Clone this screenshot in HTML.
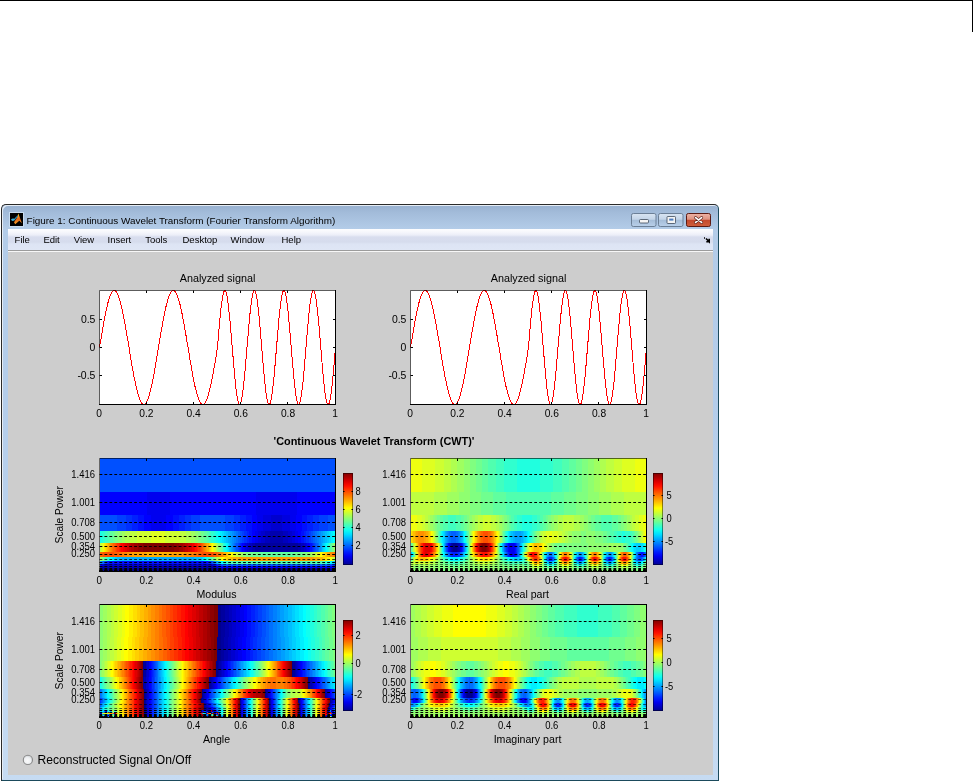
<!DOCTYPE html>
<html><head><meta charset="utf-8"><style>
html,body{margin:0;padding:0;width:973px;height:781px;overflow:hidden;background:#fff;font-family:"Liberation Sans", sans-serif}
.a{position:absolute}
</style></head><body>

<div class="a" style="left:0;top:0;width:973px;height:1px;background:#000"></div>
<div class="a" style="left:972px;top:0;width:1px;height:32px;background:#000"></div>
<div class="a" style="left:1px;top:204px;width:716px;height:575px;border:1px solid #2a2a2a;border-bottom-color:#1b4a5c;border-right-color:#1b4a5c;border-radius:5px 5px 0 0;background:linear-gradient(#97b0d0,#a3bcda 8px,#b3cce8 24px,#b4cdea 200px,#c6dbf2)"></div>
<div class="a" style="left:2px;top:205px;width:716px;height:574px;border-radius:5px 5px 0 0;box-shadow:inset 1px 1px 0 #e6edf5"></div>
<div class="a" style="left:8px;top:229px;width:705px;height:21px;background:linear-gradient(#fdfdfe,#f6f7fc 3px,#eceef8 6px,#d8ddee 8px,#d6dced 13px,#dde4f4 15px,#dfe6f5 20px)"></div>
<div class="a" style="left:8px;top:250px;width:705px;height:1px;background:#9c9c9c"></div>
<div class="a" style="left:8px;top:251px;width:705px;height:1px;background:#f7f7f7"></div>
<div class="a" style="left:8px;top:252px;width:705px;height:523px;background:#cdcdcd"></div>

<div class="a" style="left:100px;top:458px;width:235px;height:34px;background:#0050ff"></div>
<div class="a" style="left:100px;top:492px;width:235px;height:23px;background:linear-gradient(90deg,#0000ff 0 47px,#0000ef 47px 70px,#0000ff 70px 156px,#0000ef 156px 197px,#0000ff 197px 235px)"></div>
<div class="a" style="left:100px;top:515px;width:235px;height:16px;background:linear-gradient(90deg,#0050ff 0 17px,#0040ff 17px 26px,#0030ff 26px 32px,#0020ff 32px 38px,#0010ff 38px 44px,#0000ff 44px 51px,#0000ef 51px 66px,#0000ff 66px 73px,#0010ff 73px 79px,#0020ff 79px 85px,#0030ff 85px 91px,#0040ff 91px 100px,#0050ff 100px 125px,#0040ff 125px 134px,#0030ff 134px 140px,#0020ff 140px 146px,#0010ff 146px 152px,#0000ff 152px 157px,#0000ef 157px 163px,#0000df 163px 171px,#0000cf 171px 182px,#0000df 182px 190px,#0000ef 190px 196px,#0000ff 196px 202px,#0010ff 202px 207px,#0020ff 207px 213px,#0030ff 213px 219px,#0040ff 219px 228px,#0050ff 228px 235px)"></div>
<div class="a" style="left:100px;top:531px;width:235px;height:12px;background:linear-gradient(90deg,#10ffef 0 1px,#20ffdf 1px 3px,#30ffcf 3px 5px,#40ffbf 5px 8px,#50ffaf 8px 10px,#60ff9f 10px 13px,#70ff8f 13px 15px,#80ff80 15px 18px,#8fff70 18px 22px,#9fff60 22px 25px,#afff50 25px 30px,#bfff40 30px 37px,#cfff30 37px 51px,#dfff20 51px 65px,#cfff30 65px 80px,#bfff40 80px 86px,#afff50 86px 91px,#9fff60 91px 95px,#8fff70 95px 98px,#80ff80 98px 101px,#70ff8f 101px 104px,#60ff9f 104px 107px,#50ffaf 107px 109px,#40ffbf 109px 111px,#30ffcf 111px 114px,#20ffdf 114px 116px,#10ffef 116px 118px,#00ffff 118px 120px,#00efff 120px 122px,#00dfff 122px 124px,#00cfff 124px 126px,#00bfff 126px 128px,#00afff 128px 130px,#009fff 130px 132px,#008fff 132px 134px,#0080ff 134px 136px,#0070ff 136px 138px,#0060ff 138px 140px,#0050ff 140px 142px,#0040ff 142px 144px,#0030ff 144px 147px,#0020ff 147px 149px,#0010ff 149px 152px,#0000ff 152px 155px,#0000ef 155px 158px,#0000df 158px 161px,#0000cf 161px 165px,#0000bf 165px 170px,#0000af 170px 183px,#0000bf 183px 188px,#0000cf 188px 192px,#0000df 192px 195px,#0000ef 195px 198px,#0000ff 198px 201px,#0010ff 201px 204px,#0020ff 204px 206px,#0030ff 206px 209px,#0040ff 209px 211px,#0050ff 211px 213px,#0060ff 213px 215px,#0070ff 215px 217px,#0080ff 217px 219px,#008fff 219px 221px,#009fff 221px 223px,#00afff 223px 225px,#00bfff 225px 227px,#00cfff 227px 229px,#00dfff 229px 231px,#00efff 231px 233px,#00ffff 233px 235px)"></div>
<div class="a" style="left:100px;top:543px;width:235px;height:9px;background:linear-gradient(90deg,#bfff40 0 1px,#cfff30 1px 2px,#dfff20 2px 3px,#efff10 3px 4px,#ffef00 4px 5px,#ffdf00 5px 6px,#ffcf00 6px 7px,#ffbf00 7px 8px,#ffaf00 8px 9px,#ff9f00 9px 10px,#ff8f00 10px 11px,#ff8000 11px 12px,#ff7000 12px 13px,#ff6000 13px 15px,#ff5000 15px 16px,#ff4000 16px 17px,#ff3000 17px 19px,#ff2000 19px 20px,#ff1000 20px 21px,#ff0000 21px 23px,#ef0000 23px 25px,#df0000 25px 27px,#cf0000 27px 29px,#bf0000 29px 31px,#af0000 31px 34px,#9f0000 34px 38px,#8f0000 38px 43px,#800000 43px 74px,#8f0000 74px 79px,#9f0000 79px 83px,#af0000 83px 85px,#bf0000 85px 88px,#cf0000 88px 90px,#df0000 90px 92px,#ef0000 92px 94px,#ff0000 94px 95px,#ff1000 95px 97px,#ff2000 97px 98px,#ff3000 98px 100px,#ff4000 100px 101px,#ff5000 101px 102px,#ff6000 102px 103px,#ff7000 103px 104px,#ff8000 104px 105px,#ff8f00 105px 106px,#ff9f00 106px 107px,#ffaf00 107px 109px,#ffcf00 109px 110px,#ffdf00 110px 111px,#ffef00 111px 112px,#ffff00 112px 113px,#efff10 113px 114px,#dfff20 114px 115px,#cfff30 115px 116px,#bfff40 116px 117px,#9fff60 117px 118px,#8fff70 118px 119px,#80ff80 119px 120px,#70ff8f 120px 121px,#60ff9f 121px 122px,#50ffaf 122px 123px,#30ffcf 123px 124px,#20ffdf 124px 125px,#10ffef 125px 126px,#00ffff 126px 127px,#00efff 127px 128px,#00dfff 128px 129px,#00bfff 129px 130px,#00afff 130px 131px,#009fff 131px 132px,#008fff 132px 133px,#0080ff 133px 134px,#0070ff 134px 135px,#0060ff 135px 136px,#0050ff 136px 138px,#0040ff 138px 139px,#0030ff 139px 140px,#0020ff 140px 141px,#0010ff 141px 142px,#0000ff 142px 144px,#0000ef 144px 145px,#0000df 145px 147px,#0000cf 147px 149px,#0000bf 149px 152px,#0000af 152px 155px,#00009f 155px 198px,#0000af 198px 201px,#0000bf 201px 204px,#0000cf 204px 206px,#0000df 206px 207px,#0000ef 207px 209px,#0000ff 209px 210px,#0010ff 210px 212px,#0020ff 212px 213px,#0030ff 213px 214px,#0040ff 214px 215px,#0050ff 215px 216px,#0060ff 216px 218px,#0070ff 218px 219px,#008fff 219px 221px,#009fff 221px 222px,#00bfff 222px 223px,#00cfff 223px 224px,#00dfff 224px 225px,#00efff 225px 226px,#00ffff 226px 227px,#10ffef 227px 228px,#20ffdf 228px 229px,#40ffbf 229px 230px,#50ffaf 230px 231px,#60ff9f 231px 232px,#70ff8f 232px 233px,#80ff80 233px 234px,#9fff60 234px 235px)"></div>
<div class="a" style="left:100px;top:552px;width:235px;height:5px;background:linear-gradient(90deg,#ff6000 0 3px,#ff5000 3px 14px,#ff6000 14px 19px,#ff7000 19px 22px,#ff8000 22px 27px,#ff8f00 27px 32px,#ff9f00 32px 46px,#ffaf00 46px 70px,#ff9f00 70px 84px,#ff8f00 84px 90px,#ff8000 90px 94px,#ff7000 94px 98px,#ff6000 98px 102px,#ff5000 102px 114px,#ff6000 114px 117px,#ff7000 117px 119px,#ff8000 119px 121px,#ff8f00 121px 123px,#ff9f00 123px 124px,#ffaf00 124px 126px,#ffbf00 126px 127px,#ffcf00 127px 128px,#ffdf00 128px 130px,#ffef00 130px 131px,#ffff00 131px 132px,#efff10 132px 134px,#dfff20 134px 135px,#cfff30 135px 137px,#bfff40 137px 139px,#afff50 139px 141px,#9fff60 141px 143px,#8fff70 143px 146px,#80ff80 146px 150px,#70ff8f 150px 159px,#60ff9f 159px 194px,#70ff8f 194px 203px,#80ff80 203px 207px,#8fff70 207px 210px,#9fff60 210px 212px,#afff50 212px 214px,#bfff40 214px 216px,#cfff30 216px 217px,#dfff20 217px 219px,#efff10 219px 220px,#ffff00 220px 222px,#ffef00 222px 223px,#ffdf00 223px 225px,#ffcf00 225px 226px,#ffbf00 226px 227px,#ffaf00 227px 229px,#ff9f00 229px 230px,#ff8f00 230px 232px,#ff8000 232px 234px,#ff7000 234px 235px)"></div>
<div class="a" style="left:100px;top:557px;width:235px;height:4px;background:linear-gradient(90deg,#9fff60 0 1px,#8fff70 1px 2px,#80ff80 2px 3px,#70ff8f 3px 4px,#60ff9f 4px 5px,#50ffaf 5px 6px,#40ffbf 6px 7px,#30ffcf 7px 8px,#20ffdf 8px 9px,#10ffef 9px 10px,#00ffff 10px 12px,#00efff 12px 13px,#00dfff 13px 15px,#00cfff 15px 17px,#00bfff 17px 22px,#00afff 22px 94px,#00bfff 94px 99px,#00cfff 99px 102px,#00dfff 102px 103px,#00efff 103px 105px,#00ffff 105px 106px,#10ffef 106px 107px,#20ffdf 107px 109px,#40ffbf 109px 111px,#50ffaf 111px 112px,#70ff8f 112px 114px,#80ff80 114px 115px,#9fff60 115px 116px,#afff50 116px 117px,#bfff40 117px 119px,#cfff30 119px 120px,#dfff20 120px 121px,#efff10 121px 122px,#ffff00 122px 124px,#ffef00 124px 125px,#ffdf00 125px 127px,#ffcf00 127px 130px,#ffbf00 130px 133px,#ffaf00 133px 139px,#ff9f00 139px 214px,#ffaf00 214px 219px,#ffbf00 219px 223px,#ffcf00 223px 225px,#ffdf00 225px 227px,#ffef00 227px 229px,#ffff00 229px 230px,#efff10 230px 232px,#dfff20 232px 233px,#cfff30 233px 234px,#bfff40 234px 235px)"></div>
<div class="a" style="left:100px;top:561px;width:235px;height:3px;background:linear-gradient(90deg,#008fff 0 1px,#0080ff 1px 2px,#0070ff 2px 3px,#0060ff 3px 4px,#0050ff 4px 5px,#0040ff 5px 6px,#0030ff 6px 7px,#0020ff 7px 8px,#0010ff 8px 103px,#0000ff 103px 104px,#0010ff 104px 108px,#0020ff 108px 110px,#0030ff 110px 111px,#0040ff 111px 112px,#0050ff 112px 113px,#0060ff 113px 114px,#0070ff 114px 115px,#008fff 115px 116px,#009fff 116px 117px,#00afff 117px 118px,#00bfff 118px 119px,#00cfff 119px 120px,#00efff 120px 121px,#00ffff 121px 123px,#10ffef 123px 124px,#20ffdf 124px 126px,#30ffcf 126px 127px,#40ffbf 127px 131px,#50ffaf 131px 222px,#40ffbf 222px 225px,#30ffcf 225px 227px,#20ffdf 227px 229px,#10ffef 229px 230px,#00ffff 230px 231px,#00efff 231px 232px,#00dfff 232px 233px,#00cfff 233px 234px,#00bfff 234px 235px)"></div>
<div class="a" style="left:100px;top:564px;width:235px;height:2px;background:linear-gradient(90deg,#0000ff 0 1px,#0000ef 1px 2px,#0000df 2px 3px,#0000cf 3px 4px,#0000bf 4px 12px,#0000cf 12px 105px,#0000bf 105px 112px,#0000cf 112px 113px,#0000df 113px 115px,#0000ff 115px 116px,#0010ff 116px 117px,#0020ff 117px 118px,#0030ff 118px 120px,#0040ff 120px 121px,#0050ff 121px 123px,#0060ff 123px 230px,#0050ff 230px 232px,#0040ff 232px 233px,#0030ff 233px 234px,#0020ff 234px 235px)"></div>
<div class="a" style="left:100px;top:566px;width:235px;height:2px;background:linear-gradient(90deg,#0000bf 0 1px,#0000af 1px 2px,#00009f 2px 7px,#0000af 7px 110px,#00009f 110px 114px,#0000af 114px 116px,#0000bf 116px 117px,#0000cf 117px 118px,#0000df 118px 120px,#0000ef 120px 132px,#0000df 132px 134px,#0000ef 134px 233px,#0000df 233px 235px)"></div>
<div class="a" style="left:100px;top:568px;width:235px;height:1px;background:linear-gradient(90deg,#00009f 0 1px,#00008f 1px 3px,#00009f 3px 113px,#00008f 113px 115px,#00009f 115px 117px,#0000af 117px 118px,#0000bf 118px 124px,#0000af 124px 229px,#0000bf 229px 234px,#0000af 234px 235px)"></div>
<div class="a" style="left:100px;top:569px;width:235px;height:1px;background:linear-gradient(90deg,#00008f 0 118px,#00009f 118px 120px,#00008f 120px 233px,#00009f 233px 235px)"></div>
<div class="a" style="left:100px;top:570px;width:235px;height:1px;background:#00008f"></div>
<div class="a" style="left:411px;top:458px;width:235px;height:34px;background:linear-gradient(90deg,#efff10 0 11px,#dfff20 11px 24px,#cfff30 24px 33px,#bfff40 33px 40px,#afff50 40px 46px,#9fff60 46px 53px,#8fff70 53px 59px,#80ff80 59px 65px,#70ff8f 65px 71px,#60ff9f 71px 77px,#50ffaf 77px 85px,#40ffbf 85px 93px,#30ffcf 93px 106px,#20ffdf 106px 129px,#30ffcf 129px 142px,#40ffbf 142px 151px,#50ffaf 151px 158px,#60ff9f 158px 165px,#70ff8f 165px 171px,#80ff80 171px 177px,#8fff70 177px 183px,#9fff60 183px 189px,#afff50 189px 195px,#bfff40 195px 203px,#cfff30 203px 211px,#dfff20 211px 224px,#efff10 224px 235px)"></div>
<div class="a" style="left:411px;top:492px;width:235px;height:23px;background:linear-gradient(90deg,#bfff40 0 23px,#afff50 23px 36px,#9fff60 36px 48px,#8fff70 48px 59px,#80ff80 59px 70px,#70ff8f 70px 82px,#60ff9f 82px 95px,#50ffaf 95px 140px,#60ff9f 140px 153px,#70ff8f 153px 165px,#80ff80 165px 177px,#8fff70 177px 188px,#9fff60 188px 200px,#afff50 200px 213px,#bfff40 213px 235px)"></div>
<div class="a" style="left:411px;top:515px;width:235px;height:16px;background:linear-gradient(90deg,#efff10 0 6px,#dfff20 6px 11px,#cfff30 11px 14px,#bfff40 14px 17px,#afff50 17px 19px,#9fff60 19px 22px,#8fff70 22px 24px,#80ff80 24px 26px,#70ff8f 26px 29px,#60ff9f 29px 32px,#50ffaf 32px 37px,#40ffbf 37px 45px,#50ffaf 45px 50px,#60ff9f 50px 53px,#70ff8f 53px 56px,#80ff80 56px 58px,#8fff70 58px 61px,#9fff60 61px 64px,#afff50 64px 67px,#bfff40 67px 72px,#cfff30 72px 80px,#bfff40 80px 85px,#afff50 85px 88px,#9fff60 88px 91px,#8fff70 91px 93px,#80ff80 93px 96px,#70ff8f 96px 98px,#60ff9f 98px 100px,#50ffaf 100px 103px,#40ffbf 103px 106px,#30ffcf 106px 111px,#20ffdf 111px 121px,#30ffcf 121px 126px,#40ffbf 126px 129px,#50ffaf 129px 132px,#60ff9f 132px 135px,#70ff8f 135px 137px,#80ff80 137px 140px,#8fff70 140px 143px,#9fff60 143px 147px,#afff50 147px 152px,#bfff40 152px 163px,#afff50 163px 169px,#9fff60 169px 173px,#8fff70 173px 177px,#80ff80 177px 180px,#70ff8f 180px 184px,#60ff9f 184px 190px,#50ffaf 190px 201px,#60ff9f 201px 207px,#70ff8f 207px 210px,#80ff80 210px 213px,#8fff70 213px 216px,#9fff60 216px 219px,#afff50 219px 221px,#bfff40 221px 224px,#cfff30 224px 228px,#dfff20 228px 232px,#efff10 232px 235px)"></div>
<div class="a" style="left:411px;top:531px;width:235px;height:12px;background:linear-gradient(90deg,#ffdf00 0 1px,#ffcf00 1px 2px,#ffbf00 2px 4px,#ffaf00 4px 5px,#ff9f00 5px 7px,#ff8f00 7px 13px,#ff9f00 13px 15px,#ffaf00 15px 17px,#ffbf00 17px 18px,#ffcf00 18px 19px,#ffdf00 19px 20px,#ffff00 20px 21px,#efff10 21px 22px,#dfff20 22px 23px,#bfff40 23px 24px,#afff50 24px 25px,#8fff70 25px 26px,#80ff80 26px 27px,#60ff9f 27px 28px,#40ffbf 28px 29px,#30ffcf 29px 30px,#10ffef 30px 31px,#00efff 31px 32px,#00dfff 32px 33px,#00cfff 33px 34px,#00afff 34px 35px,#009fff 35px 36px,#008fff 36px 37px,#0080ff 37px 38px,#0070ff 38px 40px,#0060ff 40px 45px,#0070ff 45px 47px,#0080ff 47px 48px,#008fff 48px 49px,#009fff 49px 50px,#00afff 50px 51px,#00bfff 51px 52px,#00dfff 52px 53px,#00ffff 53px 54px,#10ffef 54px 55px,#30ffcf 55px 56px,#50ffaf 56px 57px,#60ff9f 57px 58px,#8fff70 58px 59px,#9fff60 59px 60px,#bfff40 60px 61px,#dfff20 61px 62px,#ffff00 62px 63px,#ffef00 63px 64px,#ffcf00 64px 65px,#ffbf00 65px 66px,#ff9f00 66px 67px,#ff8f00 67px 68px,#ff8000 68px 69px,#ff7000 69px 70px,#ff6000 70px 72px,#ff5000 72px 77px,#ff6000 77px 79px,#ff7000 79px 80px,#ff8000 80px 81px,#ff8f00 81px 82px,#ff9f00 82px 83px,#ffbf00 83px 84px,#ffcf00 84px 85px,#ffef00 85px 86px,#ffff00 86px 87px,#efff10 87px 88px,#cfff30 88px 89px,#afff50 89px 90px,#9fff60 90px 91px,#80ff80 91px 92px,#60ff9f 92px 93px,#50ffaf 93px 94px,#30ffcf 94px 95px,#20ffdf 95px 96px,#10ffef 96px 97px,#00efff 97px 98px,#00dfff 98px 99px,#00cfff 99px 100px,#00bfff 100px 102px,#00afff 102px 104px,#009fff 104px 110px,#00afff 110px 112px,#00bfff 112px 113px,#00cfff 113px 115px,#00dfff 115px 116px,#00efff 116px 117px,#00ffff 117px 118px,#10ffef 118px 119px,#20ffdf 119px 120px,#30ffcf 120px 121px,#40ffbf 121px 122px,#50ffaf 122px 123px,#60ff9f 123px 124px,#70ff8f 124px 125px,#80ff80 125px 126px,#8fff70 126px 128px,#9fff60 128px 129px,#afff50 129px 130px,#bfff40 130px 132px,#cfff30 132px 135px,#dfff20 135px 139px,#efff10 139px 141px,#dfff20 141px 147px,#cfff30 147px 151px,#bfff40 151px 154px,#afff50 154px 157px,#9fff60 157px 161px,#8fff70 161px 170px,#80ff80 170px 175px,#8fff70 175px 184px,#80ff80 184px 192px,#70ff8f 192px 196px,#60ff9f 196px 199px,#50ffaf 199px 203px,#40ffbf 203px 206px,#30ffcf 206px 211px,#20ffdf 211px 214px,#30ffcf 214px 219px,#40ffbf 219px 221px,#50ffaf 221px 223px,#60ff9f 223px 224px,#70ff8f 224px 226px,#80ff80 226px 227px,#8fff70 227px 228px,#9fff60 228px 229px,#afff50 229px 230px,#bfff40 230px 231px,#cfff30 231px 232px,#dfff20 232px 233px,#efff10 233px 234px,#ffff00 234px 235px)"></div>
<div class="a" style="left:411px;top:543px;width:235px;height:9px;background:linear-gradient(90deg,#60ff9f 0 1px,#80ff80 1px 2px,#afff50 2px 3px,#cfff30 3px 4px,#efff10 4px 5px,#ffdf00 5px 6px,#ffbf00 6px 7px,#ff8f00 7px 8px,#ff7000 8px 9px,#ff5000 9px 10px,#ff3000 10px 11px,#ff2000 11px 12px,#ff0000 12px 13px,#ef0000 13px 14px,#df0000 14px 19px,#ef0000 19px 20px,#ff0000 20px 21px,#ff2000 21px 22px,#ff4000 22px 23px,#ff6000 23px 24px,#ff8000 24px 25px,#ffbf00 25px 26px,#ffdf00 26px 27px,#efff10 27px 28px,#afff50 28px 29px,#80ff80 29px 30px,#50ffaf 30px 31px,#10ffef 31px 32px,#00dfff 32px 33px,#00afff 33px 34px,#0080ff 34px 35px,#0050ff 35px 36px,#0030ff 36px 37px,#0000ff 37px 38px,#0000df 38px 39px,#0000cf 39px 40px,#0000af 40px 41px,#00009f 41px 42px,#00008f 42px 46px,#00009f 46px 47px,#0000af 47px 48px,#0000bf 48px 49px,#0000df 49px 50px,#0000ff 50px 51px,#0020ff 51px 52px,#0050ff 52px 53px,#0080ff 53px 54px,#00afff 54px 55px,#00dfff 55px 56px,#20ffdf 56px 57px,#50ffaf 57px 58px,#8fff70 58px 59px,#bfff40 59px 60px,#efff10 60px 61px,#ffcf00 61px 62px,#ff9f00 62px 63px,#ff7000 63px 64px,#ff4000 64px 65px,#ff1000 65px 66px,#ef0000 66px 67px,#cf0000 67px 68px,#af0000 68px 69px,#9f0000 69px 70px,#8f0000 70px 71px,#800000 71px 75px,#8f0000 75px 76px,#9f0000 76px 77px,#af0000 77px 78px,#cf0000 78px 79px,#ef0000 79px 80px,#ff2000 80px 81px,#ff4000 81px 82px,#ff7000 82px 83px,#ff9f00 83px 84px,#ffcf00 84px 85px,#efff10 85px 86px,#bfff40 86px 87px,#8fff70 87px 88px,#50ffaf 88px 89px,#20ffdf 89px 90px,#00ffff 90px 91px,#00bfff 91px 92px,#009fff 92px 93px,#0070ff 93px 94px,#0050ff 94px 95px,#0030ff 95px 96px,#0020ff 96px 97px,#0000ff 97px 98px,#0000ef 98px 103px,#0000ff 103px 104px,#0010ff 104px 105px,#0030ff 105px 106px,#0050ff 106px 107px,#0060ff 107px 108px,#0080ff 108px 109px,#00afff 109px 110px,#00cfff 110px 111px,#00efff 111px 112px,#20ffdf 112px 113px,#40ffbf 113px 114px,#60ff9f 114px 115px,#8fff70 115px 116px,#afff50 116px 117px,#cfff30 117px 118px,#efff10 118px 119px,#ffff00 119px 120px,#ffef00 120px 121px,#ffdf00 121px 122px,#ffcf00 122px 123px,#ffbf00 123px 128px,#ffcf00 128px 130px,#ffdf00 130px 131px,#ffef00 131px 132px,#ffff00 132px 133px,#efff10 133px 134px,#dfff20 134px 135px,#cfff30 135px 136px,#bfff40 136px 137px,#afff50 137px 139px,#9fff60 139px 140px,#8fff70 140px 142px,#80ff80 142px 144px,#70ff8f 144px 155px,#80ff80 155px 177px,#8fff70 177px 198px,#9fff60 198px 209px,#8fff70 209px 212px,#80ff80 212px 213px,#70ff8f 213px 215px,#60ff9f 215px 216px,#50ffaf 216px 217px,#40ffbf 217px 218px,#30ffcf 218px 219px,#20ffdf 219px 220px,#10ffef 220px 221px,#00ffff 221px 222px,#00efff 222px 223px,#00dfff 223px 225px,#00cfff 225px 230px,#00dfff 230px 232px,#00efff 232px 233px,#10ffef 233px 234px,#20ffdf 234px 235px)"></div>
<div class="a" style="left:411px;top:552px;width:235px;height:5px;background:linear-gradient(90deg,#00bfff 0 1px,#00ffff 1px 2px,#30ffcf 2px 3px,#60ff9f 3px 4px,#afff50 4px 5px,#dfff20 5px 6px,#ffef00 6px 7px,#ffaf00 7px 8px,#ff8000 8px 9px,#ff6000 9px 10px,#ff3000 10px 11px,#ff1000 11px 12px,#ff0000 12px 13px,#ef0000 13px 14px,#df0000 14px 16px,#ef0000 16px 18px,#ff0000 18px 19px,#ff2000 19px 20px,#ff3000 20px 21px,#ff5000 21px 22px,#ff7000 22px 23px,#ff8f00 23px 24px,#ffaf00 24px 25px,#ffdf00 25px 26px,#efff10 26px 27px,#cfff30 27px 28px,#9fff60 28px 29px,#80ff80 29px 30px,#50ffaf 30px 31px,#20ffdf 31px 32px,#00ffff 32px 33px,#00dfff 33px 34px,#00bfff 34px 35px,#009fff 35px 36px,#0080ff 36px 37px,#0060ff 37px 38px,#0050ff 38px 39px,#0040ff 39px 40px,#0030ff 40px 41px,#0020ff 41px 46px,#0030ff 46px 48px,#0040ff 48px 49px,#0060ff 49px 50px,#0070ff 50px 51px,#008fff 51px 52px,#00afff 52px 53px,#00cfff 53px 54px,#00efff 54px 55px,#10ffef 55px 56px,#40ffbf 56px 57px,#60ff9f 57px 58px,#8fff70 58px 59px,#afff50 59px 60px,#cfff30 60px 61px,#ffff00 61px 62px,#ffdf00 62px 63px,#ffbf00 63px 64px,#ff9f00 64px 65px,#ff8000 65px 66px,#ff6000 66px 67px,#ff5000 67px 68px,#ff4000 68px 69px,#ff3000 69px 70px,#ff2000 70px 71px,#ff1000 71px 76px,#ff2000 76px 77px,#ff3000 77px 78px,#ff4000 78px 79px,#ff5000 79px 80px,#ff7000 80px 81px,#ff8f00 81px 82px,#ffaf00 82px 83px,#ffcf00 83px 84px,#ffef00 84px 85px,#dfff20 85px 86px,#bfff40 86px 87px,#9fff60 87px 88px,#70ff8f 88px 89px,#40ffbf 89px 90px,#20ffdf 90px 91px,#00efff 91px 92px,#00cfff 92px 93px,#009fff 93px 94px,#0080ff 94px 95px,#0060ff 95px 96px,#0040ff 96px 97px,#0020ff 97px 98px,#0010ff 98px 99px,#0000ff 99px 100px,#0000ef 100px 103px,#0000ff 103px 104px,#0010ff 104px 105px,#0020ff 105px 106px,#0050ff 106px 107px,#0070ff 107px 108px,#008fff 108px 109px,#00cfff 109px 110px,#00ffff 110px 111px,#30ffcf 111px 112px,#70ff8f 112px 113px,#afff50 113px 114px,#dfff20 114px 115px,#ffdf00 115px 116px,#ffaf00 116px 117px,#ff7000 117px 118px,#ff5000 118px 119px,#ff3000 119px 120px,#ff1000 120px 121px,#ff0000 121px 123px,#ff1000 123px 124px,#ff2000 124px 125px,#ff3000 125px 126px,#ff6000 126px 127px,#ff8f00 127px 128px,#ffbf00 128px 129px,#ffff00 129px 130px,#cfff30 130px 131px,#8fff70 131px 132px,#50ffaf 132px 133px,#20ffdf 133px 134px,#00efff 134px 135px,#00bfff 135px 136px,#009fff 136px 137px,#0080ff 137px 138px,#0070ff 138px 141px,#008fff 141px 142px,#00afff 142px 143px,#00cfff 143px 144px,#00ffff 144px 145px,#30ffcf 145px 146px,#60ff9f 146px 147px,#9fff60 147px 148px,#cfff30 148px 149px,#ffff00 149px 150px,#ffcf00 150px 151px,#ffaf00 151px 152px,#ff8f00 152px 153px,#ff8000 153px 156px,#ff9f00 156px 157px,#ffaf00 157px 158px,#ffcf00 158px 159px,#efff10 159px 160px,#cfff30 160px 161px,#9fff60 161px 162px,#60ff9f 162px 163px,#30ffcf 163px 164px,#00ffff 164px 165px,#00cfff 165px 166px,#00bfff 166px 167px,#009fff 167px 168px,#008fff 168px 170px,#009fff 170px 171px,#00afff 171px 172px,#00cfff 172px 173px,#00efff 173px 174px,#30ffcf 174px 175px,#50ffaf 175px 176px,#80ff80 176px 177px,#bfff40 177px 178px,#efff10 178px 179px,#ffef00 179px 180px,#ffbf00 180px 181px,#ff9f00 181px 182px,#ff8f00 182px 183px,#ff8000 183px 185px,#ff8f00 185px 186px,#ffaf00 186px 187px,#ffcf00 187px 188px,#ffef00 188px 189px,#dfff20 189px 190px,#afff50 190px 191px,#80ff80 191px 192px,#40ffbf 192px 193px,#10ffef 193px 194px,#00efff 194px 195px,#00bfff 195px 196px,#00afff 196px 197px,#009fff 197px 198px,#008fff 198px 200px,#009fff 200px 201px,#00bfff 201px 202px,#00dfff 202px 203px,#10ffef 203px 204px,#40ffbf 204px 205px,#70ff8f 205px 206px,#9fff60 206px 207px,#dfff20 207px 208px,#ffef00 208px 209px,#ffbf00 209px 210px,#ff8f00 210px 211px,#ff8000 211px 212px,#ff6000 212px 215px,#ff7000 215px 216px,#ff8f00 216px 217px,#ffaf00 217px 218px,#ffcf00 218px 219px,#efff10 219px 220px,#bfff40 220px 221px,#80ff80 221px 222px,#40ffbf 222px 223px,#00ffff 223px 224px,#00cfff 224px 225px,#008fff 225px 226px,#0070ff 226px 227px,#0050ff 227px 228px,#0030ff 228px 229px,#0020ff 229px 230px,#0010ff 230px 232px,#0020ff 232px 233px,#0040ff 233px 234px,#0060ff 234px 235px)"></div>
<div class="a" style="left:411px;top:557px;width:235px;height:4px;background:linear-gradient(90deg,#50ffaf 0 1px,#80ff80 1px 2px,#9fff60 2px 3px,#cfff30 3px 4px,#efff10 4px 5px,#ffff00 5px 6px,#ffdf00 6px 7px,#ffcf00 7px 9px,#ffbf00 9px 14px,#ffcf00 14px 16px,#ffdf00 16px 18px,#ffef00 18px 19px,#ffff00 19px 21px,#efff10 21px 22px,#dfff20 22px 24px,#cfff30 24px 25px,#bfff40 25px 26px,#afff50 26px 27px,#9fff60 27px 28px,#8fff70 28px 29px,#80ff80 29px 30px,#70ff8f 30px 31px,#60ff9f 31px 32px,#50ffaf 32px 33px,#40ffbf 33px 34px,#30ffcf 34px 35px,#20ffdf 35px 37px,#10ffef 37px 38px,#00ffff 38px 40px,#00efff 40px 47px,#00ffff 47px 49px,#10ffef 49px 51px,#20ffdf 51px 52px,#30ffcf 52px 53px,#40ffbf 53px 55px,#60ff9f 55px 57px,#70ff8f 57px 58px,#8fff70 58px 59px,#9fff60 59px 61px,#bfff40 61px 63px,#cfff30 63px 64px,#dfff20 64px 65px,#efff10 65px 66px,#ffff00 66px 68px,#ffef00 68px 70px,#ffdf00 70px 77px,#ffef00 77px 79px,#ffff00 79px 80px,#efff10 80px 82px,#dfff20 82px 83px,#cfff30 83px 84px,#bfff40 84px 85px,#afff50 85px 86px,#9fff60 86px 87px,#8fff70 87px 88px,#80ff80 88px 89px,#70ff8f 89px 90px,#60ff9f 90px 91px,#50ffaf 91px 92px,#40ffbf 92px 94px,#30ffcf 94px 95px,#20ffdf 95px 96px,#10ffef 96px 97px,#00ffff 97px 99px,#00efff 99px 101px,#00dfff 101px 103px,#00cfff 103px 109px,#00dfff 109px 110px,#00efff 110px 111px,#10ffef 111px 112px,#30ffcf 112px 113px,#40ffbf 113px 114px,#70ff8f 114px 115px,#9fff60 115px 116px,#bfff40 116px 117px,#ffff00 117px 118px,#ffdf00 118px 119px,#ffaf00 119px 120px,#ff8000 120px 121px,#ff6000 121px 122px,#ff4000 122px 123px,#ff3000 123px 126px,#ff5000 126px 127px,#ff7000 127px 128px,#ff8f00 128px 129px,#ffcf00 129px 130px,#efff10 130px 131px,#afff50 131px 132px,#60ff9f 132px 133px,#10ffef 133px 134px,#00dfff 134px 135px,#008fff 135px 136px,#0060ff 136px 137px,#0040ff 137px 138px,#0020ff 138px 141px,#0040ff 141px 142px,#0060ff 142px 143px,#008fff 143px 144px,#00cfff 144px 145px,#20ffdf 145px 146px,#60ff9f 146px 147px,#bfff40 147px 148px,#ffff00 148px 149px,#ffbf00 149px 150px,#ff7000 150px 151px,#ff4000 151px 152px,#ff2000 152px 153px,#ff1000 153px 154px,#ff0000 154px 155px,#ff1000 155px 156px,#ff3000 156px 157px,#ff5000 157px 158px,#ff8f00 158px 159px,#ffcf00 159px 160px,#dfff20 160px 161px,#9fff60 161px 162px,#40ffbf 162px 163px,#00ffff 163px 164px,#00bfff 164px 165px,#0080ff 165px 166px,#0050ff 166px 167px,#0030ff 167px 168px,#0010ff 168px 170px,#0020ff 170px 171px,#0040ff 171px 172px,#0070ff 172px 173px,#009fff 173px 174px,#00efff 174px 175px,#40ffbf 175px 176px,#80ff80 176px 177px,#dfff20 177px 178px,#ffdf00 178px 179px,#ff9f00 179px 180px,#ff6000 180px 181px,#ff3000 181px 182px,#ff1000 182px 183px,#ff0000 183px 184px,#ff1000 184px 185px,#ff2000 185px 186px,#ff4000 186px 187px,#ff7000 187px 188px,#ff9f00 188px 189px,#ffef00 189px 190px,#bfff40 190px 191px,#80ff80 191px 192px,#20ffdf 192px 193px,#00dfff 193px 194px,#009fff 194px 195px,#0060ff 195px 196px,#0040ff 196px 197px,#0020ff 197px 198px,#0010ff 198px 199px,#0020ff 199px 200px,#0030ff 200px 201px,#0060ff 201px 202px,#008fff 202px 203px,#00bfff 203px 204px,#20ffdf 204px 205px,#60ff9f 205px 206px,#afff50 206px 207px,#ffff00 207px 208px,#ffbf00 208px 209px,#ff8000 209px 210px,#ff5000 210px 211px,#ff2000 211px 212px,#ff1000 212px 215px,#ff3000 215px 216px,#ff5000 216px 217px,#ff8000 217px 218px,#ffbf00 218px 219px,#efff10 219px 220px,#afff50 220px 221px,#70ff8f 221px 222px,#20ffdf 222px 223px,#00dfff 223px 224px,#00afff 224px 225px,#0080ff 225px 226px,#0060ff 226px 227px,#0050ff 227px 228px,#0040ff 228px 230px,#0050ff 230px 231px,#0070ff 231px 232px,#008fff 232px 233px,#00bfff 233px 234px,#00efff 234px 235px)"></div>
<div class="a" style="left:411px;top:561px;width:235px;height:3px;background:linear-gradient(90deg,#9fff60 0 1px,#bfff40 1px 3px,#cfff30 3px 18px,#bfff40 18px 22px,#afff50 22px 25px,#9fff60 25px 27px,#8fff70 27px 29px,#80ff80 29px 31px,#70ff8f 31px 34px,#60ff9f 34px 36px,#50ffaf 36px 40px,#40ffbf 40px 48px,#50ffaf 48px 52px,#60ff9f 52px 54px,#70ff8f 54px 56px,#80ff80 56px 58px,#8fff70 58px 61px,#9fff60 61px 63px,#afff50 63px 66px,#bfff40 66px 69px,#cfff30 69px 77px,#bfff40 77px 81px,#afff50 81px 84px,#9fff60 84px 86px,#8fff70 86px 88px,#80ff80 88px 90px,#70ff8f 90px 92px,#60ff9f 92px 95px,#50ffaf 95px 100px,#40ffbf 100px 114px,#50ffaf 114px 115px,#60ff9f 115px 116px,#70ff8f 116px 117px,#8fff70 117px 118px,#afff50 118px 119px,#cfff30 119px 120px,#efff10 120px 121px,#ffef00 121px 122px,#ffcf00 122px 123px,#ffbf00 123px 124px,#ffaf00 124px 125px,#ff9f00 125px 126px,#ffaf00 126px 127px,#ffbf00 127px 128px,#ffcf00 128px 129px,#ffff00 129px 130px,#dfff20 130px 131px,#afff50 131px 132px,#80ff80 132px 133px,#50ffaf 133px 134px,#20ffdf 134px 135px,#00efff 135px 136px,#00cfff 136px 137px,#00afff 137px 138px,#009fff 138px 141px,#00afff 141px 142px,#00cfff 142px 143px,#00dfff 143px 144px,#10ffef 144px 145px,#40ffbf 145px 146px,#70ff8f 146px 147px,#9fff60 147px 148px,#cfff30 148px 149px,#ffff00 149px 150px,#ffcf00 150px 151px,#ffaf00 151px 152px,#ff9f00 152px 153px,#ff8f00 153px 156px,#ff9f00 156px 157px,#ffbf00 157px 158px,#ffdf00 158px 159px,#efff10 159px 160px,#bfff40 160px 161px,#8fff70 161px 162px,#60ff9f 162px 163px,#30ffcf 163px 164px,#10ffef 164px 165px,#00dfff 165px 166px,#00bfff 166px 167px,#00afff 167px 168px,#009fff 168px 171px,#00bfff 171px 172px,#00dfff 172px 173px,#00ffff 173px 174px,#30ffcf 174px 175px,#50ffaf 175px 176px,#80ff80 176px 177px,#bfff40 177px 178px,#efff10 178px 179px,#ffef00 179px 180px,#ffbf00 180px 181px,#ffaf00 181px 182px,#ff9f00 182px 183px,#ff8f00 183px 185px,#ff9f00 185px 186px,#ffaf00 186px 187px,#ffcf00 187px 188px,#ffef00 188px 189px,#dfff20 189px 190px,#afff50 190px 191px,#80ff80 191px 192px,#40ffbf 192px 193px,#20ffdf 193px 194px,#00efff 194px 195px,#00cfff 195px 196px,#00afff 196px 197px,#009fff 197px 200px,#00afff 200px 201px,#00cfff 201px 202px,#00efff 202px 203px,#10ffef 203px 204px,#40ffbf 204px 205px,#70ff8f 205px 206px,#9fff60 206px 207px,#cfff30 207px 208px,#ffff00 208px 209px,#ffdf00 209px 210px,#ffaf00 210px 211px,#ff9f00 211px 212px,#ff8f00 212px 215px,#ff9f00 215px 216px,#ffbf00 216px 217px,#ffdf00 217px 218px,#efff10 218px 219px,#bfff40 219px 220px,#8fff70 220px 221px,#60ff9f 221px 222px,#30ffcf 222px 223px,#00ffff 223px 224px,#00dfff 224px 225px,#00cfff 225px 226px,#00bfff 226px 227px,#00afff 227px 228px,#00bfff 228px 229px,#00cfff 229px 230px,#00dfff 230px 231px,#00ffff 231px 232px,#20ffdf 232px 233px,#40ffbf 233px 234px,#70ff8f 234px 235px)"></div>
<div class="a" style="left:411px;top:564px;width:235px;height:2px;background:linear-gradient(90deg,#9fff60 0 1px,#afff50 1px 3px,#9fff60 3px 12px,#afff50 12px 18px,#9fff60 18px 25px,#8fff70 25px 29px,#80ff80 29px 34px,#70ff8f 34px 40px,#60ff9f 40px 48px,#70ff8f 48px 54px,#80ff80 54px 58px,#8fff70 58px 63px,#9fff60 63px 69px,#afff50 69px 77px,#9fff60 77px 84px,#8fff70 84px 88px,#80ff80 88px 93px,#70ff8f 93px 99px,#60ff9f 99px 105px,#70ff8f 105px 113px,#60ff9f 113px 116px,#70ff8f 116px 118px,#80ff80 118px 119px,#8fff70 119px 120px,#afff50 120px 121px,#bfff40 121px 122px,#dfff20 122px 123px,#efff10 123px 128px,#dfff20 128px 129px,#bfff40 129px 130px,#afff50 130px 131px,#9fff60 131px 132px,#80ff80 132px 133px,#70ff8f 133px 134px,#50ffaf 134px 135px,#40ffbf 135px 136px,#30ffcf 136px 137px,#20ffdf 137px 142px,#30ffcf 142px 143px,#40ffbf 143px 144px,#50ffaf 144px 145px,#60ff9f 145px 146px,#80ff80 146px 147px,#8fff70 147px 148px,#afff50 148px 149px,#bfff40 149px 150px,#cfff30 150px 151px,#dfff20 151px 152px,#efff10 152px 157px,#dfff20 157px 158px,#cfff30 158px 159px,#bfff40 159px 160px,#9fff60 160px 161px,#8fff70 161px 162px,#70ff8f 162px 163px,#60ff9f 163px 164px,#50ffaf 164px 165px,#40ffbf 165px 166px,#30ffcf 166px 167px,#20ffdf 167px 171px,#30ffcf 171px 173px,#40ffbf 173px 174px,#60ff9f 174px 175px,#70ff8f 175px 176px,#80ff80 176px 177px,#9fff60 177px 178px,#afff50 178px 179px,#cfff30 179px 180px,#dfff20 180px 182px,#efff10 182px 186px,#dfff20 186px 187px,#cfff30 187px 188px,#bfff40 188px 189px,#afff50 189px 190px,#9fff60 190px 191px,#80ff80 191px 192px,#70ff8f 192px 193px,#50ffaf 193px 194px,#40ffbf 194px 195px,#30ffcf 195px 196px,#20ffdf 196px 201px,#30ffcf 201px 202px,#40ffbf 202px 203px,#50ffaf 203px 204px,#60ff9f 204px 205px,#80ff80 205px 206px,#8fff70 206px 207px,#afff50 207px 208px,#bfff40 208px 209px,#cfff30 209px 210px,#dfff20 210px 211px,#efff10 211px 216px,#dfff20 216px 217px,#cfff30 217px 218px,#bfff40 218px 219px,#9fff60 219px 220px,#8fff70 220px 221px,#70ff8f 221px 222px,#60ff9f 222px 223px,#50ffaf 223px 224px,#30ffcf 224px 225px,#20ffdf 225px 230px,#30ffcf 230px 231px,#50ffaf 231px 232px,#60ff9f 232px 233px,#70ff8f 233px 234px,#8fff70 234px 235px)"></div>
<div class="a" style="left:411px;top:566px;width:235px;height:2px;background:linear-gradient(90deg,#9fff60 0 2px,#8fff70 2px 9px,#9fff60 9px 20px,#8fff70 20px 29px,#80ff80 29px 38px,#70ff8f 38px 49px,#80ff80 49px 58px,#8fff70 58px 68px,#9fff60 68px 79px,#8fff70 79px 88px,#80ff80 88px 97px,#70ff8f 97px 108px,#80ff80 108px 115px,#70ff8f 115px 117px,#80ff80 117px 119px,#8fff70 119px 120px,#9fff60 120px 121px,#afff50 121px 123px,#bfff40 123px 126px,#afff50 126px 129px,#9fff60 129px 131px,#8fff70 131px 132px,#80ff80 132px 134px,#70ff8f 134px 135px,#60ff9f 135px 138px,#50ffaf 138px 141px,#60ff9f 141px 144px,#70ff8f 144px 145px,#80ff80 145px 147px,#8fff70 147px 148px,#9fff60 148px 150px,#afff50 150px 153px,#bfff40 153px 156px,#afff50 156px 159px,#9fff60 159px 160px,#8fff70 160px 162px,#80ff80 162px 163px,#70ff8f 163px 165px,#60ff9f 165px 168px,#50ffaf 168px 170px,#60ff9f 170px 173px,#70ff8f 173px 175px,#80ff80 175px 177px,#8fff70 177px 178px,#9fff60 178px 180px,#afff50 180px 183px,#bfff40 183px 185px,#afff50 185px 188px,#9fff60 188px 190px,#8fff70 190px 191px,#80ff80 191px 193px,#70ff8f 193px 195px,#60ff9f 195px 197px,#50ffaf 197px 200px,#60ff9f 200px 203px,#70ff8f 203px 204px,#80ff80 204px 206px,#8fff70 206px 207px,#9fff60 207px 209px,#afff50 209px 212px,#bfff40 212px 215px,#afff50 215px 217px,#9fff60 217px 219px,#8fff70 219px 221px,#80ff80 221px 222px,#70ff8f 222px 224px,#60ff9f 224px 226px,#50ffaf 226px 230px,#60ff9f 230px 231px,#70ff8f 231px 233px,#80ff80 233px 234px,#8fff70 234px 235px)"></div>
<div class="a" style="left:411px;top:568px;width:235px;height:1px;background:linear-gradient(90deg,#8fff70 0 29px,#80ff80 29px 58px,#8fff70 58px 88px,#80ff80 88px 119px,#8fff70 119px 121px,#9fff60 121px 129px,#8fff70 129px 132px,#80ff80 132px 136px,#70ff8f 136px 144px,#80ff80 144px 147px,#8fff70 147px 150px,#9fff60 150px 159px,#8fff70 159px 162px,#80ff80 162px 165px,#70ff8f 165px 173px,#80ff80 173px 177px,#8fff70 177px 180px,#9fff60 180px 188px,#8fff70 188px 191px,#80ff80 191px 195px,#70ff8f 195px 203px,#80ff80 203px 206px,#8fff70 206px 209px,#9fff60 209px 217px,#8fff70 217px 221px,#80ff80 221px 224px,#70ff8f 224px 232px,#80ff80 232px 234px,#8fff70 234px 235px)"></div>
<div class="a" style="left:411px;top:569px;width:235px;height:1px;background:linear-gradient(90deg,#8fff70 0 29px,#80ff80 29px 58px,#8fff70 58px 88px,#80ff80 88px 118px,#8fff70 118px 132px,#80ff80 132px 147px,#8fff70 147px 162px,#80ff80 162px 176px,#8fff70 176px 191px,#80ff80 191px 206px,#8fff70 206px 221px,#80ff80 221px 234px,#8fff70 234px 235px)"></div>
<div class="a" style="left:411px;top:570px;width:235px;height:1px;background:linear-gradient(90deg,#8fff70 0 30px,#80ff80 30px 58px,#8fff70 58px 89px,#80ff80 89px 118px,#8fff70 118px 132px,#80ff80 132px 147px,#8fff70 147px 162px,#80ff80 162px 176px,#8fff70 176px 192px,#80ff80 192px 206px,#8fff70 206px 221px,#80ff80 221px 235px)"></div>
<div class="a" style="left:100px;top:604px;width:235px;height:33px;background:linear-gradient(90deg,#8fff70 0 3px,#9fff60 3px 7px,#afff50 7px 11px,#bfff40 11px 14px,#cfff30 14px 18px,#dfff20 18px 22px,#efff10 22px 25px,#ffff00 25px 29px,#ffef00 29px 33px,#ffdf00 33px 37px,#ffcf00 37px 40px,#ffbf00 40px 44px,#ffaf00 44px 48px,#ff9f00 48px 51px,#ff8f00 51px 55px,#ff8000 55px 59px,#ff7000 59px 62px,#ff6000 62px 66px,#ff5000 66px 70px,#ff4000 70px 73px,#ff3000 73px 77px,#ff2000 77px 81px,#ff1000 81px 85px,#ff0000 85px 88px,#ef0000 88px 92px,#df0000 92px 96px,#cf0000 96px 99px,#bf0000 99px 103px,#af0000 103px 107px,#9f0000 107px 110px,#8f0000 110px 114px,#800000 114px 118px,#00008f 118px 121px,#00009f 121px 125px,#0000af 125px 129px,#0000bf 129px 132px,#0000cf 132px 136px,#0000df 136px 140px,#0000ef 140px 144px,#0000ff 144px 147px,#0010ff 147px 151px,#0020ff 151px 155px,#0030ff 155px 158px,#0040ff 158px 162px,#0050ff 162px 166px,#0060ff 166px 169px,#0070ff 169px 173px,#0080ff 173px 177px,#008fff 177px 180px,#009fff 180px 184px,#00afff 184px 188px,#00bfff 188px 192px,#00cfff 192px 195px,#00dfff 195px 199px,#00efff 199px 203px,#00ffff 203px 206px,#10ffef 206px 210px,#20ffdf 210px 214px,#30ffcf 214px 217px,#40ffbf 217px 221px,#50ffaf 221px 225px,#60ff9f 225px 228px,#70ff8f 228px 232px,#80ff80 232px 235px)"></div>
<div class="a" style="left:100px;top:637px;width:235px;height:24px;background:linear-gradient(90deg,#8fff70 0 3px,#9fff60 3px 7px,#afff50 7px 10px,#bfff40 10px 14px,#cfff30 14px 17px,#dfff20 17px 21px,#efff10 21px 24px,#ffff00 24px 28px,#ffef00 28px 32px,#ffdf00 32px 35px,#ffcf00 35px 39px,#ffbf00 39px 43px,#ffaf00 43px 47px,#ff9f00 47px 51px,#ff8f00 51px 55px,#ff8000 55px 59px,#ff7000 59px 63px,#ff6000 63px 67px,#ff5000 67px 70px,#ff4000 70px 74px,#ff3000 74px 78px,#ff2000 78px 82px,#ff1000 82px 85px,#ff0000 85px 89px,#ef0000 89px 93px,#df0000 93px 96px,#cf0000 96px 100px,#bf0000 100px 103px,#af0000 103px 107px,#9f0000 107px 111px,#8f0000 111px 114px,#800000 114px 117px,#00008f 117px 121px,#00009f 121px 124px,#0000af 124px 128px,#0000bf 128px 131px,#0000cf 131px 135px,#0000df 135px 138px,#0000ef 138px 142px,#0000ff 142px 146px,#0010ff 146px 150px,#0020ff 150px 153px,#0030ff 153px 157px,#0040ff 157px 161px,#0050ff 161px 165px,#0060ff 165px 169px,#0070ff 169px 173px,#0080ff 173px 177px,#008fff 177px 181px,#009fff 181px 185px,#00afff 185px 189px,#00bfff 189px 192px,#00cfff 192px 196px,#00dfff 196px 200px,#00efff 200px 204px,#00ffff 204px 208px,#10ffef 208px 211px,#20ffdf 211px 215px,#30ffcf 215px 219px,#40ffbf 219px 222px,#50ffaf 222px 225px,#60ff9f 225px 229px,#70ff8f 229px 233px,#80ff80 233px 235px)"></div>
<div class="a" style="left:100px;top:661px;width:235px;height:16px;background:linear-gradient(90deg,#80ff80 0 1px,#8fff70 1px 2px,#9fff60 2px 4px,#afff50 4px 5px,#bfff40 5px 7px,#cfff30 7px 8px,#dfff20 8px 10px,#efff10 10px 11px,#ffff00 11px 13px,#ffef00 13px 14px,#ffdf00 14px 15px,#ffcf00 15px 17px,#ffbf00 17px 18px,#ffaf00 18px 20px,#ff9f00 20px 21px,#ff8f00 21px 22px,#ff8000 22px 24px,#ff7000 24px 25px,#ff6000 25px 26px,#ff5000 26px 28px,#ff4000 28px 29px,#ff3000 29px 30px,#ff2000 30px 32px,#ff1000 32px 33px,#ff0000 33px 34px,#ef0000 34px 35px,#df0000 35px 37px,#cf0000 37px 38px,#bf0000 38px 39px,#af0000 39px 40px,#9f0000 40px 41px,#8f0000 41px 42px,#800000 42px 43px,#00008f 43px 44px,#00009f 44px 46px,#0000bf 46px 47px,#0000cf 47px 49px,#0000ef 49px 50px,#0000ff 50px 51px,#0010ff 51px 52px,#0020ff 52px 53px,#0030ff 53px 54px,#0040ff 54px 55px,#0050ff 55px 56px,#0060ff 56px 57px,#0070ff 57px 58px,#008fff 58px 59px,#009fff 59px 60px,#00afff 60px 61px,#00bfff 61px 62px,#00cfff 62px 63px,#00dfff 63px 64px,#00efff 64px 65px,#00ffff 65px 66px,#10ffef 66px 67px,#20ffdf 67px 68px,#30ffcf 68px 69px,#40ffbf 69px 70px,#50ffaf 70px 71px,#60ff9f 71px 72px,#70ff8f 72px 73px,#80ff80 73px 74px,#8fff70 74px 75px,#9fff60 75px 76px,#afff50 76px 77px,#bfff40 77px 78px,#cfff30 78px 79px,#dfff20 79px 81px,#efff10 81px 82px,#ffff00 82px 83px,#ffef00 83px 84px,#ffdf00 84px 85px,#ffcf00 85px 87px,#ffbf00 87px 88px,#ffaf00 88px 89px,#ff9f00 89px 91px,#ff8f00 91px 92px,#ff8000 92px 93px,#ff7000 93px 95px,#ff6000 95px 96px,#ff5000 96px 97px,#ff4000 97px 99px,#ff3000 99px 100px,#ff2000 100px 102px,#ff1000 102px 103px,#ff0000 103px 105px,#ef0000 105px 106px,#df0000 106px 107px,#cf0000 107px 109px,#bf0000 109px 110px,#af0000 110px 112px,#9f0000 112px 113px,#8f0000 113px 115px,#800000 115px 116px,#00008f 116px 118px,#00009f 118px 119px,#0000af 119px 121px,#0000bf 121px 122px,#0000cf 122px 124px,#0000df 124px 125px,#0000ef 125px 127px,#0000ff 127px 128px,#0010ff 128px 130px,#0020ff 130px 131px,#0030ff 131px 133px,#0040ff 133px 134px,#0050ff 134px 136px,#0060ff 136px 137px,#0070ff 137px 139px,#0080ff 139px 140px,#008fff 140px 141px,#009fff 141px 143px,#00afff 143px 144px,#00bfff 144px 146px,#00cfff 146px 147px,#00dfff 147px 149px,#00efff 149px 150px,#00ffff 150px 151px,#10ffef 151px 153px,#20ffdf 153px 154px,#30ffcf 154px 155px,#40ffbf 155px 156px,#50ffaf 156px 158px,#60ff9f 158px 159px,#70ff8f 159px 160px,#80ff80 160px 161px,#8fff70 161px 162px,#9fff60 162px 163px,#afff50 163px 164px,#bfff40 164px 165px,#cfff30 165px 166px,#dfff20 166px 167px,#efff10 167px 168px,#ffff00 168px 169px,#ffef00 169px 170px,#ffdf00 170px 171px,#ffcf00 171px 172px,#ffbf00 172px 173px,#ffaf00 173px 174px,#ff9f00 174px 175px,#ff8f00 175px 176px,#ff8000 176px 177px,#ff6000 177px 178px,#ff5000 178px 179px,#ff4000 179px 180px,#ff3000 180px 181px,#ff2000 181px 182px,#ff1000 182px 183px,#ff0000 183px 184px,#ef0000 184px 185px,#df0000 185px 186px,#cf0000 186px 187px,#bf0000 187px 188px,#af0000 188px 189px,#9f0000 189px 190px,#8f0000 190px 191px,#800000 191px 192px,#00008f 192px 193px,#00009f 193px 195px,#0000af 195px 196px,#0000bf 196px 197px,#0000cf 197px 198px,#0000df 198px 199px,#0000ef 199px 201px,#0000ff 201px 202px,#0010ff 202px 203px,#0020ff 203px 205px,#0030ff 205px 206px,#0040ff 206px 207px,#0050ff 207px 209px,#0060ff 209px 210px,#0070ff 210px 212px,#0080ff 212px 213px,#008fff 213px 215px,#009fff 215px 216px,#00afff 216px 218px,#00bfff 218px 219px,#00cfff 219px 221px,#00dfff 221px 222px,#00efff 222px 224px,#00ffff 224px 225px,#10ffef 225px 227px,#20ffdf 227px 228px,#30ffcf 228px 230px,#40ffbf 230px 231px,#50ffaf 231px 233px,#60ff9f 233px 234px,#70ff8f 234px 235px)"></div>
<div class="a" style="left:100px;top:677px;width:235px;height:12px;background:linear-gradient(90deg,#10ffef 0 1px,#20ffdf 1px 2px,#30ffcf 2px 3px,#40ffbf 3px 4px,#50ffaf 4px 5px,#60ff9f 5px 6px,#70ff8f 6px 7px,#80ff80 7px 9px,#8fff70 9px 10px,#9fff60 10px 11px,#afff50 11px 12px,#bfff40 12px 13px,#cfff30 13px 14px,#dfff20 14px 15px,#efff10 15px 16px,#ffff00 16px 17px,#ffef00 17px 19px,#ffcf00 19px 21px,#ffbf00 21px 22px,#ffaf00 22px 23px,#ff9f00 23px 24px,#ff8f00 24px 25px,#ff8000 25px 26px,#ff7000 26px 27px,#ff6000 27px 28px,#ff5000 28px 29px,#ff4000 29px 30px,#ff3000 30px 31px,#ff2000 31px 32px,#ff1000 32px 33px,#ff0000 33px 34px,#ef0000 34px 35px,#df0000 35px 36px,#cf0000 36px 37px,#bf0000 37px 38px,#af0000 38px 39px,#9f0000 39px 40px,#8f0000 40px 41px,#800000 41px 43px,#00009f 43px 44px,#0000af 44px 46px,#0000cf 46px 48px,#0000df 48px 49px,#0000ff 49px 51px,#0010ff 51px 52px,#0030ff 52px 54px,#0040ff 54px 55px,#0060ff 55px 57px,#0070ff 57px 58px,#008fff 58px 60px,#009fff 60px 61px,#00bfff 61px 63px,#00cfff 63px 64px,#00efff 64px 66px,#00ffff 66px 67px,#20ffdf 67px 69px,#30ffcf 69px 70px,#50ffaf 70px 72px,#60ff9f 72px 73px,#70ff8f 73px 74px,#80ff80 74px 75px,#8fff70 75px 76px,#9fff60 76px 77px,#afff50 77px 78px,#bfff40 78px 79px,#cfff30 79px 80px,#dfff20 80px 81px,#efff10 81px 82px,#ffff00 82px 83px,#ffef00 83px 84px,#ffdf00 84px 85px,#ffcf00 85px 86px,#ffbf00 86px 87px,#ffaf00 87px 88px,#ff9f00 88px 89px,#ff8f00 89px 90px,#ff8000 90px 91px,#ff7000 91px 92px,#ff6000 92px 93px,#ff5000 93px 94px,#ff4000 94px 95px,#ff3000 95px 97px,#ff1000 97px 99px,#ff0000 99px 100px,#ef0000 100px 101px,#df0000 101px 102px,#cf0000 102px 103px,#bf0000 103px 104px,#af0000 104px 105px,#9f0000 105px 106px,#8f0000 106px 107px,#800000 107px 109px,#00009f 109px 111px,#0000af 111px 112px,#0000bf 112px 113px,#0000cf 113px 114px,#0000df 114px 115px,#0000ef 115px 116px,#0000ff 116px 117px,#0010ff 117px 118px,#0020ff 118px 120px,#0030ff 120px 121px,#0040ff 121px 122px,#0050ff 122px 123px,#0060ff 123px 124px,#0070ff 124px 125px,#0080ff 125px 126px,#008fff 126px 128px,#009fff 128px 129px,#00afff 129px 130px,#00bfff 130px 131px,#00cfff 131px 132px,#00dfff 132px 133px,#00efff 133px 135px,#00ffff 135px 136px,#10ffef 136px 137px,#20ffdf 137px 138px,#30ffcf 138px 139px,#40ffbf 139px 141px,#50ffaf 141px 142px,#60ff9f 142px 143px,#70ff8f 143px 144px,#80ff80 144px 145px,#8fff70 145px 147px,#9fff60 147px 148px,#afff50 148px 149px,#bfff40 149px 150px,#cfff30 150px 152px,#dfff20 152px 153px,#efff10 153px 154px,#ffff00 154px 156px,#ffef00 156px 157px,#ffdf00 157px 158px,#ffcf00 158px 160px,#ffbf00 160px 161px,#ffaf00 161px 163px,#ff9f00 163px 165px,#ff8f00 165px 167px,#ff8000 167px 170px,#ff7000 170px 176px,#ff8000 176px 184px,#ff7000 184px 187px,#ff6000 187px 189px,#ff5000 189px 191px,#ff4000 191px 192px,#ff3000 192px 194px,#ff2000 194px 195px,#ff1000 195px 196px,#ff0000 196px 198px,#ef0000 198px 199px,#df0000 199px 201px,#cf0000 201px 202px,#bf0000 202px 203px,#af0000 203px 204px,#9f0000 204px 205px,#8f0000 205px 207px,#800000 207px 208px,#00008f 208px 209px,#00009f 209px 210px,#0000af 210px 212px,#0000bf 212px 213px,#0000cf 213px 214px,#0000df 214px 215px,#0000ef 215px 216px,#0000ff 216px 217px,#0010ff 217px 219px,#0020ff 219px 220px,#0030ff 220px 221px,#0040ff 221px 222px,#0050ff 222px 223px,#0060ff 223px 225px,#0070ff 225px 226px,#0080ff 226px 227px,#008fff 227px 228px,#009fff 228px 229px,#00afff 229px 230px,#00bfff 230px 231px,#00cfff 231px 233px,#00dfff 233px 234px,#00efff 234px 235px)"></div>
<div class="a" style="left:100px;top:689px;width:235px;height:9px;background:linear-gradient(90deg,#0070ff 0 1px,#0080ff 1px 2px,#009fff 2px 3px,#00afff 3px 4px,#00bfff 4px 5px,#00cfff 5px 6px,#00dfff 6px 7px,#00ffff 7px 8px,#10ffef 8px 9px,#20ffdf 9px 10px,#30ffcf 10px 11px,#40ffbf 11px 12px,#50ffaf 12px 13px,#70ff8f 13px 14px,#80ff80 14px 15px,#8fff70 15px 16px,#9fff60 16px 17px,#afff50 17px 18px,#bfff40 18px 19px,#cfff30 19px 20px,#dfff20 20px 21px,#efff10 21px 22px,#ffef00 22px 23px,#ffdf00 23px 24px,#ffcf00 24px 25px,#ffbf00 25px 26px,#ffaf00 26px 27px,#ff9f00 27px 28px,#ff8000 28px 29px,#ff7000 29px 30px,#ff6000 30px 31px,#ff5000 31px 32px,#ff4000 32px 33px,#ff3000 33px 34px,#ff2000 34px 35px,#ff1000 35px 36px,#ff0000 36px 37px,#df0000 37px 38px,#cf0000 38px 39px,#bf0000 39px 40px,#af0000 40px 41px,#9f0000 41px 42px,#8f0000 42px 43px,#800000 43px 44px,#00008f 44px 45px,#00009f 45px 46px,#0000af 46px 47px,#0000bf 47px 48px,#0000cf 48px 49px,#0000ef 49px 50px,#0000ff 50px 51px,#0010ff 51px 52px,#0020ff 52px 53px,#0030ff 53px 54px,#0040ff 54px 55px,#0050ff 55px 56px,#0060ff 56px 57px,#0070ff 57px 58px,#008fff 58px 59px,#009fff 59px 60px,#00afff 60px 61px,#00bfff 61px 62px,#00cfff 62px 63px,#00dfff 63px 64px,#00efff 64px 65px,#00ffff 65px 66px,#10ffef 66px 67px,#20ffdf 67px 68px,#30ffcf 68px 69px,#40ffbf 69px 70px,#60ff9f 70px 71px,#70ff8f 71px 72px,#80ff80 72px 73px,#8fff70 73px 74px,#9fff60 74px 75px,#afff50 75px 76px,#bfff40 76px 77px,#cfff30 77px 78px,#dfff20 78px 79px,#ffff00 79px 80px,#ffef00 80px 81px,#ffdf00 81px 82px,#ffcf00 82px 83px,#ffbf00 83px 84px,#ffaf00 84px 85px,#ff9f00 85px 86px,#ff8f00 86px 87px,#ff8000 87px 88px,#ff6000 88px 89px,#ff5000 89px 90px,#ff4000 90px 91px,#ff3000 91px 92px,#ff2000 92px 93px,#ff1000 93px 94px,#ff0000 94px 95px,#ef0000 95px 96px,#df0000 96px 97px,#bf0000 97px 98px,#af0000 98px 99px,#9f0000 99px 100px,#8f0000 100px 101px,#800000 101px 102px,#00008f 102px 103px,#0000af 103px 104px,#0000bf 104px 105px,#0000cf 105px 106px,#0000df 106px 107px,#0000ef 107px 108px,#0000ff 108px 109px,#0020ff 109px 110px,#0030ff 110px 111px,#0040ff 111px 112px,#0050ff 112px 113px,#0060ff 113px 114px,#0070ff 114px 115px,#008fff 115px 116px,#009fff 116px 117px,#00afff 117px 118px,#00bfff 118px 119px,#00cfff 119px 120px,#00efff 120px 121px,#00ffff 121px 122px,#10ffef 122px 123px,#20ffdf 123px 124px,#40ffbf 124px 125px,#50ffaf 125px 126px,#60ff9f 126px 127px,#70ff8f 127px 128px,#80ff80 128px 129px,#9fff60 129px 130px,#afff50 130px 131px,#bfff40 131px 132px,#cfff30 132px 133px,#efff10 133px 134px,#ffff00 134px 135px,#ffef00 135px 136px,#ffdf00 136px 137px,#ffcf00 137px 138px,#ffaf00 138px 139px,#ff9f00 139px 140px,#ff8f00 140px 141px,#ff8000 141px 142px,#ff7000 142px 143px,#ff5000 143px 144px,#ff4000 144px 145px,#ff3000 145px 146px,#ff2000 146px 147px,#ff1000 147px 148px,#ff0000 148px 149px,#ef0000 149px 150px,#df0000 150px 151px,#cf0000 151px 153px,#bf0000 153px 156px,#af0000 156px 161px,#9f0000 161px 162px,#8f0000 162px 164px,#800000 164px 165px,#00008f 165px 166px,#00009f 166px 167px,#0000af 167px 168px,#0000cf 168px 169px,#0000df 169px 170px,#0000ef 170px 171px,#0010ff 171px 172px,#0020ff 172px 173px,#0040ff 173px 174px,#0050ff 174px 175px,#0070ff 175px 176px,#0080ff 176px 177px,#009fff 177px 178px,#00afff 178px 179px,#00cfff 179px 180px,#00efff 180px 181px,#00ffff 181px 182px,#10ffef 182px 183px,#30ffcf 183px 184px,#40ffbf 184px 185px,#50ffaf 185px 186px,#70ff8f 186px 187px,#80ff80 187px 188px,#8fff70 188px 190px,#9fff60 190px 191px,#afff50 191px 195px,#bfff40 195px 199px,#cfff30 199px 201px,#dfff20 201px 202px,#efff10 202px 203px,#ffff00 203px 204px,#ffef00 204px 205px,#ffdf00 205px 206px,#ffcf00 206px 207px,#ffbf00 207px 208px,#ffaf00 208px 209px,#ff9f00 209px 210px,#ff8f00 210px 211px,#ff8000 211px 212px,#ff6000 212px 213px,#ff5000 213px 214px,#ff4000 214px 215px,#ff3000 215px 216px,#ff1000 216px 217px,#ff0000 217px 218px,#ef0000 218px 219px,#df0000 219px 220px,#cf0000 220px 221px,#af0000 221px 222px,#9f0000 222px 223px,#8f0000 223px 224px,#800000 224px 225px,#00009f 225px 226px,#0000af 226px 227px,#0000bf 227px 228px,#0000cf 228px 229px,#0000df 229px 230px,#0000ff 230px 231px,#0010ff 231px 232px,#0020ff 232px 233px,#0030ff 233px 234px,#0050ff 234px 235px)"></div>
<div class="a" style="left:100px;top:698px;width:235px;height:5px;background:linear-gradient(90deg,#0030ff 0 1px,#0050ff 1px 2px,#0060ff 2px 3px,#0080ff 3px 4px,#008fff 4px 5px,#00afff 5px 6px,#00bfff 6px 7px,#00dfff 7px 8px,#00efff 8px 9px,#00ffff 9px 10px,#20ffdf 10px 11px,#30ffcf 11px 12px,#40ffbf 12px 13px,#60ff9f 13px 14px,#70ff8f 14px 15px,#80ff80 15px 16px,#9fff60 16px 17px,#afff50 17px 18px,#bfff40 18px 19px,#cfff30 19px 20px,#efff10 20px 21px,#ffff00 21px 22px,#ffef00 22px 23px,#ffdf00 23px 24px,#ffcf00 24px 25px,#ffbf00 25px 26px,#ff9f00 26px 27px,#ff8f00 27px 28px,#ff8000 28px 29px,#ff7000 29px 30px,#ff6000 30px 31px,#ff5000 31px 32px,#ff4000 32px 33px,#ff3000 33px 34px,#ff1000 34px 35px,#ff0000 35px 36px,#ef0000 36px 37px,#df0000 37px 38px,#cf0000 38px 39px,#bf0000 39px 40px,#af0000 40px 41px,#9f0000 41px 42px,#8f0000 42px 43px,#800000 43px 44px,#00008f 44px 45px,#00009f 45px 46px,#0000bf 46px 47px,#0000cf 47px 48px,#0000df 48px 49px,#0000ef 49px 50px,#0000ff 50px 51px,#0010ff 51px 52px,#0020ff 52px 53px,#0030ff 53px 54px,#0040ff 54px 55px,#0050ff 55px 56px,#0060ff 56px 57px,#0070ff 57px 58px,#008fff 58px 59px,#009fff 59px 60px,#00afff 60px 61px,#00bfff 61px 62px,#00cfff 62px 63px,#00dfff 63px 64px,#00efff 64px 65px,#00ffff 65px 66px,#10ffef 66px 67px,#20ffdf 67px 68px,#30ffcf 68px 69px,#40ffbf 69px 70px,#60ff9f 70px 71px,#70ff8f 71px 72px,#80ff80 72px 73px,#8fff70 73px 74px,#9fff60 74px 75px,#afff50 75px 76px,#bfff40 76px 77px,#cfff30 77px 78px,#dfff20 78px 79px,#efff10 79px 80px,#ffff00 80px 81px,#ffef00 81px 82px,#ffcf00 82px 83px,#ffbf00 83px 84px,#ffaf00 84px 85px,#ff9f00 85px 86px,#ff8f00 86px 87px,#ff8000 87px 88px,#ff7000 88px 89px,#ff6000 89px 90px,#ff5000 90px 91px,#ff3000 91px 92px,#ff2000 92px 93px,#ff1000 93px 94px,#ff0000 94px 95px,#ef0000 95px 96px,#df0000 96px 97px,#bf0000 97px 98px,#af0000 98px 99px,#9f0000 99px 100px,#800000 100px 101px,#00008f 101px 102px,#00009f 102px 103px,#0000af 103px 104px,#0000cf 104px 105px,#0000df 105px 106px,#0000ef 106px 107px,#0010ff 107px 108px,#0020ff 108px 109px,#0040ff 109px 110px,#0050ff 110px 111px,#0060ff 111px 112px,#0080ff 112px 113px,#008fff 113px 114px,#00afff 114px 115px,#00cfff 115px 116px,#00dfff 116px 117px,#00ffff 117px 118px,#10ffef 118px 119px,#30ffcf 119px 120px,#50ffaf 120px 121px,#60ff9f 121px 122px,#80ff80 122px 123px,#9fff60 123px 124px,#afff50 124px 125px,#cfff30 125px 126px,#efff10 126px 127px,#ffef00 127px 128px,#ffdf00 128px 129px,#ffaf00 129px 130px,#ff9f00 130px 131px,#ff8000 131px 132px,#ff6000 132px 133px,#ff4000 133px 134px,#ff2000 134px 135px,#ff0000 135px 136px,#df0000 136px 137px,#bf0000 137px 138px,#9f0000 138px 139px,#800000 139px 140px,#00009f 140px 141px,#0000cf 141px 142px,#0000ef 142px 143px,#0010ff 143px 144px,#0030ff 144px 145px,#0050ff 145px 146px,#0070ff 146px 147px,#009fff 147px 148px,#00bfff 148px 149px,#00dfff 149px 150px,#00ffff 150px 151px,#20ffdf 151px 152px,#40ffbf 152px 153px,#70ff8f 153px 154px,#8fff70 154px 155px,#afff50 155px 156px,#cfff30 156px 157px,#efff10 157px 158px,#ffef00 158px 159px,#ffbf00 159px 160px,#ff9f00 160px 161px,#ff8000 161px 162px,#ff6000 162px 163px,#ff4000 163px 164px,#ff2000 164px 165px,#ef0000 165px 166px,#cf0000 166px 167px,#af0000 167px 168px,#8f0000 168px 169px,#00008f 169px 170px,#0000af 170px 171px,#0000df 171px 172px,#0000ff 172px 173px,#0020ff 173px 174px,#0040ff 174px 175px,#0060ff 175px 176px,#0080ff 176px 177px,#00afff 177px 178px,#00cfff 178px 179px,#00efff 179px 180px,#10ffef 180px 181px,#30ffcf 181px 182px,#50ffaf 182px 183px,#80ff80 183px 184px,#9fff60 184px 185px,#bfff40 185px 186px,#dfff20 186px 187px,#ffff00 187px 188px,#ffdf00 188px 189px,#ffaf00 189px 190px,#ff8f00 190px 191px,#ff7000 191px 192px,#ff4000 192px 193px,#ff2000 193px 194px,#ff0000 194px 195px,#df0000 195px 196px,#bf0000 196px 197px,#9f0000 197px 198px,#00008f 198px 199px,#0000af 199px 200px,#0000cf 200px 201px,#0000ef 201px 202px,#0010ff 202px 203px,#0030ff 203px 204px,#0060ff 204px 205px,#0080ff 205px 206px,#009fff 206px 207px,#00bfff 207px 208px,#00dfff 208px 209px,#00ffff 209px 210px,#30ffcf 210px 211px,#40ffbf 211px 212px,#60ff9f 212px 213px,#8fff70 213px 214px,#afff50 214px 215px,#cfff30 215px 216px,#efff10 216px 217px,#ffef00 217px 218px,#ffcf00 218px 219px,#ffaf00 219px 220px,#ff8f00 220px 221px,#ff7000 221px 222px,#ff5000 222px 223px,#ff3000 223px 224px,#ff2000 224px 225px,#ff0000 225px 226px,#df0000 226px 227px,#bf0000 227px 228px,#9f0000 228px 229px,#8f0000 229px 230px,#00008f 230px 231px,#0000af 231px 232px,#0000bf 232px 233px,#0000df 233px 234px,#0000ff 234px 235px)"></div>
<div class="a" style="left:100px;top:703px;width:235px;height:4px;background:linear-gradient(90deg,#0060ff 0 1px,#0080ff 1px 2px,#009fff 2px 3px,#00afff 3px 4px,#00cfff 4px 5px,#00dfff 5px 6px,#00ffff 6px 7px,#10ffef 7px 8px,#30ffcf 8px 9px,#40ffbf 9px 10px,#50ffaf 10px 11px,#60ff9f 11px 12px,#70ff8f 12px 13px,#8fff70 13px 14px,#9fff60 14px 15px,#afff50 15px 16px,#bfff40 16px 17px,#cfff30 17px 18px,#dfff20 18px 19px,#efff10 19px 20px,#ffff00 20px 21px,#ffef00 21px 22px,#ffdf00 22px 23px,#ffcf00 23px 24px,#ffbf00 24px 25px,#ffaf00 25px 26px,#ff9f00 26px 27px,#ff8f00 27px 28px,#ff8000 28px 29px,#ff7000 29px 30px,#ff6000 30px 31px,#ff5000 31px 32px,#ff4000 32px 33px,#ff3000 33px 34px,#ff1000 34px 35px,#ff0000 35px 36px,#ef0000 36px 37px,#df0000 37px 38px,#cf0000 38px 39px,#bf0000 39px 40px,#af0000 40px 41px,#9f0000 41px 42px,#8f0000 42px 43px,#800000 43px 44px,#00008f 44px 45px,#00009f 45px 46px,#0000bf 46px 47px,#0000cf 47px 48px,#0000df 48px 49px,#0000ef 49px 50px,#0000ff 50px 51px,#0010ff 51px 52px,#0020ff 52px 53px,#0030ff 53px 54px,#0040ff 54px 55px,#0050ff 55px 56px,#0060ff 56px 57px,#0070ff 57px 58px,#008fff 58px 59px,#009fff 59px 60px,#00afff 60px 61px,#00bfff 61px 62px,#00cfff 62px 63px,#00dfff 63px 64px,#00efff 64px 65px,#00ffff 65px 66px,#10ffef 66px 67px,#20ffdf 67px 68px,#30ffcf 68px 69px,#40ffbf 69px 70px,#60ff9f 70px 71px,#70ff8f 71px 72px,#80ff80 72px 73px,#8fff70 73px 74px,#9fff60 74px 75px,#afff50 75px 76px,#bfff40 76px 77px,#cfff30 77px 78px,#dfff20 78px 79px,#efff10 79px 80px,#ffff00 80px 81px,#ffef00 81px 82px,#ffcf00 82px 83px,#ffbf00 83px 84px,#ffaf00 84px 85px,#ff9f00 85px 86px,#ff8f00 86px 87px,#ff8000 87px 88px,#ff7000 88px 89px,#ff6000 89px 90px,#ff5000 90px 91px,#ff4000 91px 92px,#ff3000 92px 93px,#ff2000 93px 94px,#ff1000 94px 95px,#ff0000 95px 96px,#ef0000 96px 97px,#df0000 97px 98px,#cf0000 98px 99px,#bf0000 99px 100px,#af0000 100px 101px,#9f0000 101px 102px,#8f0000 102px 103px,#800000 103px 104px,#00009f 104px 105px,#0000af 105px 106px,#0000bf 106px 107px,#0000cf 107px 108px,#0000df 108px 109px,#0000ff 109px 110px,#0010ff 110px 111px,#0030ff 111px 112px,#0040ff 112px 113px,#0060ff 113px 114px,#0070ff 114px 115px,#008fff 115px 116px,#00afff 116px 117px,#00cfff 117px 118px,#00dfff 118px 119px,#00ffff 119px 120px,#20ffdf 120px 121px,#40ffbf 121px 122px,#60ff9f 122px 123px,#80ff80 123px 124px,#9fff60 124px 125px,#afff50 125px 126px,#dfff20 126px 127px,#efff10 127px 128px,#ffef00 128px 129px,#ffbf00 129px 130px,#ff9f00 130px 131px,#ff8f00 131px 132px,#ff6000 132px 133px,#ff4000 133px 134px,#ff2000 134px 135px,#ff0000 135px 136px,#df0000 136px 137px,#bf0000 137px 138px,#8f0000 138px 139px,#800000 139px 140px,#00009f 140px 141px,#0000cf 141px 142px,#0000ef 142px 143px,#0010ff 143px 144px,#0030ff 144px 145px,#0050ff 145px 146px,#0070ff 146px 147px,#009fff 147px 148px,#00bfff 148px 149px,#00dfff 149px 150px,#00ffff 150px 151px,#20ffdf 151px 152px,#40ffbf 152px 153px,#70ff8f 153px 154px,#8fff70 154px 155px,#afff50 155px 156px,#cfff30 156px 157px,#efff10 157px 158px,#ffef00 158px 159px,#ffbf00 159px 160px,#ff9f00 160px 161px,#ff8000 161px 162px,#ff6000 162px 163px,#ff4000 163px 164px,#ff2000 164px 165px,#ef0000 165px 166px,#cf0000 166px 167px,#af0000 167px 168px,#8f0000 168px 169px,#00008f 169px 170px,#0000af 170px 171px,#0000df 171px 172px,#0000ff 172px 173px,#0020ff 173px 174px,#0040ff 174px 175px,#0060ff 175px 176px,#0080ff 176px 177px,#00afff 177px 178px,#00cfff 178px 179px,#00efff 179px 180px,#10ffef 180px 181px,#30ffcf 181px 182px,#50ffaf 182px 183px,#80ff80 183px 184px,#9fff60 184px 185px,#bfff40 185px 186px,#dfff20 186px 187px,#ffff00 187px 188px,#ffdf00 188px 189px,#ffaf00 189px 190px,#ff8f00 190px 191px,#ff7000 191px 192px,#ff5000 192px 193px,#ff3000 193px 194px,#ff1000 194px 195px,#df0000 195px 196px,#bf0000 196px 197px,#9f0000 197px 198px,#800000 198px 199px,#00009f 199px 200px,#0000bf 200px 201px,#0000ef 201px 202px,#0010ff 202px 203px,#0030ff 203px 204px,#0050ff 204px 205px,#0070ff 205px 206px,#008fff 206px 207px,#00bfff 207px 208px,#00dfff 208px 209px,#00ffff 209px 210px,#20ffdf 210px 211px,#40ffbf 211px 212px,#60ff9f 212px 213px,#8fff70 213px 214px,#afff50 214px 215px,#cfff30 215px 216px,#efff10 216px 217px,#ffef00 217px 218px,#ffcf00 218px 219px,#ffaf00 219px 220px,#ff8f00 220px 221px,#ff7000 221px 222px,#ff4000 222px 223px,#ff2000 223px 224px,#ff1000 224px 225px,#df0000 225px 226px,#bf0000 226px 227px,#af0000 227px 228px,#800000 228px 229px,#00008f 229px 230px,#0000af 230px 231px,#0000cf 231px 232px,#0000ef 232px 233px,#0010ff 233px 234px,#0030ff 234px 235px)"></div>
<div class="a" style="left:100px;top:707px;width:235px;height:3px;background:linear-gradient(90deg,#009fff 0 1px,#00bfff 1px 2px,#00dfff 2px 3px,#00efff 3px 4px,#10ffef 4px 5px,#20ffdf 5px 6px,#30ffcf 6px 7px,#40ffbf 7px 8px,#50ffaf 8px 9px,#60ff9f 9px 11px,#70ff8f 11px 12px,#80ff80 12px 14px,#8fff70 14px 15px,#9fff60 15px 16px,#afff50 16px 17px,#bfff40 17px 18px,#cfff30 18px 19px,#dfff20 19px 20px,#efff10 20px 21px,#ffff00 21px 22px,#ffdf00 22px 23px,#ffcf00 23px 24px,#ffbf00 24px 25px,#ffaf00 25px 26px,#ff9f00 26px 27px,#ff8f00 27px 28px,#ff8000 28px 29px,#ff7000 29px 30px,#ff6000 30px 31px,#ff5000 31px 32px,#ff4000 32px 33px,#ff3000 33px 34px,#ff1000 34px 35px,#ff0000 35px 36px,#ef0000 36px 37px,#df0000 37px 38px,#cf0000 38px 39px,#bf0000 39px 40px,#af0000 40px 41px,#9f0000 41px 42px,#8f0000 42px 43px,#800000 43px 44px,#00008f 44px 45px,#00009f 45px 46px,#0000bf 46px 47px,#0000cf 47px 48px,#0000df 48px 49px,#0000ef 49px 50px,#0000ff 50px 51px,#0010ff 51px 52px,#0020ff 52px 53px,#0030ff 53px 54px,#0040ff 54px 55px,#0050ff 55px 56px,#0060ff 56px 57px,#0070ff 57px 58px,#008fff 58px 59px,#009fff 59px 60px,#00afff 60px 61px,#00bfff 61px 62px,#00cfff 62px 63px,#00dfff 63px 64px,#00efff 64px 65px,#00ffff 65px 66px,#10ffef 66px 67px,#20ffdf 67px 68px,#30ffcf 68px 69px,#40ffbf 69px 70px,#60ff9f 70px 71px,#70ff8f 71px 72px,#80ff80 72px 73px,#8fff70 73px 74px,#9fff60 74px 75px,#afff50 75px 76px,#bfff40 76px 77px,#cfff30 77px 78px,#dfff20 78px 79px,#efff10 79px 80px,#ffff00 80px 81px,#ffef00 81px 82px,#ffcf00 82px 83px,#ffbf00 83px 84px,#ffaf00 84px 85px,#ff9f00 85px 86px,#ff8f00 86px 87px,#ff8000 87px 88px,#ff7000 88px 89px,#ff6000 89px 90px,#ff5000 90px 91px,#ff4000 91px 92px,#ff3000 92px 93px,#ff2000 93px 94px,#ff0000 94px 95px,#ef0000 95px 96px,#df0000 96px 97px,#cf0000 97px 98px,#bf0000 98px 99px,#af0000 99px 100px,#9f0000 100px 101px,#8f0000 101px 102px,#800000 102px 104px,#00008f 104px 105px,#00009f 105px 107px,#0000af 107px 108px,#0000bf 108px 109px,#0000cf 109px 110px,#0000df 110px 111px,#0000ef 111px 112px,#0000ff 112px 113px,#0020ff 113px 114px,#0030ff 114px 115px,#0050ff 115px 116px,#0070ff 116px 117px,#008fff 117px 118px,#00afff 118px 119px,#00bfff 119px 120px,#00efff 120px 121px,#10ffef 121px 122px,#30ffcf 122px 123px,#50ffaf 123px 124px,#70ff8f 124px 125px,#8fff70 125px 126px,#bfff40 126px 127px,#dfff20 127px 128px,#ffff00 128px 129px,#ffdf00 129px 130px,#ffbf00 130px 131px,#ff8f00 131px 132px,#ff7000 132px 133px,#ff5000 133px 134px,#ff3000 134px 135px,#ff0000 135px 136px,#df0000 136px 137px,#bf0000 137px 138px,#9f0000 138px 139px,#800000 139px 140px,#00009f 140px 141px,#0000cf 141px 142px,#0000ef 142px 143px,#0010ff 143px 144px,#0030ff 144px 145px,#0050ff 145px 146px,#0070ff 146px 147px,#009fff 147px 148px,#00bfff 148px 149px,#00dfff 149px 150px,#00ffff 150px 151px,#20ffdf 151px 152px,#40ffbf 152px 153px,#70ff8f 153px 154px,#8fff70 154px 155px,#afff50 155px 156px,#cfff30 156px 157px,#efff10 157px 158px,#ffef00 158px 159px,#ffbf00 159px 160px,#ff9f00 160px 161px,#ff8000 161px 162px,#ff6000 162px 163px,#ff4000 163px 164px,#ff2000 164px 165px,#ef0000 165px 166px,#cf0000 166px 167px,#af0000 167px 168px,#8f0000 168px 169px,#00008f 169px 170px,#0000af 170px 171px,#0000df 171px 172px,#0000ff 172px 173px,#0020ff 173px 174px,#0040ff 174px 175px,#0060ff 175px 176px,#0080ff 176px 177px,#00afff 177px 178px,#00cfff 178px 179px,#00efff 179px 180px,#10ffef 180px 181px,#30ffcf 181px 182px,#50ffaf 182px 183px,#80ff80 183px 184px,#9fff60 184px 185px,#bfff40 185px 186px,#dfff20 186px 187px,#ffff00 187px 188px,#ffdf00 188px 189px,#ffaf00 189px 190px,#ff8f00 190px 191px,#ff7000 191px 192px,#ff5000 192px 193px,#ff3000 193px 194px,#ff1000 194px 195px,#df0000 195px 196px,#bf0000 196px 197px,#9f0000 197px 198px,#800000 198px 199px,#00009f 199px 200px,#0000bf 200px 201px,#0000ef 201px 202px,#0010ff 202px 203px,#0030ff 203px 204px,#0050ff 204px 205px,#0070ff 205px 206px,#008fff 206px 207px,#00bfff 207px 208px,#00dfff 208px 209px,#00ffff 209px 210px,#20ffdf 210px 211px,#40ffbf 211px 212px,#60ff9f 212px 213px,#8fff70 213px 214px,#afff50 214px 215px,#cfff30 215px 216px,#ffff00 216px 217px,#ffdf00 217px 218px,#ffbf00 218px 219px,#ff9f00 219px 220px,#ff8000 220px 221px,#ff6000 221px 222px,#ff3000 222px 223px,#ff1000 223px 224px,#ef0000 224px 225px,#cf0000 225px 226px,#af0000 226px 227px,#8f0000 227px 228px,#00009f 228px 229px,#0000bf 229px 230px,#0000df 230px 231px,#0000ff 231px 232px,#0020ff 232px 233px,#0040ff 233px 234px,#0070ff 234px 235px)"></div>
<div class="a" style="left:100px;top:710px;width:235px;height:2px;background:linear-gradient(90deg,#00cfff 0 1px,#00afff 1px 2px,#00ffff 2px 3px,#00cfff 3px 4px,#0080ff 4px 5px,#0010ff 5px 6px,#0000cf 6px 7px,#00cfff 7px 8px,#10ffef 8px 9px,#20ffdf 9px 10px,#00afff 10px 11px,#00bfff 11px 12px,#dfff20 12px 13px,#70ff8f 13px 14px,#50ffaf 14px 15px,#40ffbf 15px 16px,#8fff70 16px 17px,#bfff40 17px 18px,#dfff20 18px 19px,#ffef00 19px 22px,#ffdf00 22px 23px,#ffcf00 23px 24px,#ffaf00 24px 26px,#ff9f00 26px 27px,#ff8f00 27px 28px,#ff8000 28px 29px,#ff7000 29px 30px,#ff6000 30px 31px,#ff5000 31px 32px,#ff4000 32px 33px,#ff3000 33px 34px,#ff1000 34px 35px,#ff0000 35px 37px,#df0000 37px 38px,#cf0000 38px 39px,#bf0000 39px 40px,#af0000 40px 41px,#9f0000 41px 42px,#8f0000 42px 43px,#800000 43px 44px,#00008f 44px 45px,#00009f 45px 46px,#0000af 46px 47px,#0000bf 47px 48px,#0000cf 48px 49px,#0000ef 49px 50px,#0000ff 50px 51px,#0010ff 51px 52px,#0020ff 52px 53px,#0030ff 53px 54px,#0040ff 54px 55px,#0050ff 55px 56px,#0060ff 56px 57px,#0070ff 57px 58px,#008fff 58px 59px,#009fff 59px 60px,#00afff 60px 61px,#00bfff 61px 62px,#00cfff 62px 63px,#00dfff 63px 64px,#00efff 64px 65px,#00ffff 65px 66px,#10ffef 66px 67px,#20ffdf 67px 68px,#30ffcf 68px 69px,#40ffbf 69px 70px,#60ff9f 70px 71px,#70ff8f 71px 72px,#80ff80 72px 73px,#8fff70 73px 74px,#9fff60 74px 75px,#afff50 75px 76px,#bfff40 76px 77px,#cfff30 77px 78px,#dfff20 78px 79px,#efff10 79px 80px,#ffff00 80px 81px,#ffef00 81px 82px,#ffcf00 82px 83px,#ffbf00 83px 84px,#ffaf00 84px 85px,#ff9f00 85px 86px,#ff8f00 86px 87px,#ff8000 87px 88px,#ff7000 88px 89px,#ff6000 89px 90px,#ff5000 90px 91px,#ff4000 91px 92px,#ff2000 92px 93px,#ff1000 93px 94px,#ff0000 94px 95px,#ef0000 95px 96px,#cf0000 96px 99px,#bf0000 99px 101px,#00008f 101px 102px,#0000ef 102px 103px,#0020ff 103px 104px,#0050ff 104px 106px,#0000ff 106px 107px,#00009f 107px 109px,#0000af 109px 110px,#00008f 110px 111px,#cf0000 111px 112px,#00009f 112px 113px,#0000ef 113px 115px,#0010ff 115px 116px,#0030ff 116px 117px,#0060ff 117px 118px,#0080ff 118px 119px,#00cfff 119px 120px,#00dfff 120px 121px,#00ffff 121px 122px,#00efff 122px 123px,#40ffbf 123px 124px,#70ff8f 124px 125px,#8fff70 125px 126px,#cfff30 126px 127px,#dfff20 127px 128px,#ffff00 128px 129px,#ffcf00 129px 130px,#ffaf00 130px 131px,#ff8f00 131px 132px,#ff7000 132px 133px,#ff5000 133px 134px,#ff3000 134px 135px,#ff0000 135px 136px,#df0000 136px 137px,#bf0000 137px 138px,#9f0000 138px 139px,#800000 139px 140px,#00009f 140px 141px,#0000cf 141px 142px,#0000ef 142px 143px,#0010ff 143px 144px,#0030ff 144px 145px,#0050ff 145px 146px,#0070ff 146px 147px,#009fff 147px 148px,#00bfff 148px 149px,#00dfff 149px 150px,#00ffff 150px 151px,#20ffdf 151px 152px,#40ffbf 152px 153px,#70ff8f 153px 154px,#8fff70 154px 155px,#afff50 155px 156px,#cfff30 156px 157px,#efff10 157px 158px,#ffef00 158px 159px,#ffbf00 159px 160px,#ff9f00 160px 161px,#ff8000 161px 162px,#ff6000 162px 163px,#ff4000 163px 164px,#ff2000 164px 165px,#ef0000 165px 166px,#cf0000 166px 167px,#af0000 167px 168px,#8f0000 168px 169px,#00008f 169px 170px,#0000af 170px 171px,#0000df 171px 172px,#0000ff 172px 173px,#0020ff 173px 174px,#0040ff 174px 175px,#0060ff 175px 176px,#0080ff 176px 177px,#00afff 177px 178px,#00cfff 178px 179px,#00efff 179px 180px,#10ffef 180px 181px,#30ffcf 181px 182px,#50ffaf 182px 183px,#80ff80 183px 184px,#9fff60 184px 185px,#bfff40 185px 186px,#dfff20 186px 187px,#ffff00 187px 188px,#ffdf00 188px 189px,#ffaf00 189px 190px,#ff8f00 190px 191px,#ff7000 191px 192px,#ff5000 192px 193px,#ff3000 193px 194px,#ff1000 194px 195px,#df0000 195px 196px,#bf0000 196px 197px,#9f0000 197px 198px,#800000 198px 199px,#00009f 199px 200px,#0000bf 200px 201px,#0000ef 201px 202px,#0010ff 202px 203px,#0030ff 203px 204px,#0050ff 204px 205px,#0070ff 205px 206px,#008fff 206px 207px,#00bfff 207px 208px,#00dfff 208px 209px,#00ffff 209px 210px,#20ffdf 210px 211px,#40ffbf 211px 212px,#60ff9f 212px 213px,#8fff70 213px 214px,#afff50 214px 215px,#cfff30 215px 216px,#efff10 216px 217px,#ffef00 217px 218px,#ffcf00 218px 219px,#ff9f00 219px 220px,#ff8000 220px 221px,#ff6000 221px 222px,#ff3000 222px 223px,#ff2000 223px 224px,#ff1000 224px 225px,#ef0000 225px 226px,#bf0000 226px 227px,#00008f 227px 229px,#0010ff 229px 230px,#0080ff 230px 231px,#0000cf 231px 233px,#0000df 233px 234px,#0050ff 234px 235px)"></div>
<div class="a" style="left:100px;top:712px;width:235px;height:1px;background:linear-gradient(90deg,#40ffbf 0 1px,#00cfff 1px 2px,#00afff 2px 3px,#0080ff 3px 4px,#00efff 4px 5px,#40ffbf 5px 6px,#20ffdf 6px 7px,#30ffcf 7px 8px,#bf0000 8px 9px,#00dfff 9px 10px,#00afff 10px 11px,#30ffcf 11px 13px,#bfff40 13px 14px,#00009f 14px 15px,#af0000 15px 16px,#ff8f00 16px 17px,#afff50 17px 18px,#cfff30 18px 19px,#ffef00 19px 20px,#ffdf00 20px 21px,#ffcf00 21px 22px,#ffbf00 22px 25px,#ffaf00 25px 26px,#ff9f00 26px 27px,#ff8f00 27px 28px,#ff8000 28px 29px,#ff7000 29px 30px,#ff6000 30px 31px,#ff5000 31px 32px,#ff4000 32px 33px,#ff3000 33px 34px,#ff2000 34px 35px,#ff1000 35px 36px,#ff0000 36px 37px,#df0000 37px 38px,#cf0000 38px 39px,#bf0000 39px 40px,#af0000 40px 41px,#9f0000 41px 42px,#8f0000 42px 43px,#800000 43px 44px,#00008f 44px 45px,#00009f 45px 46px,#0000af 46px 47px,#0000bf 47px 48px,#0000cf 48px 49px,#0000ef 49px 50px,#0000ff 50px 51px,#0010ff 51px 52px,#0020ff 52px 53px,#0030ff 53px 54px,#0040ff 54px 55px,#0050ff 55px 56px,#0060ff 56px 57px,#0070ff 57px 58px,#008fff 58px 59px,#009fff 59px 60px,#00afff 60px 61px,#00bfff 61px 62px,#00cfff 62px 63px,#00dfff 63px 64px,#00efff 64px 65px,#00ffff 65px 66px,#10ffef 66px 67px,#20ffdf 67px 68px,#30ffcf 68px 69px,#40ffbf 69px 70px,#60ff9f 70px 71px,#70ff8f 71px 72px,#80ff80 72px 73px,#8fff70 73px 74px,#9fff60 74px 75px,#afff50 75px 76px,#bfff40 76px 77px,#cfff30 77px 78px,#dfff20 78px 79px,#efff10 79px 80px,#ffff00 80px 81px,#ffef00 81px 82px,#ffcf00 82px 83px,#ffbf00 83px 84px,#ffaf00 84px 85px,#ff9f00 85px 86px,#ff8f00 86px 87px,#ff8000 87px 88px,#ff7000 88px 89px,#ff6000 89px 90px,#ff5000 90px 91px,#ff4000 91px 92px,#ff3000 92px 93px,#ff1000 93px 94px,#ff0000 94px 97px,#df0000 97px 98px,#bf0000 98px 99px,#00009f 99px 102px,#8f0000 102px 103px,#00009f 103px 104px,#0000ff 104px 105px,#0010ff 105px 106px,#0020ff 106px 107px,#0080ff 107px 108px,#0010ff 108px 109px,#0000ff 109px 110px,#0030ff 110px 111px,#0000ff 111px 112px,#0080ff 112px 113px,#008fff 113px 115px,#0020ff 115px 116px,#800000 116px 117px,#8f0000 117px 118px,#0070ff 118px 119px,#00afff 119px 120px,#30ffcf 120px 122px,#20ffdf 122px 123px,#00ffff 123px 124px,#40ffbf 124px 125px,#8fff70 125px 126px,#bfff40 126px 127px,#dfff20 127px 128px,#ffff00 128px 129px,#ffcf00 129px 130px,#ffaf00 130px 131px,#ff8f00 131px 132px,#ff7000 132px 133px,#ff5000 133px 134px,#ff3000 134px 135px,#ff0000 135px 136px,#df0000 136px 137px,#bf0000 137px 138px,#9f0000 138px 139px,#800000 139px 140px,#00009f 140px 141px,#0000cf 141px 142px,#0000ef 142px 143px,#0010ff 143px 144px,#0030ff 144px 145px,#0050ff 145px 146px,#0070ff 146px 147px,#009fff 147px 148px,#00bfff 148px 149px,#00dfff 149px 150px,#00ffff 150px 151px,#20ffdf 151px 152px,#40ffbf 152px 153px,#70ff8f 153px 154px,#8fff70 154px 155px,#afff50 155px 156px,#cfff30 156px 157px,#efff10 157px 158px,#ffef00 158px 159px,#ffbf00 159px 160px,#ff9f00 160px 161px,#ff8000 161px 162px,#ff6000 162px 163px,#ff4000 163px 164px,#ff2000 164px 165px,#ef0000 165px 166px,#cf0000 166px 167px,#af0000 167px 168px,#8f0000 168px 169px,#00008f 169px 170px,#0000af 170px 171px,#0000df 171px 172px,#0000ff 172px 173px,#0020ff 173px 174px,#0040ff 174px 175px,#0060ff 175px 176px,#0080ff 176px 177px,#00afff 177px 178px,#00cfff 178px 179px,#00efff 179px 180px,#10ffef 180px 181px,#30ffcf 181px 182px,#50ffaf 182px 183px,#80ff80 183px 184px,#9fff60 184px 185px,#bfff40 185px 186px,#dfff20 186px 187px,#ffff00 187px 188px,#ffdf00 188px 189px,#ffaf00 189px 190px,#ff8f00 190px 191px,#ff7000 191px 192px,#ff5000 192px 193px,#ff3000 193px 194px,#ff1000 194px 195px,#df0000 195px 196px,#bf0000 196px 197px,#9f0000 197px 198px,#800000 198px 199px,#00009f 199px 200px,#0000bf 200px 201px,#0000ef 201px 202px,#0010ff 202px 203px,#0030ff 203px 204px,#0050ff 204px 205px,#0070ff 205px 206px,#008fff 206px 207px,#00bfff 207px 208px,#00dfff 208px 209px,#00ffff 209px 210px,#20ffdf 210px 211px,#40ffbf 211px 212px,#60ff9f 212px 213px,#8fff70 213px 214px,#afff50 214px 215px,#cfff30 215px 216px,#efff10 216px 217px,#ffef00 217px 218px,#ffcf00 218px 219px,#ff9f00 219px 220px,#ff8000 220px 221px,#ff6000 221px 222px,#ff3000 222px 223px,#ff2000 223px 224px,#ff0000 224px 225px,#ef0000 225px 226px,#cf0000 226px 227px,#df0000 227px 228px,#cf0000 228px 229px,#bf0000 229px 231px,#0010ff 231px 232px,#0040ff 232px 233px,#00cfff 233px 234px,#20ffdf 234px 235px)"></div>
<div class="a" style="left:100px;top:713px;width:235px;height:1px;background:linear-gradient(90deg,#0000cf 0 1px,#0000ef 1px 2px,#afff50 2px 3px,#ffff00 3px 5px,#dfff20 5px 6px,#bfff40 6px 7px,#ffdf00 7px 8px,#efff10 8px 9px,#ffcf00 9px 10px,#ffaf00 10px 11px,#ff9f00 11px 13px,#ff3000 13px 14px,#0000af 14px 15px,#9f0000 15px 16px,#ff8000 16px 17px,#ffbf00 17px 18px,#ffef00 18px 19px,#cfff30 19px 20px,#dfff20 20px 21px,#efff10 21px 22px,#ffff00 22px 23px,#ffcf00 23px 25px,#ffaf00 25px 26px,#ff9f00 26px 27px,#ff8f00 27px 28px,#ff8000 28px 29px,#ff7000 29px 30px,#ff6000 30px 31px,#ff5000 31px 32px,#ff4000 32px 33px,#ff3000 33px 34px,#ff2000 34px 35px,#ff1000 35px 36px,#ff0000 36px 37px,#df0000 37px 38px,#cf0000 38px 39px,#bf0000 39px 40px,#af0000 40px 41px,#9f0000 41px 42px,#8f0000 42px 43px,#800000 43px 44px,#00008f 44px 45px,#00009f 45px 46px,#0000af 46px 47px,#0000bf 47px 48px,#0000cf 48px 49px,#0000ef 49px 50px,#0000ff 50px 51px,#0010ff 51px 52px,#0020ff 52px 53px,#0030ff 53px 54px,#0040ff 54px 55px,#0050ff 55px 56px,#0060ff 56px 57px,#0070ff 57px 58px,#008fff 58px 59px,#009fff 59px 60px,#00afff 60px 61px,#00bfff 61px 62px,#00cfff 62px 63px,#00dfff 63px 64px,#00efff 64px 65px,#00ffff 65px 66px,#10ffef 66px 67px,#20ffdf 67px 68px,#30ffcf 68px 69px,#40ffbf 69px 70px,#60ff9f 70px 71px,#70ff8f 71px 72px,#80ff80 72px 73px,#8fff70 73px 74px,#9fff60 74px 75px,#afff50 75px 76px,#bfff40 76px 77px,#cfff30 77px 78px,#dfff20 78px 79px,#efff10 79px 80px,#ffff00 80px 81px,#ffef00 81px 82px,#ffcf00 82px 83px,#ffbf00 83px 84px,#ffaf00 84px 85px,#ff9f00 85px 86px,#ff8f00 86px 87px,#ff8000 87px 88px,#ff7000 88px 89px,#ff6000 89px 90px,#ff5000 90px 91px,#ff4000 91px 92px,#ff3000 92px 93px,#ff2000 93px 94px,#ff1000 94px 95px,#ef0000 95px 96px,#df0000 96px 97px,#af0000 97px 98px,#df0000 98px 99px,#cf0000 99px 100px,#ff0000 100px 101px,#ff3000 101px 102px,#008fff 102px 103px,#30ffcf 103px 104px,#00dfff 104px 105px,#00bfff 105px 106px,#0000cf 106px 107px,#df0000 107px 108px,#ff5000 108px 109px,#ff8f00 109px 110px,#ffaf00 110px 111px,#00008f 111px 112px,#8f0000 112px 113px,#800000 113px 114px,#0000cf 114px 115px,#0000ef 115px 116px,#0060ff 116px 117px,#0000df 117px 118px,#ff4000 118px 119px,#0030ff 119px 120px,#10ffef 120px 121px,#00efff 121px 122px,#30ffcf 122px 123px,#70ff8f 123px 124px,#8fff70 124px 125px,#bfff40 125px 127px,#dfff20 127px 128px,#ffff00 128px 129px,#ffbf00 129px 130px,#ffaf00 130px 131px,#ff8f00 131px 132px,#ff7000 132px 133px,#ff5000 133px 134px,#ff3000 134px 135px,#ff0000 135px 136px,#df0000 136px 137px,#bf0000 137px 138px,#9f0000 138px 139px,#800000 139px 140px,#00009f 140px 141px,#0000cf 141px 142px,#0000ef 142px 143px,#0010ff 143px 144px,#0030ff 144px 145px,#0050ff 145px 146px,#0070ff 146px 147px,#009fff 147px 148px,#00bfff 148px 149px,#00dfff 149px 150px,#00ffff 150px 151px,#20ffdf 151px 152px,#40ffbf 152px 153px,#70ff8f 153px 154px,#8fff70 154px 155px,#afff50 155px 156px,#cfff30 156px 157px,#efff10 157px 158px,#ffef00 158px 159px,#ffbf00 159px 160px,#ff9f00 160px 161px,#ff8000 161px 162px,#ff6000 162px 163px,#ff4000 163px 164px,#ff2000 164px 165px,#ef0000 165px 166px,#cf0000 166px 167px,#af0000 167px 168px,#8f0000 168px 169px,#00008f 169px 170px,#0000af 170px 171px,#0000df 171px 172px,#0000ff 172px 173px,#0020ff 173px 174px,#0040ff 174px 175px,#0060ff 175px 176px,#0080ff 176px 177px,#00afff 177px 178px,#00cfff 178px 179px,#00efff 179px 180px,#10ffef 180px 181px,#30ffcf 181px 182px,#50ffaf 182px 183px,#80ff80 183px 184px,#9fff60 184px 185px,#bfff40 185px 186px,#dfff20 186px 187px,#ffff00 187px 188px,#ffdf00 188px 189px,#ffaf00 189px 190px,#ff8f00 190px 191px,#ff7000 191px 192px,#ff5000 192px 193px,#ff3000 193px 194px,#ff1000 194px 195px,#df0000 195px 196px,#bf0000 196px 197px,#9f0000 197px 198px,#00008f 198px 199px,#0000af 199px 200px,#0000bf 200px 201px,#0000ef 201px 202px,#0010ff 202px 203px,#0030ff 203px 204px,#0050ff 204px 205px,#0070ff 205px 206px,#008fff 206px 207px,#00bfff 207px 208px,#00dfff 208px 209px,#00ffff 209px 210px,#20ffdf 210px 211px,#40ffbf 211px 212px,#60ff9f 212px 213px,#8fff70 213px 214px,#afff50 214px 215px,#cfff30 215px 216px,#efff10 216px 217px,#ffef00 217px 218px,#ffcf00 218px 219px,#ff9f00 219px 220px,#ff8000 220px 221px,#ff6000 221px 222px,#ff4000 222px 223px,#ff2000 223px 224px,#ff1000 224px 225px,#ef0000 225px 226px,#8f0000 226px 227px,#0000af 227px 228px,#9f0000 228px 229px,#ff1000 229px 230px,#ff6000 230px 231px,#ff2000 231px 232px,#0010ff 232px 233px,#0000cf 233px 234px,#0000ef 234px 235px)"></div>
<div class="a" style="left:100px;top:714px;width:235px;height:1px;background:linear-gradient(90deg,#40ffbf 0 1px,#00ffff 1px 2px,#00dfff 2px 3px,#0060ff 3px 4px,#20ffdf 4px 5px,#30ffcf 5px 6px,#40ffbf 6px 7px,#00afff 7px 8px,#0070ff 8px 9px,#00dfff 9px 10px,#50ffaf 10px 11px,#40ffbf 11px 12px,#00efff 12px 13px,#20ffdf 13px 14px,#80ff80 14px 15px,#9fff60 15px 16px,#cfff30 16px 17px,#afff50 17px 18px,#dfff20 18px 19px,#ffff00 19px 20px,#dfff20 20px 21px,#ffff00 21px 22px,#ffef00 22px 23px,#ffcf00 23px 24px,#ffbf00 24px 25px,#ffaf00 25px 26px,#ff9f00 26px 27px,#ff8f00 27px 28px,#ff8000 28px 29px,#ff7000 29px 30px,#ff6000 30px 31px,#ff5000 31px 32px,#ff4000 32px 33px,#ff3000 33px 34px,#ff2000 34px 35px,#ff1000 35px 36px,#ff0000 36px 37px,#df0000 37px 38px,#cf0000 38px 39px,#bf0000 39px 40px,#af0000 40px 41px,#9f0000 41px 42px,#8f0000 42px 43px,#800000 43px 44px,#00008f 44px 45px,#00009f 45px 46px,#0000af 46px 47px,#0000bf 47px 48px,#0000cf 48px 49px,#0000ef 49px 50px,#0000ff 50px 51px,#0010ff 51px 52px,#0020ff 52px 53px,#0030ff 53px 54px,#0040ff 54px 55px,#0050ff 55px 56px,#0060ff 56px 57px,#0070ff 57px 58px,#008fff 58px 59px,#009fff 59px 60px,#00afff 60px 61px,#00bfff 61px 62px,#00cfff 62px 63px,#00dfff 63px 64px,#00efff 64px 65px,#00ffff 65px 66px,#10ffef 66px 67px,#20ffdf 67px 68px,#40ffbf 68px 69px,#50ffaf 69px 70px,#60ff9f 70px 71px,#70ff8f 71px 72px,#80ff80 72px 73px,#8fff70 73px 74px,#9fff60 74px 75px,#afff50 75px 76px,#bfff40 76px 77px,#cfff30 77px 78px,#dfff20 78px 79px,#efff10 79px 80px,#ffff00 80px 81px,#ffef00 81px 82px,#ffcf00 82px 83px,#ffbf00 83px 84px,#ffaf00 84px 85px,#ff9f00 85px 86px,#ff8f00 86px 87px,#ff8000 87px 88px,#ff7000 88px 89px,#ff6000 89px 90px,#ff5000 90px 91px,#ff4000 91px 92px,#ff3000 92px 93px,#ff2000 93px 94px,#ff1000 94px 96px,#ef0000 96px 97px,#df0000 97px 98px,#bf0000 98px 99px,#af0000 99px 100px,#bf0000 100px 101px,#cf0000 101px 102px,#bf0000 102px 103px,#800000 103px 104px,#0070ff 104px 105px,#0050ff 105px 106px,#0080ff 106px 107px,#009fff 107px 108px,#0080ff 108px 110px,#00bfff 110px 111px,#00cfff 111px 112px,#8fff70 112px 113px,#bfff40 113px 114px,#9fff60 114px 115px,#ffdf00 115px 116px,#ef0000 116px 117px,#0010ff 117px 118px,#60ff9f 118px 119px,#10ffef 119px 120px,#00ffff 120px 121px,#00efff 121px 122px,#40ffbf 122px 123px,#50ffaf 123px 124px,#80ff80 124px 125px,#70ff8f 125px 126px,#bfff40 126px 127px,#dfff20 127px 128px,#ffff00 128px 129px,#ffdf00 129px 130px,#ffaf00 130px 131px,#ff9f00 131px 132px,#ff7000 132px 133px,#ff5000 133px 134px,#ff3000 134px 135px,#ff0000 135px 136px,#df0000 136px 137px,#bf0000 137px 138px,#9f0000 138px 139px,#800000 139px 140px,#00009f 140px 141px,#0000cf 141px 142px,#0000ef 142px 143px,#0010ff 143px 144px,#0030ff 144px 145px,#0050ff 145px 146px,#0070ff 146px 147px,#009fff 147px 148px,#00bfff 148px 149px,#00dfff 149px 150px,#00ffff 150px 151px,#20ffdf 151px 152px,#40ffbf 152px 153px,#70ff8f 153px 154px,#8fff70 154px 155px,#afff50 155px 156px,#cfff30 156px 157px,#efff10 157px 158px,#ffef00 158px 159px,#ffbf00 159px 160px,#ff9f00 160px 161px,#ff8000 161px 162px,#ff6000 162px 163px,#ff4000 163px 164px,#ff2000 164px 165px,#ef0000 165px 166px,#cf0000 166px 167px,#af0000 167px 168px,#8f0000 168px 169px,#00008f 169px 170px,#0000af 170px 171px,#0000df 171px 172px,#0000ff 172px 173px,#0020ff 173px 174px,#0040ff 174px 175px,#0060ff 175px 176px,#0080ff 176px 177px,#00afff 177px 178px,#00cfff 178px 179px,#00efff 179px 180px,#10ffef 180px 181px,#30ffcf 181px 182px,#50ffaf 182px 183px,#80ff80 183px 184px,#9fff60 184px 185px,#bfff40 185px 186px,#dfff20 186px 187px,#ffff00 187px 188px,#ffdf00 188px 189px,#ffaf00 189px 190px,#ff8f00 190px 191px,#ff7000 191px 192px,#ff5000 192px 193px,#ff3000 193px 194px,#ff1000 194px 195px,#df0000 195px 196px,#bf0000 196px 197px,#9f0000 197px 198px,#00008f 198px 199px,#0000af 199px 200px,#0000cf 200px 201px,#0000ef 201px 202px,#0010ff 202px 203px,#0030ff 203px 204px,#0050ff 204px 205px,#0070ff 205px 206px,#008fff 206px 207px,#00bfff 207px 208px,#00dfff 208px 209px,#00ffff 209px 210px,#20ffdf 210px 211px,#40ffbf 211px 212px,#60ff9f 212px 213px,#8fff70 213px 214px,#afff50 214px 215px,#cfff30 215px 216px,#efff10 216px 217px,#ffef00 217px 218px,#ffcf00 218px 219px,#ff9f00 219px 220px,#ff8000 220px 221px,#ff6000 221px 222px,#ff4000 222px 223px,#ff2000 223px 224px,#ef0000 224px 225px,#ff0000 225px 226px,#ff1000 226px 227px,#ffaf00 227px 228px,#80ff80 228px 229px,#20ffdf 229px 230px,#008fff 230px 231px,#0010ff 231px 232px,#0000ef 232px 233px,#0000df 233px 235px)"></div>
<div class="a" style="left:100px;top:715px;width:235px;height:1px;background:linear-gradient(90deg,#00afff 0 1px,#10ffef 1px 2px,#20ffdf 2px 3px,#40ffbf 3px 4px,#20ffdf 4px 5px,#009fff 5px 6px,#0080ff 6px 7px,#0010ff 7px 8px,#00008f 8px 9px,#ff8f00 9px 10px,#ff9f00 10px 11px,#ff6000 11px 12px,#cfff30 12px 13px,#9fff60 13px 14px,#00bfff 14px 15px,#9fff60 15px 16px,#8fff70 16px 17px,#cfff30 17px 18px,#bfff40 18px 19px,#efff10 19px 21px,#ffff00 21px 22px,#ffef00 22px 24px,#ffcf00 24px 25px,#ffaf00 25px 26px,#ff9f00 26px 27px,#ff8f00 27px 28px,#ff8000 28px 29px,#ff7000 29px 30px,#ff6000 30px 31px,#ff5000 31px 32px,#ff4000 32px 33px,#ff3000 33px 34px,#ff2000 34px 35px,#ff1000 35px 36px,#ff0000 36px 37px,#df0000 37px 38px,#cf0000 38px 39px,#bf0000 39px 40px,#af0000 40px 41px,#9f0000 41px 42px,#8f0000 42px 43px,#800000 43px 44px,#00008f 44px 45px,#00009f 45px 46px,#0000af 46px 47px,#0000bf 47px 48px,#0000cf 48px 49px,#0000ef 49px 50px,#0000ff 50px 51px,#0010ff 51px 52px,#0020ff 52px 53px,#0030ff 53px 54px,#0040ff 54px 55px,#0050ff 55px 56px,#0060ff 56px 57px,#0070ff 57px 58px,#008fff 58px 59px,#009fff 59px 60px,#00afff 60px 61px,#00bfff 61px 62px,#00cfff 62px 63px,#00dfff 63px 64px,#00efff 64px 65px,#00ffff 65px 66px,#10ffef 66px 67px,#30ffcf 67px 68px,#40ffbf 68px 69px,#50ffaf 69px 70px,#60ff9f 70px 71px,#70ff8f 71px 72px,#80ff80 72px 73px,#8fff70 73px 74px,#9fff60 74px 75px,#afff50 75px 76px,#bfff40 76px 77px,#cfff30 77px 78px,#dfff20 78px 79px,#ffff00 79px 80px,#ffef00 80px 81px,#ffdf00 81px 82px,#ffcf00 82px 83px,#ffbf00 83px 84px,#ffaf00 84px 85px,#ff9f00 85px 86px,#ff8f00 86px 87px,#ff8000 87px 88px,#ff7000 88px 89px,#ff6000 89px 90px,#ff5000 90px 91px,#ff4000 91px 92px,#ff3000 92px 93px,#ff2000 93px 94px,#ff1000 94px 95px,#ef0000 95px 97px,#df0000 97px 100px,#af0000 100px 101px,#9f0000 101px 102px,#800000 102px 103px,#0010ff 103px 104px,#0070ff 104px 106px,#008fff 106px 107px,#0060ff 107px 108px,#0050ff 108px 109px,#00dfff 109px 110px,#10ffef 110px 111px,#40ffbf 111px 112px,#20ffdf 112px 113px,#8fff70 113px 114px,#bfff40 114px 115px,#50ffaf 115px 116px,#30ffcf 116px 117px,#00afff 117px 119px,#0080ff 119px 120px,#00dfff 120px 121px,#00cfff 121px 122px,#00bfff 122px 123px,#10ffef 123px 124px,#70ff8f 124px 125px,#8fff70 125px 126px,#bfff40 126px 127px,#dfff20 127px 128px,#ffff00 128px 129px,#ffcf00 129px 130px,#ffaf00 130px 131px,#ff9f00 131px 132px,#ff7000 132px 133px,#ff5000 133px 134px,#ff3000 134px 135px,#ff0000 135px 136px,#df0000 136px 137px,#bf0000 137px 138px,#8f0000 138px 139px,#00008f 139px 140px,#0000af 140px 141px,#0000cf 141px 142px,#0000ef 142px 143px,#0010ff 143px 144px,#0030ff 144px 145px,#0050ff 145px 146px,#0070ff 146px 147px,#009fff 147px 148px,#00bfff 148px 149px,#00dfff 149px 150px,#00ffff 150px 151px,#20ffdf 151px 152px,#40ffbf 152px 153px,#70ff8f 153px 154px,#8fff70 154px 155px,#afff50 155px 156px,#cfff30 156px 157px,#efff10 157px 158px,#ffef00 158px 159px,#ffbf00 159px 160px,#ff9f00 160px 161px,#ff8000 161px 162px,#ff6000 162px 163px,#ff4000 163px 164px,#ff2000 164px 165px,#ef0000 165px 166px,#cf0000 166px 167px,#af0000 167px 168px,#800000 168px 169px,#00009f 169px 170px,#0000bf 170px 171px,#0000df 171px 172px,#0000ff 172px 173px,#0020ff 173px 174px,#0040ff 174px 175px,#0060ff 175px 176px,#0080ff 176px 177px,#00afff 177px 178px,#00cfff 178px 179px,#00efff 179px 180px,#10ffef 180px 181px,#30ffcf 181px 182px,#50ffaf 182px 183px,#80ff80 183px 184px,#9fff60 184px 185px,#bfff40 185px 186px,#dfff20 186px 187px,#ffff00 187px 188px,#ffdf00 188px 189px,#ffaf00 189px 190px,#ff8f00 190px 191px,#ff7000 191px 192px,#ff5000 192px 193px,#ff2000 193px 194px,#ff0000 194px 195px,#df0000 195px 196px,#bf0000 196px 197px,#9f0000 197px 198px,#00008f 198px 199px,#0000af 199px 200px,#0000cf 200px 201px,#0000ef 201px 202px,#0010ff 202px 203px,#0030ff 203px 204px,#0050ff 204px 205px,#0070ff 205px 206px,#008fff 206px 207px,#00bfff 207px 208px,#00dfff 208px 209px,#00ffff 209px 210px,#20ffdf 210px 211px,#40ffbf 211px 212px,#60ff9f 212px 213px,#8fff70 213px 214px,#afff50 214px 215px,#cfff30 215px 216px,#efff10 216px 217px,#ffef00 217px 218px,#ffcf00 218px 219px,#ff9f00 219px 220px,#ff8000 220px 221px,#ff6000 221px 222px,#ff4000 222px 223px,#ff2000 223px 224px,#ef0000 224px 225px,#cf0000 225px 226px,#0000df 226px 227px,#0020ff 227px 228px,#0030ff 228px 229px,#0000df 229px 230px,#0000ef 230px 231px,#0000ff 231px 232px,#0040ff 232px 233px,#0020ff 233px 234px,#20ffdf 234px 235px)"></div>
<div class="a" style="left:100px;top:716px;width:235px;height:1px;background:linear-gradient(90deg,#0050ff 0 1px,#0000cf 1px 2px,#8f0000 2px 3px,#00008f 3px 4px,#800000 4px 5px,#0000bf 5px 7px,#0070ff 7px 8px,#0080ff 8px 9px,#40ffbf 9px 10px,#70ff8f 10px 11px,#50ffaf 11px 12px,#40ffbf 12px 13px,#30ffcf 13px 14px,#50ffaf 14px 15px,#bfff40 15px 16px,#ffef00 16px 18px,#cfff30 18px 19px,#dfff20 19px 20px,#efff10 20px 21px,#ffef00 21px 22px,#ffdf00 22px 23px,#ffcf00 23px 25px,#ffaf00 25px 26px,#ff9f00 26px 27px,#ff8f00 27px 28px,#ff8000 28px 29px,#ff7000 29px 30px,#ff6000 30px 31px,#ff5000 31px 32px,#ff4000 32px 33px,#ff3000 33px 34px,#ff2000 34px 35px,#ff1000 35px 36px,#ff0000 36px 37px,#ef0000 37px 38px,#df0000 38px 39px,#cf0000 39px 40px,#af0000 40px 41px,#9f0000 41px 42px,#8f0000 42px 43px,#800000 43px 44px,#00008f 44px 45px,#00009f 45px 46px,#0000af 46px 47px,#0000bf 47px 48px,#0000cf 48px 49px,#0000ef 49px 50px,#0000ff 50px 51px,#0010ff 51px 52px,#0020ff 52px 53px,#0030ff 53px 54px,#0040ff 54px 55px,#0050ff 55px 56px,#0060ff 56px 57px,#0070ff 57px 58px,#008fff 58px 59px,#009fff 59px 60px,#00afff 60px 61px,#00bfff 61px 62px,#00cfff 62px 63px,#00dfff 63px 64px,#00efff 64px 65px,#00ffff 65px 66px,#10ffef 66px 67px,#30ffcf 67px 68px,#40ffbf 68px 69px,#50ffaf 69px 70px,#60ff9f 70px 71px,#70ff8f 71px 72px,#80ff80 72px 73px,#8fff70 73px 74px,#9fff60 74px 75px,#afff50 75px 76px,#bfff40 76px 77px,#cfff30 77px 78px,#dfff20 78px 79px,#ffff00 79px 80px,#ffef00 80px 81px,#ffdf00 81px 82px,#ffcf00 82px 83px,#ffbf00 83px 84px,#ffaf00 84px 85px,#ff9f00 85px 86px,#ff8f00 86px 87px,#ff8000 87px 88px,#ff7000 88px 89px,#ff6000 89px 90px,#ff5000 90px 91px,#ff4000 91px 92px,#ff3000 92px 93px,#ff2000 93px 94px,#ff1000 94px 95px,#ef0000 95px 96px,#df0000 96px 97px,#cf0000 97px 99px,#9f0000 99px 100px,#af0000 100px 101px,#800000 101px 102px,#8f0000 102px 103px,#0000bf 103px 105px,#8f0000 105px 106px,#800000 106px 107px,#00008f 107px 108px,#0000bf 108px 109px,#af0000 109px 110px,#ff1000 110px 111px,#ff5000 111px 112px,#bf0000 112px 113px,#800000 113px 114px,#0000bf 114px 115px,#cf0000 115px 116px,#bf0000 116px 117px,#8f0000 117px 118px,#ff8f00 118px 119px,#00ffff 119px 120px,#0060ff 120px 121px,#009fff 121px 122px,#0070ff 122px 123px,#9fff60 123px 124px,#efff10 124px 125px,#afff50 125px 127px,#cfff30 127px 128px,#ffff00 128px 129px,#ffcf00 129px 130px,#ffaf00 130px 131px,#ff8f00 131px 132px,#ff7000 132px 133px,#ff5000 133px 134px,#ff3000 134px 135px,#ff0000 135px 136px,#df0000 136px 137px,#bf0000 137px 138px,#8f0000 138px 139px,#00008f 139px 140px,#0000af 140px 141px,#0000cf 141px 142px,#0000ef 142px 143px,#0010ff 143px 144px,#0040ff 144px 145px,#0050ff 145px 146px,#0070ff 146px 147px,#009fff 147px 148px,#00bfff 148px 149px,#00dfff 149px 150px,#00ffff 150px 151px,#20ffdf 151px 152px,#40ffbf 152px 153px,#60ff9f 153px 154px,#80ff80 154px 155px,#9fff60 155px 156px,#cfff30 156px 157px,#efff10 157px 158px,#ffef00 158px 159px,#ffbf00 159px 160px,#ff9f00 160px 161px,#ff8000 161px 162px,#ff6000 162px 163px,#ff4000 163px 164px,#ff1000 164px 165px,#ef0000 165px 166px,#cf0000 166px 167px,#af0000 167px 168px,#800000 168px 169px,#00009f 169px 170px,#0000bf 170px 171px,#0000df 171px 172px,#0000ff 172px 173px,#0020ff 173px 174px,#0050ff 174px 175px,#0060ff 175px 176px,#0080ff 176px 177px,#00afff 177px 178px,#00cfff 178px 179px,#00efff 179px 180px,#10ffef 180px 181px,#30ffcf 181px 182px,#50ffaf 182px 183px,#80ff80 183px 184px,#9fff60 184px 185px,#bfff40 185px 186px,#dfff20 186px 187px,#ffff00 187px 188px,#ffdf00 188px 189px,#ffaf00 189px 190px,#ff8f00 190px 191px,#ff7000 191px 192px,#ff4000 192px 193px,#ff2000 193px 194px,#ff0000 194px 195px,#df0000 195px 196px,#bf0000 196px 197px,#9f0000 197px 198px,#00008f 198px 199px,#0000af 199px 200px,#0000cf 200px 201px,#0000ef 201px 202px,#0010ff 202px 203px,#0030ff 203px 204px,#0060ff 204px 205px,#0070ff 205px 206px,#008fff 206px 207px,#00bfff 207px 208px,#00dfff 208px 209px,#00ffff 209px 210px,#20ffdf 210px 211px,#40ffbf 211px 212px,#60ff9f 212px 213px,#80ff80 213px 214px,#9fff60 214px 215px,#bfff40 215px 216px,#efff10 216px 217px,#ffef00 217px 218px,#ffcf00 218px 219px,#ff9f00 219px 220px,#ff8000 220px 221px,#ff6000 221px 222px,#ff4000 222px 223px,#ff1000 223px 224px,#cf0000 224px 225px,#00008f 225px 226px,#00009f 226px 227px,#0000bf 227px 228px,#00008f 228px 229px,#ef0000 229px 230px,#afff50 230px 231px,#00bfff 231px 232px,#0060ff 232px 233px,#0000ef 233px 234px,#0000cf 234px 235px)"></div>
<div class="a" style="left:411px;top:604px;width:235px;height:33px;background:linear-gradient(90deg,#9fff60 0 4px,#afff50 4px 10px,#bfff40 10px 16px,#cfff30 16px 23px,#dfff20 23px 31px,#efff10 31px 42px,#ffff00 42px 75px,#efff10 75px 86px,#dfff20 86px 94px,#cfff30 94px 101px,#bfff40 101px 107px,#afff50 107px 113px,#9fff60 113px 119px,#8fff70 119px 125px,#80ff80 125px 131px,#70ff8f 131px 137px,#60ff9f 137px 144px,#50ffaf 144px 153px,#40ffbf 153px 166px,#30ffcf 166px 187px,#40ffbf 187px 201px,#50ffaf 201px 209px,#60ff9f 209px 216px,#70ff8f 216px 223px,#80ff80 223px 229px,#8fff70 229px 235px)"></div>
<div class="a" style="left:411px;top:637px;width:235px;height:24px;background:linear-gradient(90deg,#9fff60 0 7px,#afff50 7px 17px,#bfff40 17px 30px,#cfff30 30px 87px,#bfff40 87px 100px,#afff50 100px 110px,#9fff60 110px 119px,#8fff70 119px 129px,#80ff80 129px 139px,#70ff8f 139px 156px,#60ff9f 156px 198px,#70ff8f 198px 214px,#80ff80 214px 225px,#8fff70 225px 234px,#9fff60 234px 235px)"></div>
<div class="a" style="left:411px;top:661px;width:235px;height:16px;background:linear-gradient(90deg,#9fff60 0 3px,#afff50 3px 5px,#bfff40 5px 7px,#cfff30 7px 10px,#dfff20 10px 13px,#efff10 13px 19px,#ffff00 19px 25px,#efff10 25px 30px,#dfff20 30px 34px,#cfff30 34px 36px,#bfff40 36px 39px,#afff50 39px 41px,#9fff60 41px 44px,#8fff70 44px 46px,#80ff80 46px 50px,#70ff8f 50px 55px,#60ff9f 55px 63px,#70ff8f 63px 67px,#80ff80 67px 70px,#8fff70 70px 73px,#9fff60 73px 76px,#afff50 76px 78px,#bfff40 78px 81px,#cfff30 81px 84px,#dfff20 84px 87px,#efff10 87px 92px,#ffff00 92px 98px,#efff10 98px 104px,#dfff20 104px 107px,#cfff30 107px 110px,#bfff40 110px 112px,#afff50 112px 115px,#9fff60 115px 117px,#8fff70 117px 119px,#80ff80 119px 122px,#70ff8f 122px 124px,#60ff9f 124px 128px,#50ffaf 128px 133px,#40ffbf 133px 141px,#50ffaf 141px 147px,#60ff9f 147px 150px,#70ff8f 150px 154px,#80ff80 154px 157px,#8fff70 157px 160px,#9fff60 160px 164px,#afff50 164px 169px,#bfff40 169px 185px,#afff50 185px 189px,#9fff60 189px 193px,#8fff70 193px 196px,#80ff80 196px 199px,#70ff8f 199px 203px,#60ff9f 203px 207px,#50ffaf 207px 212px,#40ffbf 212px 220px,#50ffaf 220px 225px,#60ff9f 225px 229px,#70ff8f 229px 232px,#80ff80 232px 234px,#8fff70 234px 235px)"></div>
<div class="a" style="left:411px;top:677px;width:235px;height:12px;background:linear-gradient(90deg,#10ffef 0 1px,#20ffdf 1px 2px,#30ffcf 2px 3px,#40ffbf 3px 4px,#50ffaf 4px 5px,#60ff9f 5px 6px,#70ff8f 6px 7px,#80ff80 7px 8px,#9fff60 8px 9px,#afff50 9px 10px,#bfff40 10px 11px,#dfff20 11px 12px,#efff10 12px 13px,#ffff00 13px 14px,#ffdf00 14px 15px,#ffcf00 15px 16px,#ffbf00 16px 17px,#ffaf00 17px 18px,#ff8f00 18px 19px,#ff8000 19px 20px,#ff7000 20px 22px,#ff6000 22px 23px,#ff5000 23px 30px,#ff6000 30px 31px,#ff7000 31px 33px,#ff8000 33px 34px,#ff9f00 34px 35px,#ffaf00 35px 36px,#ffbf00 36px 37px,#ffdf00 37px 38px,#ffef00 38px 39px,#efff10 39px 40px,#cfff30 40px 41px,#afff50 41px 42px,#9fff60 42px 43px,#80ff80 43px 44px,#60ff9f 44px 45px,#40ffbf 45px 46px,#20ffdf 46px 47px,#10ffef 47px 48px,#00efff 48px 49px,#00cfff 49px 50px,#00bfff 50px 51px,#00afff 51px 52px,#009fff 52px 53px,#008fff 53px 54px,#0080ff 54px 55px,#0070ff 55px 58px,#0060ff 58px 59px,#0070ff 59px 62px,#0080ff 62px 63px,#008fff 63px 64px,#009fff 64px 65px,#00afff 65px 66px,#00bfff 66px 67px,#00dfff 67px 68px,#00efff 68px 69px,#00ffff 69px 70px,#20ffdf 70px 71px,#40ffbf 71px 72px,#60ff9f 72px 73px,#80ff80 73px 74px,#9fff60 74px 75px,#afff50 75px 76px,#cfff30 76px 77px,#efff10 77px 78px,#ffff00 78px 79px,#ffdf00 79px 80px,#ffbf00 80px 81px,#ffaf00 81px 82px,#ff8f00 82px 83px,#ff8000 83px 84px,#ff7000 84px 85px,#ff6000 85px 87px,#ff5000 87px 94px,#ff6000 94px 95px,#ff7000 95px 97px,#ff8000 97px 98px,#ff8f00 98px 99px,#ff9f00 99px 100px,#ffbf00 100px 101px,#ffcf00 101px 102px,#ffdf00 102px 103px,#ffff00 103px 104px,#efff10 104px 105px,#dfff20 105px 106px,#bfff40 106px 107px,#afff50 107px 108px,#9fff60 108px 109px,#80ff80 109px 110px,#70ff8f 110px 111px,#60ff9f 111px 112px,#50ffaf 112px 113px,#40ffbf 113px 114px,#30ffcf 114px 115px,#20ffdf 115px 116px,#10ffef 116px 118px,#00ffff 118px 120px,#00efff 120px 126px,#00ffff 126px 129px,#10ffef 129px 131px,#20ffdf 131px 133px,#30ffcf 133px 135px,#40ffbf 135px 136px,#50ffaf 136px 138px,#60ff9f 138px 139px,#70ff8f 139px 141px,#80ff80 141px 143px,#8fff70 143px 145px,#9fff60 145px 147px,#afff50 147px 151px,#bfff40 151px 168px,#afff50 168px 185px,#bfff40 185px 203px,#afff50 203px 206px,#9fff60 206px 208px,#8fff70 208px 210px,#80ff80 210px 212px,#70ff8f 212px 214px,#60ff9f 214px 215px,#50ffaf 215px 217px,#40ffbf 217px 219px,#30ffcf 219px 220px,#20ffdf 220px 222px,#10ffef 222px 224px,#00ffff 224px 226px,#00efff 226px 233px,#00ffff 233px 235px)"></div>
<div class="a" style="left:411px;top:689px;width:235px;height:9px;background:linear-gradient(90deg,#0070ff 0 2px,#0060ff 2px 5px,#0070ff 5px 7px,#0080ff 7px 8px,#009fff 8px 9px,#00afff 9px 10px,#00cfff 10px 11px,#00efff 11px 12px,#20ffdf 12px 13px,#50ffaf 13px 14px,#70ff8f 14px 15px,#9fff60 15px 16px,#dfff20 16px 17px,#ffff00 17px 18px,#ffcf00 18px 19px,#ff8f00 19px 20px,#ff7000 20px 21px,#ff4000 21px 22px,#ff1000 22px 23px,#ef0000 23px 24px,#cf0000 24px 25px,#af0000 25px 26px,#9f0000 26px 27px,#8f0000 27px 28px,#800000 28px 32px,#8f0000 32px 33px,#9f0000 33px 34px,#af0000 34px 35px,#cf0000 35px 36px,#ef0000 36px 37px,#ff2000 37px 38px,#ff5000 38px 39px,#ff7000 39px 40px,#ffaf00 40px 41px,#ffdf00 41px 42px,#efff10 42px 43px,#afff50 43px 44px,#80ff80 44px 45px,#40ffbf 45px 46px,#00ffff 46px 47px,#00cfff 47px 48px,#009fff 48px 49px,#0070ff 49px 50px,#0040ff 50px 51px,#0020ff 51px 52px,#0000ef 52px 53px,#0000cf 53px 54px,#0000bf 54px 55px,#00009f 55px 56px,#00008f 56px 61px,#00009f 61px 62px,#0000bf 62px 63px,#0000cf 63px 64px,#0000ef 64px 65px,#0010ff 65px 66px,#0040ff 66px 67px,#0070ff 67px 68px,#009fff 68px 69px,#00cfff 69px 70px,#10ffef 70px 71px,#40ffbf 71px 72px,#70ff8f 72px 73px,#afff50 73px 74px,#dfff20 74px 75px,#ffdf00 75px 76px,#ffaf00 76px 77px,#ff8000 77px 78px,#ff5000 78px 79px,#ff2000 79px 80px,#ef0000 80px 81px,#cf0000 81px 82px,#af0000 82px 83px,#9f0000 83px 84px,#8f0000 84px 85px,#800000 85px 89px,#8f0000 89px 90px,#9f0000 90px 91px,#af0000 91px 92px,#cf0000 92px 93px,#ef0000 93px 94px,#ff2000 94px 95px,#ff4000 95px 96px,#ff7000 96px 97px,#ff9f00 97px 98px,#ffcf00 98px 99px,#ffef00 99px 100px,#cfff30 100px 101px,#9fff60 101px 102px,#80ff80 102px 103px,#40ffbf 103px 104px,#20ffdf 104px 105px,#00ffff 105px 106px,#00cfff 106px 107px,#00afff 107px 108px,#009fff 108px 109px,#0080ff 109px 110px,#0070ff 110px 112px,#0060ff 112px 115px,#0070ff 115px 116px,#0080ff 116px 117px,#008fff 117px 118px,#009fff 118px 119px,#00afff 119px 120px,#00cfff 120px 121px,#00dfff 121px 122px,#00ffff 122px 123px,#20ffdf 123px 124px,#30ffcf 124px 125px,#50ffaf 125px 126px,#70ff8f 126px 127px,#80ff80 127px 128px,#8fff70 128px 129px,#afff50 129px 130px,#bfff40 130px 131px,#cfff30 131px 132px,#dfff20 132px 134px,#efff10 134px 141px,#dfff20 141px 143px,#cfff30 143px 146px,#bfff40 146px 148px,#afff50 148px 152px,#9fff60 152px 167px,#8fff70 167px 186px,#9fff60 186px 201px,#afff50 201px 205px,#bfff40 205px 207px,#cfff30 207px 210px,#dfff20 210px 212px,#efff10 212px 219px,#dfff20 219px 221px,#cfff30 221px 222px,#bfff40 222px 223px,#afff50 223px 224px,#9fff60 224px 225px,#80ff80 225px 226px,#70ff8f 226px 227px,#50ffaf 227px 228px,#30ffcf 228px 229px,#20ffdf 229px 230px,#00ffff 230px 231px,#00dfff 231px 232px,#00cfff 232px 233px,#00afff 233px 234px,#009fff 234px 235px)"></div>
<div class="a" style="left:411px;top:698px;width:235px;height:5px;background:linear-gradient(90deg,#0040ff 0 1px,#0020ff 1px 2px,#0000ff 2px 6px,#0010ff 6px 7px,#0030ff 7px 8px,#0050ff 8px 9px,#0070ff 9px 10px,#009fff 10px 11px,#00bfff 11px 12px,#00efff 12px 13px,#30ffcf 13px 14px,#60ff9f 14px 15px,#8fff70 15px 16px,#cfff30 16px 17px,#ffff00 17px 18px,#ffdf00 18px 19px,#ffaf00 19px 20px,#ff8000 20px 21px,#ff6000 21px 22px,#ff4000 22px 23px,#ff2000 23px 24px,#ff1000 24px 25px,#ff0000 25px 26px,#ef0000 26px 27px,#df0000 27px 30px,#ef0000 30px 32px,#ff0000 32px 33px,#ff1000 33px 34px,#ff3000 34px 35px,#ff4000 35px 36px,#ff6000 36px 37px,#ff8000 37px 38px,#ff9f00 38px 39px,#ffbf00 39px 40px,#ffef00 40px 41px,#efff10 41px 42px,#cfff30 42px 43px,#9fff60 43px 44px,#80ff80 44px 45px,#60ff9f 45px 46px,#30ffcf 46px 47px,#10ffef 47px 48px,#00efff 48px 49px,#00bfff 49px 50px,#009fff 50px 51px,#008fff 51px 52px,#0070ff 52px 53px,#0060ff 53px 54px,#0050ff 54px 55px,#0040ff 55px 56px,#0030ff 56px 58px,#0020ff 58px 59px,#0030ff 59px 61px,#0040ff 61px 63px,#0050ff 63px 64px,#0070ff 64px 65px,#008fff 65px 66px,#009fff 66px 67px,#00bfff 67px 68px,#00dfff 68px 69px,#00ffff 69px 70px,#30ffcf 70px 71px,#50ffaf 71px 72px,#80ff80 72px 73px,#9fff60 73px 74px,#cfff30 74px 75px,#efff10 75px 76px,#ffdf00 76px 77px,#ffbf00 77px 78px,#ff9f00 78px 79px,#ff8000 79px 80px,#ff6000 80px 81px,#ff4000 81px 82px,#ff2000 82px 83px,#ff1000 83px 84px,#ff0000 84px 85px,#ef0000 85px 87px,#df0000 87px 90px,#ef0000 90px 91px,#ff0000 91px 92px,#ff1000 92px 93px,#ff2000 93px 94px,#ff4000 94px 95px,#ff6000 95px 96px,#ff8000 96px 97px,#ffaf00 97px 98px,#ffdf00 98px 99px,#ffff00 99px 100px,#bfff40 100px 101px,#8fff70 101px 102px,#60ff9f 102px 103px,#20ffdf 103px 104px,#00efff 104px 105px,#00cfff 105px 106px,#008fff 106px 107px,#0070ff 107px 108px,#0050ff 108px 109px,#0020ff 109px 110px,#0010ff 110px 111px,#0000ff 111px 115px,#0020ff 115px 116px,#0040ff 116px 117px,#0070ff 117px 118px,#008fff 118px 119px,#00bfff 119px 120px,#10ffef 120px 121px,#40ffbf 121px 122px,#80ff80 122px 123px,#cfff30 123px 124px,#ffff00 124px 125px,#ffbf00 125px 126px,#ff8f00 126px 127px,#ff6000 127px 128px,#ff4000 128px 129px,#ff3000 129px 130px,#ff2000 130px 133px,#ff4000 133px 134px,#ff6000 134px 135px,#ff8f00 135px 136px,#ffaf00 136px 137px,#ffdf00 137px 138px,#cfff30 138px 139px,#9fff60 139px 140px,#70ff8f 140px 141px,#30ffcf 141px 142px,#00ffff 142px 143px,#00cfff 143px 144px,#00afff 144px 145px,#009fff 145px 146px,#008fff 146px 148px,#009fff 148px 149px,#00bfff 149px 150px,#00dfff 150px 151px,#00ffff 151px 152px,#30ffcf 152px 153px,#70ff8f 153px 154px,#9fff60 154px 155px,#cfff30 155px 156px,#ffef00 156px 157px,#ffcf00 157px 158px,#ffaf00 158px 159px,#ff8000 159px 160px,#ff7000 160px 163px,#ff8000 163px 164px,#ff8f00 164px 165px,#ffbf00 165px 166px,#ffdf00 166px 167px,#efff10 167px 168px,#afff50 168px 169px,#80ff80 169px 170px,#50ffaf 170px 171px,#20ffdf 171px 172px,#00efff 172px 173px,#00cfff 173px 174px,#00afff 174px 176px,#009fff 176px 177px,#00afff 177px 178px,#00bfff 178px 179px,#00cfff 179px 180px,#00ffff 180px 181px,#20ffdf 181px 182px,#50ffaf 182px 183px,#8fff70 183px 184px,#bfff40 184px 185px,#efff10 185px 186px,#ffdf00 186px 187px,#ffaf00 187px 188px,#ff8f00 188px 189px,#ff8000 189px 190px,#ff7000 190px 193px,#ff8f00 193px 194px,#ff9f00 194px 195px,#ffcf00 195px 196px,#ffff00 196px 197px,#cfff30 197px 198px,#9fff60 198px 199px,#60ff9f 199px 200px,#30ffcf 200px 201px,#00ffff 201px 202px,#00dfff 202px 203px,#00bfff 203px 204px,#009fff 204px 205px,#008fff 205px 207px,#009fff 207px 208px,#00afff 208px 209px,#00cfff 209px 210px,#00ffff 210px 211px,#30ffcf 211px 212px,#60ff9f 212px 213px,#9fff60 213px 214px,#dfff20 214px 215px,#ffef00 215px 216px,#ffaf00 216px 217px,#ff8000 217px 218px,#ff6000 218px 219px,#ff4000 219px 220px,#ff2000 220px 223px,#ff3000 223px 224px,#ff4000 224px 225px,#ff6000 225px 226px,#ff8f00 226px 227px,#ffbf00 227px 228px,#ffff00 228px 229px,#bfff40 229px 230px,#8fff70 230px 231px,#40ffbf 231px 232px,#10ffef 232px 233px,#00cfff 233px 234px,#008fff 234px 235px)"></div>
<div class="a" style="left:411px;top:703px;width:235px;height:4px;background:linear-gradient(90deg,#008fff 0 3px,#009fff 3px 4px,#00bfff 4px 5px,#00cfff 5px 6px,#00efff 6px 7px,#10ffef 7px 8px,#20ffdf 8px 9px,#40ffbf 9px 10px,#60ff9f 10px 11px,#70ff8f 11px 12px,#80ff80 12px 13px,#9fff60 13px 14px,#afff50 14px 15px,#bfff40 15px 16px,#cfff30 16px 17px,#dfff20 17px 18px,#efff10 18px 19px,#ffff00 19px 21px,#ffef00 21px 22px,#ffdf00 22px 24px,#ffcf00 24px 28px,#ffbf00 28px 30px,#ffcf00 30px 33px,#ffdf00 33px 35px,#ffef00 35px 37px,#ffff00 37px 38px,#efff10 38px 39px,#dfff20 39px 40px,#cfff30 40px 41px,#bfff40 41px 42px,#afff50 42px 43px,#9fff60 43px 44px,#8fff70 44px 45px,#80ff80 45px 46px,#70ff8f 46px 47px,#60ff9f 47px 48px,#50ffaf 48px 49px,#40ffbf 49px 50px,#30ffcf 50px 52px,#20ffdf 52px 53px,#10ffef 53px 55px,#00ffff 55px 62px,#10ffef 62px 64px,#20ffdf 64px 66px,#30ffcf 66px 67px,#40ffbf 67px 68px,#50ffaf 68px 69px,#60ff9f 69px 70px,#70ff8f 70px 71px,#80ff80 71px 72px,#8fff70 72px 73px,#9fff60 73px 74px,#afff50 74px 75px,#bfff40 75px 76px,#cfff30 76px 77px,#dfff20 77px 78px,#efff10 78px 79px,#ffff00 79px 80px,#ffef00 80px 82px,#ffdf00 82px 84px,#ffcf00 84px 88px,#ffbf00 88px 89px,#ffcf00 89px 93px,#ffdf00 93px 95px,#ffef00 95px 96px,#ffff00 96px 98px,#efff10 98px 99px,#dfff20 99px 100px,#cfff30 100px 101px,#bfff40 101px 102px,#afff50 102px 103px,#9fff60 103px 104px,#8fff70 104px 105px,#70ff8f 105px 106px,#50ffaf 106px 107px,#40ffbf 107px 108px,#20ffdf 108px 109px,#00ffff 109px 110px,#00efff 110px 111px,#00cfff 111px 112px,#00afff 112px 113px,#009fff 113px 114px,#008fff 114px 116px,#0080ff 116px 117px,#008fff 117px 118px,#009fff 118px 119px,#00bfff 119px 120px,#00dfff 120px 121px,#10ffef 121px 122px,#40ffbf 122px 123px,#80ff80 123px 124px,#bfff40 124px 125px,#ffff00 125px 126px,#ffbf00 126px 127px,#ff8f00 127px 128px,#ff6000 128px 129px,#ff3000 129px 130px,#ff1000 130px 131px,#ff0000 131px 133px,#ff1000 133px 134px,#ff2000 134px 135px,#ff5000 135px 136px,#ff8f00 136px 137px,#ffbf00 137px 138px,#dfff20 138px 139px,#9fff60 139px 140px,#50ffaf 140px 141px,#00ffff 141px 142px,#00bfff 142px 143px,#0080ff 143px 144px,#0050ff 144px 145px,#0030ff 145px 146px,#0020ff 146px 148px,#0030ff 148px 149px,#0050ff 149px 150px,#008fff 150px 151px,#00bfff 151px 152px,#00ffff 152px 153px,#60ff9f 153px 154px,#9fff60 154px 155px,#efff10 155px 156px,#ffaf00 156px 157px,#ff8000 157px 158px,#ff4000 158px 159px,#ff1000 159px 160px,#ef0000 160px 163px,#ff0000 163px 164px,#ff2000 164px 165px,#ff6000 165px 166px,#ff9f00 166px 167px,#ffdf00 167px 168px,#bfff40 168px 169px,#80ff80 169px 170px,#30ffcf 170px 171px,#00dfff 171px 172px,#009fff 172px 173px,#0070ff 173px 174px,#0040ff 174px 175px,#0020ff 175px 177px,#0030ff 177px 178px,#0040ff 178px 179px,#0060ff 179px 180px,#009fff 180px 181px,#00dfff 181px 182px,#30ffcf 182px 183px,#80ff80 183px 184px,#cfff30 184px 185px,#ffef00 185px 186px,#ff8f00 186px 187px,#ff6000 187px 188px,#ff3000 188px 189px,#ff0000 189px 190px,#ef0000 190px 192px,#ff0000 192px 193px,#ff1000 193px 194px,#ff4000 194px 195px,#ff8000 195px 196px,#ffbf00 196px 197px,#ffff00 197px 198px,#9fff60 198px 199px,#50ffaf 199px 200px,#10ffef 200px 201px,#00bfff 201px 202px,#0080ff 202px 203px,#0050ff 203px 204px,#0030ff 204px 205px,#0020ff 205px 207px,#0030ff 207px 208px,#0050ff 208px 209px,#0080ff 209px 210px,#00bfff 210px 211px,#00ffff 211px 212px,#50ffaf 212px 213px,#9fff60 213px 214px,#efff10 214px 215px,#ffcf00 215px 216px,#ff8000 216px 217px,#ff5000 217px 218px,#ff3000 218px 219px,#ff1000 219px 220px,#ff0000 220px 222px,#ff1000 222px 223px,#ff3000 223px 224px,#ff5000 224px 225px,#ff8f00 225px 226px,#ffbf00 226px 227px,#ffff00 227px 228px,#afff50 228px 229px,#80ff80 229px 230px,#40ffbf 230px 231px,#10ffef 231px 232px,#00dfff 232px 233px,#00bfff 233px 234px,#009fff 234px 235px)"></div>
<div class="a" style="left:411px;top:707px;width:235px;height:3px;background:linear-gradient(90deg,#10ffef 0 1px,#20ffdf 1px 2px,#30ffcf 2px 3px,#40ffbf 3px 4px,#50ffaf 4px 5px,#60ff9f 5px 6px,#70ff8f 6px 7px,#80ff80 7px 10px,#8fff70 10px 13px,#9fff60 13px 16px,#afff50 16px 18px,#bfff40 18px 21px,#cfff30 21px 24px,#dfff20 24px 34px,#cfff30 34px 37px,#bfff40 37px 40px,#afff50 40px 42px,#9fff60 42px 44px,#8fff70 44px 46px,#80ff80 46px 49px,#70ff8f 49px 51px,#60ff9f 51px 55px,#50ffaf 55px 62px,#60ff9f 62px 66px,#70ff8f 66px 68px,#80ff80 68px 71px,#8fff70 71px 73px,#9fff60 73px 75px,#afff50 75px 77px,#bfff40 77px 79px,#cfff30 79px 83px,#dfff20 83px 93px,#cfff30 93px 96px,#bfff40 96px 99px,#afff50 99px 101px,#9fff60 101px 104px,#8fff70 104px 108px,#80ff80 108px 110px,#70ff8f 110px 111px,#60ff9f 111px 112px,#50ffaf 112px 113px,#40ffbf 113px 114px,#30ffcf 114px 115px,#20ffdf 115px 116px,#10ffef 116px 117px,#00ffff 117px 121px,#10ffef 121px 122px,#30ffcf 122px 123px,#60ff9f 123px 124px,#80ff80 124px 125px,#afff50 125px 126px,#dfff20 126px 127px,#ffef00 127px 128px,#ffcf00 128px 129px,#ff9f00 129px 130px,#ff8f00 130px 131px,#ff8000 131px 134px,#ff8f00 134px 135px,#ffaf00 135px 136px,#ffcf00 136px 137px,#ffff00 137px 138px,#cfff30 138px 139px,#9fff60 139px 140px,#70ff8f 140px 141px,#40ffbf 141px 142px,#10ffef 142px 143px,#00efff 143px 144px,#00cfff 144px 145px,#00afff 145px 149px,#00cfff 149px 150px,#00efff 150px 151px,#10ffef 151px 152px,#40ffbf 152px 153px,#70ff8f 153px 154px,#9fff60 154px 155px,#cfff30 155px 156px,#ffef00 156px 157px,#ffcf00 157px 158px,#ffaf00 158px 159px,#ff8f00 159px 160px,#ff8000 160px 161px,#ff7000 161px 162px,#ff8000 162px 164px,#ff9f00 164px 165px,#ffbf00 165px 166px,#ffdf00 166px 167px,#efff10 167px 168px,#afff50 168px 169px,#80ff80 169px 170px,#60ff9f 170px 171px,#20ffdf 171px 172px,#00ffff 172px 173px,#00dfff 173px 174px,#00bfff 174px 175px,#00afff 175px 178px,#00bfff 178px 179px,#00dfff 179px 180px,#00ffff 180px 181px,#20ffdf 181px 182px,#50ffaf 182px 183px,#8fff70 183px 184px,#bfff40 184px 185px,#efff10 185px 186px,#ffdf00 186px 187px,#ffbf00 187px 188px,#ff9f00 188px 189px,#ff8000 189px 191px,#ff7000 191px 192px,#ff8000 192px 193px,#ff8f00 193px 194px,#ffaf00 194px 195px,#ffcf00 195px 196px,#ffff00 196px 197px,#cfff30 197px 198px,#9fff60 198px 199px,#70ff8f 199px 200px,#40ffbf 200px 201px,#10ffef 201px 202px,#00efff 202px 203px,#00cfff 203px 204px,#00afff 204px 207px,#00bfff 207px 208px,#00cfff 208px 209px,#00efff 209px 210px,#10ffef 210px 211px,#40ffbf 211px 212px,#70ff8f 212px 213px,#9fff60 213px 214px,#cfff30 214px 215px,#ffff00 215px 216px,#ffcf00 216px 217px,#ffaf00 217px 218px,#ff8f00 218px 219px,#ff8000 219px 222px,#ff8f00 222px 223px,#ffaf00 223px 224px,#ffcf00 224px 225px,#ffff00 225px 226px,#dfff20 226px 227px,#afff50 227px 228px,#80ff80 228px 229px,#50ffaf 229px 230px,#30ffcf 230px 231px,#10ffef 231px 232px,#00ffff 232px 235px)"></div>
<div class="a" style="left:411px;top:710px;width:235px;height:2px;background:linear-gradient(90deg,#60ff9f 0 1px,#70ff8f 1px 2px,#80ff80 2px 4px,#8fff70 4px 13px,#9fff60 13px 18px,#afff50 18px 23px,#bfff40 23px 35px,#afff50 35px 40px,#9fff60 40px 45px,#8fff70 45px 49px,#80ff80 49px 57px,#70ff8f 57px 60px,#80ff80 60px 68px,#8fff70 68px 72px,#9fff60 72px 77px,#afff50 77px 82px,#bfff40 82px 94px,#afff50 94px 99px,#9fff60 99px 103px,#8fff70 103px 112px,#80ff80 112px 115px,#70ff8f 115px 116px,#60ff9f 116px 117px,#50ffaf 117px 118px,#40ffbf 118px 121px,#50ffaf 121px 122px,#60ff9f 122px 123px,#70ff8f 123px 124px,#80ff80 124px 125px,#9fff60 125px 126px,#bfff40 126px 127px,#cfff30 127px 128px,#dfff20 128px 129px,#ffff00 129px 131px,#ffef00 131px 133px,#ffff00 133px 135px,#efff10 135px 136px,#dfff20 136px 137px,#cfff30 137px 138px,#afff50 138px 139px,#9fff60 139px 140px,#80ff80 140px 141px,#70ff8f 141px 142px,#60ff9f 142px 143px,#50ffaf 143px 144px,#40ffbf 144px 145px,#30ffcf 145px 149px,#40ffbf 149px 150px,#50ffaf 150px 151px,#60ff9f 151px 152px,#70ff8f 152px 153px,#8fff70 153px 154px,#9fff60 154px 155px,#afff50 155px 156px,#cfff30 156px 157px,#dfff20 157px 158px,#efff10 158px 159px,#ffff00 159px 161px,#ffef00 161px 163px,#ffff00 163px 165px,#dfff20 165px 166px,#cfff30 166px 167px,#bfff40 167px 168px,#9fff60 168px 169px,#8fff70 169px 170px,#80ff80 170px 171px,#60ff9f 171px 172px,#50ffaf 172px 173px,#40ffbf 173px 174px,#30ffcf 174px 179px,#40ffbf 179px 180px,#50ffaf 180px 181px,#60ff9f 181px 182px,#80ff80 182px 183px,#8fff70 183px 184px,#afff50 184px 185px,#bfff40 185px 186px,#cfff30 186px 187px,#efff10 187px 189px,#ffff00 189px 190px,#ffef00 190px 192px,#ffff00 192px 194px,#efff10 194px 195px,#dfff20 195px 196px,#cfff30 196px 197px,#afff50 197px 198px,#9fff60 198px 199px,#80ff80 199px 200px,#70ff8f 200px 201px,#60ff9f 201px 202px,#50ffaf 202px 203px,#40ffbf 203px 204px,#30ffcf 204px 208px,#40ffbf 208px 210px,#60ff9f 210px 211px,#70ff8f 211px 212px,#80ff80 212px 213px,#9fff60 213px 214px,#afff50 214px 215px,#cfff30 215px 216px,#dfff20 216px 217px,#efff10 217px 218px,#ffff00 218px 220px,#ffef00 220px 222px,#ffff00 222px 223px,#efff10 223px 225px,#cfff30 225px 226px,#bfff40 226px 227px,#9fff60 227px 228px,#80ff80 228px 229px,#70ff8f 229px 230px,#60ff9f 230px 231px,#50ffaf 231px 232px,#40ffbf 232px 234px,#50ffaf 234px 235px)"></div>
<div class="a" style="left:411px;top:712px;width:235px;height:1px;background:linear-gradient(90deg,#80ff80 0 1px,#8fff70 1px 13px,#9fff60 13px 21px,#afff50 21px 37px,#9fff60 37px 45px,#8fff70 45px 56px,#80ff80 56px 61px,#8fff70 61px 72px,#9fff60 72px 80px,#afff50 80px 96px,#9fff60 96px 104px,#8fff70 104px 116px,#80ff80 116px 117px,#70ff8f 117px 122px,#80ff80 122px 123px,#8fff70 123px 125px,#9fff60 125px 126px,#afff50 126px 128px,#bfff40 128px 130px,#cfff30 130px 135px,#bfff40 135px 137px,#afff50 137px 138px,#9fff60 138px 140px,#8fff70 140px 141px,#80ff80 141px 143px,#70ff8f 143px 151px,#80ff80 151px 153px,#8fff70 153px 154px,#9fff60 154px 156px,#afff50 156px 157px,#bfff40 157px 159px,#cfff30 159px 164px,#bfff40 164px 166px,#afff50 166px 168px,#9fff60 168px 169px,#8fff70 169px 171px,#80ff80 171px 173px,#70ff8f 173px 176px,#60ff9f 176px 177px,#70ff8f 177px 180px,#80ff80 180px 182px,#8fff70 182px 184px,#9fff60 184px 185px,#afff50 185px 187px,#bfff40 187px 189px,#cfff30 189px 193px,#bfff40 193px 196px,#afff50 196px 197px,#9fff60 197px 199px,#8fff70 199px 200px,#80ff80 200px 202px,#70ff8f 202px 206px,#60ff9f 206px 207px,#70ff8f 207px 210px,#80ff80 210px 212px,#8fff70 212px 213px,#9fff60 213px 215px,#afff50 215px 216px,#bfff40 216px 219px,#cfff30 219px 223px,#bfff40 223px 225px,#afff50 225px 227px,#9fff60 227px 228px,#8fff70 228px 229px,#80ff80 229px 231px,#70ff8f 231px 235px)"></div>
<div class="a" style="left:411px;top:713px;width:235px;height:1px;background:linear-gradient(90deg,#8fff70 0 12px,#9fff60 12px 46px,#8fff70 46px 71px,#9fff60 71px 106px,#8fff70 106px 117px,#80ff80 117px 122px,#8fff70 122px 124px,#9fff60 124px 127px,#afff50 127px 137px,#9fff60 137px 140px,#8fff70 140px 144px,#80ff80 144px 150px,#8fff70 150px 154px,#9fff60 154px 157px,#afff50 157px 167px,#9fff60 167px 170px,#8fff70 170px 173px,#80ff80 173px 180px,#8fff70 180px 183px,#9fff60 183px 186px,#afff50 186px 196px,#9fff60 196px 199px,#8fff70 199px 203px,#80ff80 203px 210px,#8fff70 210px 213px,#9fff60 213px 216px,#afff50 216px 225px,#9fff60 225px 229px,#8fff70 229px 231px,#80ff80 231px 235px)"></div>
<div class="a" style="left:411px;top:714px;width:235px;height:1px;background:linear-gradient(90deg,#8fff70 0 10px,#9fff60 10px 48px,#8fff70 48px 69px,#9fff60 69px 107px,#8fff70 107px 124px,#9fff60 124px 131px,#afff50 131px 134px,#9fff60 134px 141px,#8fff70 141px 153px,#9fff60 153px 160px,#afff50 160px 163px,#9fff60 163px 170px,#8fff70 170px 183px,#9fff60 183px 190px,#afff50 190px 193px,#9fff60 193px 200px,#8fff70 200px 212px,#9fff60 212px 219px,#afff50 219px 222px,#9fff60 222px 229px,#8fff70 229px 235px)"></div>
<div class="a" style="left:411px;top:715px;width:235px;height:1px;background:linear-gradient(90deg,#8fff70 0 6px,#9fff60 6px 52px,#8fff70 52px 65px,#9fff60 65px 111px,#8fff70 111px 116px,#9fff60 116px 117px,#8fff70 117px 122px,#9fff60 122px 142px,#8fff70 142px 152px,#9fff60 152px 172px,#8fff70 172px 181px,#9fff60 181px 201px,#8fff70 201px 211px,#9fff60 211px 231px,#8fff70 231px 235px)"></div>
<div class="a" style="left:411px;top:716px;width:235px;height:1px;background:#9fff60"></div>
<svg class="a" style="left:0;top:0;will-change:transform" width="973" height="781" font-family='"Liberation Sans", sans-serif'>
<defs><radialGradient id="rg" cx="0.45" cy="0.6" r="0.6"><stop offset="0" stop-color="#fbfbfb"/><stop offset="0.6" stop-color="#eef0f2"/><stop offset="1" stop-color="#c8ccd0"/></radialGradient>
<linearGradient id="jet" x1="0" y1="0" x2="0" y2="1"><stop offset="0.000" stop-color="#800000"/><stop offset="0.048" stop-color="#af0000"/><stop offset="0.095" stop-color="#df0000"/><stop offset="0.143" stop-color="#ff1000"/><stop offset="0.190" stop-color="#ff4000"/><stop offset="0.238" stop-color="#ff7000"/><stop offset="0.286" stop-color="#ff9f00"/><stop offset="0.333" stop-color="#ffcf00"/><stop offset="0.381" stop-color="#ffff00"/><stop offset="0.429" stop-color="#cfff30"/><stop offset="0.476" stop-color="#9fff60"/><stop offset="0.524" stop-color="#70ff8f"/><stop offset="0.571" stop-color="#40ffbf"/><stop offset="0.619" stop-color="#10ffef"/><stop offset="0.667" stop-color="#00dfff"/><stop offset="0.714" stop-color="#00afff"/><stop offset="0.762" stop-color="#0080ff"/><stop offset="0.810" stop-color="#0050ff"/><stop offset="0.857" stop-color="#0020ff"/><stop offset="0.905" stop-color="#0000ef"/><stop offset="0.952" stop-color="#0000bf"/><stop offset="1.000" stop-color="#00008f"/><stop offset="1" stop-color="#00008f"/></linearGradient></defs>
<rect x="9.5" y="212.5" width="14" height="14" fill="none" stroke="#c8dcf0" stroke-width="1"/>
<rect x="10" y="213" width="13" height="13" fill="#000"/>
<defs><linearGradient id="mg" x1="0" y1="0" x2="0" y2="1"><stop offset="0" stop-color="#ffd030"/><stop offset="0.5" stop-color="#e06018"/><stop offset="1" stop-color="#f8a020"/></linearGradient></defs>
<path d="M18.4,213.6 L21.9,223.3 L19.3,220.8 L15.2,224.2 L14.0,222.2 L16.8,218.0 Z" fill="url(#mg)"/>
<path d="M11,219.6 C12,218.2 14,218.4 15.2,219.2 C14.8,220.6 12.8,221.4 11.6,220.6 Z" fill="#3cb0d8"/>
<path d="M14.2,218.8 L17.4,215.6 L17.8,216.4 L15.2,219.4 Z" fill="#2a90b8"/>
<text x="26.6" y="223.7" font-size="9.9" fill="#000">Figure 1: Continuous Wavelet Transform (Fourier Transform Algorithm)</text>
<defs><linearGradient id="bb" x1="0" y1="0" x2="0" y2="1"><stop offset="0" stop-color="#d9e5f2"/><stop offset="0.45" stop-color="#c3d4e8"/><stop offset="0.5" stop-color="#a5bdd8"/><stop offset="1" stop-color="#b9d0ea"/></linearGradient><linearGradient id="br" x1="0" y1="0" x2="0" y2="1"><stop offset="0" stop-color="#eeb4a6"/><stop offset="0.45" stop-color="#de9280"/><stop offset="0.5" stop-color="#c4482c"/><stop offset="1" stop-color="#d0603c"/></linearGradient></defs>
<rect x="631.5" y="213.5" width="24.5" height="13" rx="1.8" fill="url(#bb)" stroke="#6b7f96"/>
<rect x="658.5" y="213.5" width="24.5" height="13" rx="1.8" fill="url(#bb)" stroke="#6b7f96"/>
<rect x="686.5" y="213.5" width="24" height="13" rx="1.8" fill="url(#br)" stroke="#5c1a12"/>
<rect x="639.5" y="219.5" width="9" height="3.5" rx="1" fill="#f4f4f4" stroke="#3c4a5c" stroke-width="0.8"/>
<rect x="667" y="216.5" width="8.5" height="7" rx="0.8" fill="#f4f4f4" stroke="#3c4a5c" stroke-width="0.8"/>
<rect x="669.2" y="218.6" width="4.2" height="2" fill="#4a7cc0"/>
<path d="M695.6,217.6 L701.6,222.4 M701.6,217.6 L695.6,222.4" stroke="#5a2018" stroke-width="3.0" stroke-linecap="round"/>
<path d="M695.6,217.6 L701.6,222.4 M701.6,217.6 L695.6,222.4" stroke="#fff" stroke-width="1.7" stroke-linecap="round"/>
<text x="14.6" y="242.8" font-size="9.5" fill="#000">File</text>
<text x="43.4" y="242.8" font-size="9.5" fill="#000">Edit</text>
<text x="73.8" y="242.8" font-size="9.5" fill="#000">View</text>
<text x="107.5" y="242.8" font-size="9.5" fill="#000">Insert</text>
<text x="145.2" y="242.8" font-size="9.5" fill="#000">Tools</text>
<text x="182.5" y="242.8" font-size="9.5" fill="#000">Desktop</text>
<text x="230.6" y="242.8" font-size="9.5" fill="#000">Window</text>
<text x="281.5" y="242.8" font-size="9.5" fill="#000">Help</text>
<path d="M704,238 L705,238 M706,238.5 L709.2,241.7 L709.2,238.8 M709.2,241.7 L706.3,241.7" stroke="#000" stroke-width="1.6" fill="none"/>
<rect x="99.5" y="290.5" width="236" height="114" fill="#fff"/>
<polyline points="99.5,347.5 99.8,345.5 100.2,343.4 100.5,341.4 100.9,339.3 101.2,337.3 101.5,335.3 101.9,333.3 102.2,331.3 102.5,329.4 102.9,327.4 103.2,325.5 103.6,323.7 103.9,321.8 104.2,320.0 104.6,318.2 104.9,316.5 105.2,314.8 105.6,313.1 105.9,311.5 106.3,310.0 106.6,308.4 106.9,307.0 107.3,305.6 107.6,304.2 107.9,302.9 108.3,301.6 108.6,300.5 109.0,299.3 109.3,298.3 109.6,297.3 110.0,296.3 110.3,295.5 110.6,294.7 111.0,293.9 111.3,293.3 111.7,292.7 112.0,292.1 112.3,291.7 112.7,291.3 113.0,291.0 113.3,290.8 113.7,290.6 114.0,290.5 114.4,290.5 114.7,290.6 115.0,290.7 115.4,290.9 115.7,291.2 116.0,291.5 116.4,292.0 116.7,292.5 117.1,293.0 117.4,293.7 117.7,294.4 118.1,295.2 118.4,296.0 118.7,296.9 119.1,297.9 119.4,298.9 119.8,300.0 120.1,301.2 120.4,302.4 120.8,303.7 121.1,305.0 121.4,306.4 121.8,307.9 122.1,309.4 122.5,310.9 122.8,312.5 123.1,314.2 123.5,315.8 123.8,317.6 124.1,319.3 124.5,321.1 124.8,323.0 125.2,324.8 125.5,326.7 125.8,328.6 126.2,330.6 126.5,332.6 126.8,334.5 127.2,336.6 127.5,338.6 127.9,340.6 128.2,342.6 128.5,344.7 128.9,346.7 129.2,348.8 129.5,350.8 129.9,352.9 130.2,354.9 130.6,356.9 130.9,358.9 131.2,360.9 131.6,362.9 131.9,364.9 132.2,366.8 132.6,368.7 132.9,370.6 133.3,372.5 133.6,374.3 133.9,376.1 134.3,377.9 134.6,379.6 135.0,381.2 135.3,382.9 135.6,384.5 136.0,386.0 136.3,387.5 136.6,388.9 137.0,390.3 137.3,391.6 137.7,392.9 138.0,394.1 138.3,395.3 138.7,396.3 139.0,397.4 139.3,398.3 139.7,399.2 140.0,400.0 140.4,400.8 140.7,401.5 141.0,402.1 141.4,402.7 141.7,403.2 142.0,403.6 142.4,403.9 142.7,404.2 143.1,404.3 143.4,404.5 143.7,404.5 144.1,404.5 144.4,404.4 144.7,404.2 145.1,403.9 145.4,403.6 145.8,403.2 146.1,402.7 146.4,402.2 146.8,401.6 147.1,400.9 147.4,400.1 147.8,399.3 148.1,398.4 148.5,397.5 148.8,396.5 149.1,395.4 149.5,394.2 149.8,393.0 150.1,391.8 150.5,390.5 150.8,389.1 151.2,387.7 151.5,386.2 151.8,384.7 152.2,383.1 152.5,381.5 152.8,379.8 153.2,378.1 153.5,376.3 153.9,374.5 154.2,372.7 154.5,370.9 154.9,369.0 155.2,367.1 155.5,365.1 155.9,363.2 156.2,361.2 156.6,359.2 156.9,357.2 157.2,355.2 157.6,353.1 157.9,351.1 158.2,349.0 158.6,347.0 158.9,344.9 159.3,342.9 159.6,340.9 159.9,338.8 160.3,336.8 160.6,334.8 160.9,332.8 161.3,330.8 161.6,328.9 162.0,327.0 162.3,325.1 162.6,323.2 163.0,321.4 163.3,319.6 163.6,317.8 164.0,316.1 164.3,314.4 164.7,312.7 165.0,311.1 165.3,309.6 165.7,308.1 166.0,306.6 166.3,305.2 166.7,303.9 167.0,302.6 167.4,301.3 167.7,300.2 168.0,299.1 168.4,298.0 168.7,297.0 169.1,296.1 169.4,295.3 169.7,294.5 170.1,293.8 170.4,293.1 170.7,292.5 171.1,292.0 171.4,291.6 171.8,291.2 172.1,290.9 172.4,290.7 172.8,290.6 173.1,290.5 173.4,290.5 173.8,290.6 174.1,290.7 174.5,291.0 174.8,291.3 175.1,291.6 175.5,292.1 175.8,292.6 176.1,293.2 176.5,293.8 176.8,294.6 177.2,295.4 177.5,296.2 177.8,297.1 178.2,298.1 178.5,299.2 178.8,300.3 179.2,301.5 179.5,302.7 179.9,304.0 180.2,305.4 180.5,306.8 180.9,308.3 181.2,309.8 181.5,311.3 181.9,312.9 182.2,314.6 182.6,316.3 182.9,318.0 183.2,319.8 183.6,321.6 183.9,323.4 184.2,325.3 184.6,327.2 184.9,329.1 185.3,331.1 185.6,333.1 185.9,335.0 186.3,337.1 186.6,339.1 186.9,341.1 187.3,343.1 187.6,345.2 188.0,347.2 188.3,349.3 188.6,351.3 189.0,353.4 189.3,355.4 189.6,357.4 190.0,359.5 190.3,361.4 190.7,363.4 191.0,365.4 191.3,367.3 191.7,369.2 192.0,371.1 192.3,373.0 192.7,374.8 193.0,376.6 193.4,378.3 193.7,380.0 194.0,381.7 194.4,383.3 194.7,384.9 195.0,386.4 195.4,387.8 195.7,389.3 196.1,390.6 196.4,391.9 196.7,393.2 197.1,394.4 197.4,395.5 197.7,396.6 198.1,397.6 198.4,398.6 198.8,399.4 199.1,400.2 199.4,401.0 199.8,401.7 200.1,402.3 200.4,402.8 200.8,403.3 201.1,403.6 201.5,404.0 201.8,404.2 202.1,404.4 202.5,404.5 202.8,404.5 203.2,404.4 203.5,404.3 203.8,404.1 204.2,403.9 204.5,403.5 204.8,403.1 205.2,402.6 205.5,402.0 205.9,401.4 206.2,400.7 206.5,399.9 206.9,399.1 207.2,398.2 207.5,397.2 207.9,396.2 208.2,395.1 208.6,394.0 208.9,392.7 209.2,391.5 209.6,390.1 209.9,388.7 210.2,387.3 210.6,385.8 210.9,384.3 211.3,382.7 211.6,381.0 211.9,379.4 212.3,377.6 212.6,375.9 212.9,374.1 213.3,372.3 213.6,370.4 214.0,368.5 214.3,366.6 214.6,364.7 215.0,362.7 215.3,360.7 215.6,358.7 216.0,356.7 216.3,354.7 216.7,352.6 217.0,350.6 217.3,348.5 217.7,345.5 218.0,341.4 218.3,337.3 218.7,333.3 219.0,329.4 219.4,325.5 219.7,321.8 220.0,318.2 220.4,314.8 220.7,311.5 221.0,308.4 221.4,305.6 221.7,302.9 222.1,300.5 222.4,298.3 222.7,296.3 223.1,294.7 223.4,293.3 223.7,292.2 224.1,291.3 224.4,290.8 224.8,290.5 225.1,290.6 225.4,290.9 225.8,291.6 226.1,292.5 226.4,293.7 226.8,295.2 227.1,296.9 227.5,298.9 227.8,301.2 228.1,303.7 228.5,306.4 228.8,309.4 229.1,312.5 229.5,315.9 229.8,319.3 230.2,323.0 230.5,326.7 230.8,330.6 231.2,334.6 231.5,338.6 231.8,342.6 232.2,346.7 232.5,350.8 232.9,354.9 233.2,358.9 233.5,362.9 233.9,366.8 234.2,370.6 234.6,374.3 234.9,377.9 235.2,381.2 235.6,384.5 235.9,387.5 236.2,390.3 236.6,392.9 236.9,395.2 237.3,397.4 237.6,399.2 237.9,400.8 238.3,402.1 238.6,403.1 238.9,403.9 239.3,404.3 239.6,404.5 240.0,404.4 240.3,403.9 240.6,403.2 241.0,402.2 241.3,400.9 241.6,399.3 242.0,397.5 242.3,395.4 242.7,393.0 243.0,390.5 243.3,387.7 243.7,384.7 244.0,381.4 244.3,378.1 244.7,374.5 245.0,370.9 245.4,367.1 245.7,363.2 246.0,359.2 246.4,355.2 246.7,351.1 247.0,347.0 247.4,342.9 247.7,338.8 248.1,334.8 248.4,330.8 248.7,327.0 249.1,323.2 249.4,319.6 249.7,316.1 250.1,312.7 250.4,309.6 250.8,306.6 251.1,303.9 251.4,301.4 251.8,299.1 252.1,297.0 252.4,295.3 252.8,293.8 253.1,292.5 253.5,291.6 253.8,290.9 254.1,290.6 254.5,290.5 254.8,290.8 255.1,291.3 255.5,292.1 255.8,293.2 256.2,294.6 256.5,296.2 256.8,298.1 257.2,300.3 257.5,302.7 257.8,305.4 258.2,308.3 258.5,311.3 258.9,314.6 259.2,318.0 259.5,321.6 259.9,325.3 260.2,329.1 260.5,333.1 260.9,337.1 261.2,341.1 261.6,345.2 261.9,349.3 262.2,353.4 262.6,357.4 262.9,361.4 263.2,365.4 263.6,369.2 263.9,372.9 264.3,376.5 264.6,380.0 264.9,383.3 265.3,386.4 265.6,389.3 265.9,391.9 266.3,394.4 266.6,396.6 267.0,398.6 267.3,400.2 267.6,401.7 268.0,402.8 268.3,403.6 268.7,404.2 269.0,404.5 269.3,404.4 269.7,404.1 270.0,403.5 270.3,402.6 270.7,401.4 271.0,399.9 271.4,398.2 271.7,396.2 272.0,394.0 272.4,391.5 272.7,388.7 273.0,385.8 273.4,382.7 273.7,379.4 274.1,375.9 274.4,372.3 274.7,368.5 275.1,364.6 275.4,360.7 275.7,356.7 276.1,352.6 276.4,348.5 276.8,344.4 277.1,340.3 277.4,336.3 277.8,332.3 278.1,328.4 278.4,324.6 278.8,320.9 279.1,317.4 279.5,314.0 279.8,310.7 280.1,307.7 280.5,304.9 280.8,302.3 281.1,299.9 281.5,297.8 281.8,295.9 282.2,294.3 282.5,293.0 282.8,291.9 283.2,291.2 283.5,290.7 283.8,290.5 284.2,290.6 284.5,291.0 284.9,291.8 285.2,292.7 285.5,294.0 285.9,295.6 286.2,297.4 286.5,299.5 286.9,301.8 287.2,304.4 287.6,307.2 287.9,310.2 288.2,313.3 288.6,316.7 288.9,320.2 289.2,323.9 289.6,327.7 289.9,331.6 290.3,335.6 290.6,339.6 290.9,343.7 291.3,347.8 291.6,351.8 291.9,355.9 292.3,359.9 292.6,363.9 293.0,367.8 293.3,371.6 293.6,375.2 294.0,378.7 294.3,382.1 294.6,385.2 295.0,388.2 295.3,391.0 295.7,393.5 296.0,395.8 296.3,397.8 296.7,399.6 297.0,401.2 297.3,402.4 297.7,403.4 298.0,404.0 298.4,404.4 298.7,404.5 299.0,404.3 299.4,403.8 299.7,403.0 300.0,401.9 300.4,400.5 300.7,398.9 301.1,397.0 301.4,394.8 301.7,392.4 302.1,389.8 302.4,386.9 302.8,383.9 303.1,380.6 303.4,377.2 303.8,373.6 304.1,369.9 304.4,366.1 304.8,362.2 305.1,358.2 305.5,354.1 305.8,350.1 306.1,346.0 306.5,341.9 306.8,337.8 307.1,333.8 307.5,329.9 307.8,326.0 308.2,322.3 308.5,318.7 308.8,315.2 309.2,311.9 309.5,308.8 309.8,305.9 310.2,303.2 310.5,300.8 310.9,298.5 311.2,296.6 311.5,294.9 311.9,293.4 312.2,292.3 312.5,291.4 312.9,290.8 313.2,290.5 313.6,290.5 313.9,290.9 314.2,291.5 314.6,292.3 314.9,293.5 315.2,295.0 315.6,296.7 315.9,298.7 316.3,300.9 316.6,303.4 316.9,306.1 317.3,309.0 317.6,312.1 317.9,315.4 318.3,318.9 318.6,322.5 319.0,326.3 319.3,330.1 319.6,334.1 320.0,338.1 320.3,342.1 320.6,346.2 321.0,350.3 321.3,354.4 321.7,358.4 322.0,362.4 322.3,366.4 322.7,370.2 323.0,373.9 323.3,377.4 323.7,380.8 324.0,384.1 324.4,387.1 324.7,390.0 325.0,392.6 325.4,395.0 325.7,397.1 326.0,399.0 326.4,400.6 326.7,402.0 327.1,403.0 327.4,403.8 327.7,404.3 328.1,404.5 328.4,404.4 328.7,404.0 329.1,403.3 329.4,402.3 329.8,401.1 330.1,399.5 330.4,397.7 330.8,395.7 331.1,393.4 331.4,390.8 331.8,388.0 332.1,385.0 332.5,381.9 332.8,378.5 333.1,375.0 333.5,371.3 333.8,367.6 334.1,363.7 334.5,359.7 334.8,355.7 335.2,351.6 335.5,347.5" fill="none" stroke="#f00" stroke-width="1" shape-rendering="crispEdges"/>
<line x1="99.5" y1="290.5" x2="335.5" y2="290.5" stroke="#000" stroke-width="1" stroke-opacity="0.6"/>
<line x1="99.5" y1="290.5" x2="99.5" y2="404.5" stroke="#000" stroke-width="1" stroke-opacity="0.6"/>
<line x1="335.5" y1="290" x2="335.5" y2="405" stroke="#000" stroke-width="1" />
<line x1="99" y1="404.5" x2="336" y2="404.5" stroke="#000" stroke-width="1" />
<line x1="146.5" y1="290.5" x2="146.5" y2="293" stroke="#000" stroke-width="1" />
<line x1="146.5" y1="404.5" x2="146.5" y2="402" stroke="#000" stroke-width="1" />
<line x1="193.5" y1="290.5" x2="193.5" y2="293" stroke="#000" stroke-width="1" />
<line x1="193.5" y1="404.5" x2="193.5" y2="402" stroke="#000" stroke-width="1" />
<line x1="240.5" y1="290.5" x2="240.5" y2="293" stroke="#000" stroke-width="1" />
<line x1="240.5" y1="404.5" x2="240.5" y2="402" stroke="#000" stroke-width="1" />
<line x1="287.5" y1="290.5" x2="287.5" y2="293" stroke="#000" stroke-width="1" />
<line x1="287.5" y1="404.5" x2="287.5" y2="402" stroke="#000" stroke-width="1" />
<line x1="99.5" y1="319.5" x2="102" y2="319.5" stroke="#000" stroke-width="1" />
<line x1="335.5" y1="319.5" x2="333" y2="319.5" stroke="#000" stroke-width="1" />
<line x1="99.5" y1="347.5" x2="102" y2="347.5" stroke="#000" stroke-width="1" />
<line x1="335.5" y1="347.5" x2="333" y2="347.5" stroke="#000" stroke-width="1" />
<line x1="99.5" y1="375.5" x2="102" y2="375.5" stroke="#000" stroke-width="1" />
<line x1="335.5" y1="375.5" x2="333" y2="375.5" stroke="#000" stroke-width="1" />
<text transform="translate(99.20 417.00) scale(0.95 1)" font-size="10.8" text-anchor="middle">0</text>
<text transform="translate(146.40 417.00) scale(0.95 1)" font-size="10.8" text-anchor="middle">0.2</text>
<text transform="translate(193.60 417.00) scale(0.95 1)" font-size="10.8" text-anchor="middle">0.4</text>
<text transform="translate(240.80 417.00) scale(0.95 1)" font-size="10.8" text-anchor="middle">0.6</text>
<text transform="translate(288.00 417.00) scale(0.95 1)" font-size="10.8" text-anchor="middle">0.8</text>
<text transform="translate(335.20 417.00) scale(0.95 1)" font-size="10.8" text-anchor="middle">1</text>
<text transform="translate(95.40 323.00) scale(0.95 1)" font-size="11" text-anchor="end">0.5</text>
<text transform="translate(95.40 351.00) scale(0.95 1)" font-size="11" text-anchor="end">0</text>
<text transform="translate(95.40 379.00) scale(0.95 1)" font-size="11" text-anchor="end">-0.5</text>
<text transform="translate(217.50 282.00)" font-size="10.8" text-anchor="middle">Analyzed signal</text>
<rect x="410.5" y="290.5" width="236" height="114" fill="#fff"/>
<polyline points="410.5,347.5 410.8,345.5 411.2,343.4 411.5,341.4 411.9,339.3 412.2,337.3 412.5,335.3 412.9,333.3 413.2,331.3 413.5,329.4 413.9,327.4 414.2,325.5 414.6,323.7 414.9,321.8 415.2,320.0 415.6,318.2 415.9,316.5 416.2,314.8 416.6,313.1 416.9,311.5 417.3,310.0 417.6,308.4 417.9,307.0 418.3,305.6 418.6,304.2 418.9,302.9 419.3,301.6 419.6,300.5 420.0,299.3 420.3,298.3 420.6,297.3 421.0,296.3 421.3,295.5 421.6,294.7 422.0,293.9 422.3,293.3 422.7,292.7 423.0,292.1 423.3,291.7 423.7,291.3 424.0,291.0 424.3,290.8 424.7,290.6 425.0,290.5 425.4,290.5 425.7,290.6 426.0,290.7 426.4,290.9 426.7,291.2 427.0,291.5 427.4,292.0 427.7,292.5 428.1,293.0 428.4,293.7 428.7,294.4 429.1,295.2 429.4,296.0 429.7,296.9 430.1,297.9 430.4,298.9 430.8,300.0 431.1,301.2 431.4,302.4 431.8,303.7 432.1,305.0 432.4,306.4 432.8,307.9 433.1,309.4 433.5,310.9 433.8,312.5 434.1,314.2 434.5,315.8 434.8,317.6 435.1,319.3 435.5,321.1 435.8,323.0 436.2,324.8 436.5,326.7 436.8,328.6 437.2,330.6 437.5,332.6 437.8,334.5 438.2,336.6 438.5,338.6 438.9,340.6 439.2,342.6 439.5,344.7 439.9,346.7 440.2,348.8 440.5,350.8 440.9,352.9 441.2,354.9 441.6,356.9 441.9,358.9 442.2,360.9 442.6,362.9 442.9,364.9 443.2,366.8 443.6,368.7 443.9,370.6 444.3,372.5 444.6,374.3 444.9,376.1 445.3,377.9 445.6,379.6 446.0,381.2 446.3,382.9 446.6,384.5 447.0,386.0 447.3,387.5 447.6,388.9 448.0,390.3 448.3,391.6 448.7,392.9 449.0,394.1 449.3,395.3 449.7,396.3 450.0,397.4 450.3,398.3 450.7,399.2 451.0,400.0 451.4,400.8 451.7,401.5 452.0,402.1 452.4,402.7 452.7,403.2 453.0,403.6 453.4,403.9 453.7,404.2 454.1,404.3 454.4,404.5 454.7,404.5 455.1,404.5 455.4,404.4 455.7,404.2 456.1,403.9 456.4,403.6 456.8,403.2 457.1,402.7 457.4,402.2 457.8,401.6 458.1,400.9 458.4,400.1 458.8,399.3 459.1,398.4 459.5,397.5 459.8,396.5 460.1,395.4 460.5,394.2 460.8,393.0 461.1,391.8 461.5,390.5 461.8,389.1 462.2,387.7 462.5,386.2 462.8,384.7 463.2,383.1 463.5,381.5 463.8,379.8 464.2,378.1 464.5,376.3 464.9,374.5 465.2,372.7 465.5,370.9 465.9,369.0 466.2,367.1 466.5,365.1 466.9,363.2 467.2,361.2 467.6,359.2 467.9,357.2 468.2,355.2 468.6,353.1 468.9,351.1 469.2,349.0 469.6,347.0 469.9,344.9 470.3,342.9 470.6,340.9 470.9,338.8 471.3,336.8 471.6,334.8 471.9,332.8 472.3,330.8 472.6,328.9 473.0,327.0 473.3,325.1 473.6,323.2 474.0,321.4 474.3,319.6 474.6,317.8 475.0,316.1 475.3,314.4 475.7,312.7 476.0,311.1 476.3,309.6 476.7,308.1 477.0,306.6 477.3,305.2 477.7,303.9 478.0,302.6 478.4,301.3 478.7,300.2 479.0,299.1 479.4,298.0 479.7,297.0 480.1,296.1 480.4,295.3 480.7,294.5 481.1,293.8 481.4,293.1 481.7,292.5 482.1,292.0 482.4,291.6 482.8,291.2 483.1,290.9 483.4,290.7 483.8,290.6 484.1,290.5 484.4,290.5 484.8,290.6 485.1,290.7 485.5,291.0 485.8,291.3 486.1,291.6 486.5,292.1 486.8,292.6 487.1,293.2 487.5,293.8 487.8,294.6 488.2,295.4 488.5,296.2 488.8,297.1 489.2,298.1 489.5,299.2 489.8,300.3 490.2,301.5 490.5,302.7 490.9,304.0 491.2,305.4 491.5,306.8 491.9,308.3 492.2,309.8 492.5,311.3 492.9,312.9 493.2,314.6 493.6,316.3 493.9,318.0 494.2,319.8 494.6,321.6 494.9,323.4 495.2,325.3 495.6,327.2 495.9,329.1 496.3,331.1 496.6,333.1 496.9,335.0 497.3,337.1 497.6,339.1 497.9,341.1 498.3,343.1 498.6,345.2 499.0,347.2 499.3,349.3 499.6,351.3 500.0,353.4 500.3,355.4 500.6,357.4 501.0,359.5 501.3,361.4 501.7,363.4 502.0,365.4 502.3,367.3 502.7,369.2 503.0,371.1 503.3,373.0 503.7,374.8 504.0,376.6 504.4,378.3 504.7,380.0 505.0,381.7 505.4,383.3 505.7,384.9 506.0,386.4 506.4,387.8 506.7,389.3 507.1,390.6 507.4,391.9 507.7,393.2 508.1,394.4 508.4,395.5 508.7,396.6 509.1,397.6 509.4,398.6 509.8,399.4 510.1,400.2 510.4,401.0 510.8,401.7 511.1,402.3 511.4,402.8 511.8,403.3 512.1,403.6 512.5,404.0 512.8,404.2 513.1,404.4 513.5,404.5 513.8,404.5 514.2,404.4 514.5,404.3 514.8,404.1 515.2,403.9 515.5,403.5 515.8,403.1 516.2,402.6 516.5,402.0 516.9,401.4 517.2,400.7 517.5,399.9 517.9,399.1 518.2,398.2 518.5,397.2 518.9,396.2 519.2,395.1 519.6,394.0 519.9,392.7 520.2,391.5 520.6,390.1 520.9,388.7 521.2,387.3 521.6,385.8 521.9,384.3 522.3,382.7 522.6,381.0 522.9,379.4 523.3,377.6 523.6,375.9 523.9,374.1 524.3,372.3 524.6,370.4 525.0,368.5 525.3,366.6 525.6,364.7 526.0,362.7 526.3,360.7 526.6,358.7 527.0,356.7 527.3,354.7 527.7,352.6 528.0,350.6 528.3,348.5 528.7,345.5 529.0,341.4 529.3,337.3 529.7,333.3 530.0,329.4 530.4,325.5 530.7,321.8 531.0,318.2 531.4,314.8 531.7,311.5 532.0,308.4 532.4,305.6 532.7,302.9 533.1,300.5 533.4,298.3 533.7,296.3 534.1,294.7 534.4,293.3 534.7,292.2 535.1,291.3 535.4,290.8 535.8,290.5 536.1,290.6 536.4,290.9 536.8,291.6 537.1,292.5 537.4,293.7 537.8,295.2 538.1,296.9 538.5,298.9 538.8,301.2 539.1,303.7 539.5,306.4 539.8,309.4 540.1,312.5 540.5,315.9 540.8,319.3 541.2,323.0 541.5,326.7 541.8,330.6 542.2,334.6 542.5,338.6 542.8,342.6 543.2,346.7 543.5,350.8 543.9,354.9 544.2,358.9 544.5,362.9 544.9,366.8 545.2,370.6 545.6,374.3 545.9,377.9 546.2,381.2 546.6,384.5 546.9,387.5 547.2,390.3 547.6,392.9 547.9,395.2 548.3,397.4 548.6,399.2 548.9,400.8 549.3,402.1 549.6,403.1 549.9,403.9 550.3,404.3 550.6,404.5 551.0,404.4 551.3,403.9 551.6,403.2 552.0,402.2 552.3,400.9 552.6,399.3 553.0,397.5 553.3,395.4 553.7,393.0 554.0,390.5 554.3,387.7 554.7,384.7 555.0,381.4 555.3,378.1 555.7,374.5 556.0,370.9 556.4,367.1 556.7,363.2 557.0,359.2 557.4,355.2 557.7,351.1 558.0,347.0 558.4,342.9 558.7,338.8 559.1,334.8 559.4,330.8 559.7,327.0 560.1,323.2 560.4,319.6 560.7,316.1 561.1,312.7 561.4,309.6 561.8,306.6 562.1,303.9 562.4,301.4 562.8,299.1 563.1,297.0 563.4,295.3 563.8,293.8 564.1,292.5 564.5,291.6 564.8,290.9 565.1,290.6 565.5,290.5 565.8,290.8 566.1,291.3 566.5,292.1 566.8,293.2 567.2,294.6 567.5,296.2 567.8,298.1 568.2,300.3 568.5,302.7 568.8,305.4 569.2,308.3 569.5,311.3 569.9,314.6 570.2,318.0 570.5,321.6 570.9,325.3 571.2,329.1 571.5,333.1 571.9,337.1 572.2,341.1 572.6,345.2 572.9,349.3 573.2,353.4 573.6,357.4 573.9,361.4 574.2,365.4 574.6,369.2 574.9,372.9 575.3,376.5 575.6,380.0 575.9,383.3 576.3,386.4 576.6,389.3 576.9,391.9 577.3,394.4 577.6,396.6 578.0,398.6 578.3,400.2 578.6,401.7 579.0,402.8 579.3,403.6 579.7,404.2 580.0,404.5 580.3,404.4 580.7,404.1 581.0,403.5 581.3,402.6 581.7,401.4 582.0,399.9 582.4,398.2 582.7,396.2 583.0,394.0 583.4,391.5 583.7,388.7 584.0,385.8 584.4,382.7 584.7,379.4 585.1,375.9 585.4,372.3 585.7,368.5 586.1,364.6 586.4,360.7 586.7,356.7 587.1,352.6 587.4,348.5 587.8,344.4 588.1,340.3 588.4,336.3 588.8,332.3 589.1,328.4 589.4,324.6 589.8,320.9 590.1,317.4 590.5,314.0 590.8,310.7 591.1,307.7 591.5,304.9 591.8,302.3 592.1,299.9 592.5,297.8 592.8,295.9 593.2,294.3 593.5,293.0 593.8,291.9 594.2,291.2 594.5,290.7 594.8,290.5 595.2,290.6 595.5,291.0 595.9,291.8 596.2,292.7 596.5,294.0 596.9,295.6 597.2,297.4 597.5,299.5 597.9,301.8 598.2,304.4 598.6,307.2 598.9,310.2 599.2,313.3 599.6,316.7 599.9,320.2 600.2,323.9 600.6,327.7 600.9,331.6 601.3,335.6 601.6,339.6 601.9,343.7 602.3,347.8 602.6,351.8 602.9,355.9 603.3,359.9 603.6,363.9 604.0,367.8 604.3,371.6 604.6,375.2 605.0,378.7 605.3,382.1 605.6,385.2 606.0,388.2 606.3,391.0 606.7,393.5 607.0,395.8 607.3,397.8 607.7,399.6 608.0,401.2 608.3,402.4 608.7,403.4 609.0,404.0 609.4,404.4 609.7,404.5 610.0,404.3 610.4,403.8 610.7,403.0 611.0,401.9 611.4,400.5 611.7,398.9 612.1,397.0 612.4,394.8 612.7,392.4 613.1,389.8 613.4,386.9 613.8,383.9 614.1,380.6 614.4,377.2 614.8,373.6 615.1,369.9 615.4,366.1 615.8,362.2 616.1,358.2 616.5,354.1 616.8,350.1 617.1,346.0 617.5,341.9 617.8,337.8 618.1,333.8 618.5,329.9 618.8,326.0 619.2,322.3 619.5,318.7 619.8,315.2 620.2,311.9 620.5,308.8 620.8,305.9 621.2,303.2 621.5,300.8 621.9,298.5 622.2,296.6 622.5,294.9 622.9,293.4 623.2,292.3 623.5,291.4 623.9,290.8 624.2,290.5 624.6,290.5 624.9,290.9 625.2,291.5 625.6,292.3 625.9,293.5 626.2,295.0 626.6,296.7 626.9,298.7 627.3,300.9 627.6,303.4 627.9,306.1 628.3,309.0 628.6,312.1 628.9,315.4 629.3,318.9 629.6,322.5 630.0,326.3 630.3,330.1 630.6,334.1 631.0,338.1 631.3,342.1 631.6,346.2 632.0,350.3 632.3,354.4 632.7,358.4 633.0,362.4 633.3,366.4 633.7,370.2 634.0,373.9 634.3,377.4 634.7,380.8 635.0,384.1 635.4,387.1 635.7,390.0 636.0,392.6 636.4,395.0 636.7,397.1 637.0,399.0 637.4,400.6 637.7,402.0 638.1,403.0 638.4,403.8 638.7,404.3 639.1,404.5 639.4,404.4 639.7,404.0 640.1,403.3 640.4,402.3 640.8,401.1 641.1,399.5 641.4,397.7 641.8,395.7 642.1,393.4 642.4,390.8 642.8,388.0 643.1,385.0 643.5,381.9 643.8,378.5 644.1,375.0 644.5,371.3 644.8,367.6 645.1,363.7 645.5,359.7 645.8,355.7 646.2,351.6 646.5,347.5" fill="none" stroke="#f00" stroke-width="1" shape-rendering="crispEdges"/>
<line x1="410.5" y1="290.5" x2="646.5" y2="290.5" stroke="#000" stroke-width="1" stroke-opacity="0.6"/>
<line x1="410.5" y1="290.5" x2="410.5" y2="404.5" stroke="#000" stroke-width="1" stroke-opacity="0.6"/>
<line x1="646.5" y1="290" x2="646.5" y2="405" stroke="#000" stroke-width="1" />
<line x1="410" y1="404.5" x2="647" y2="404.5" stroke="#000" stroke-width="1" />
<line x1="457.5" y1="290.5" x2="457.5" y2="293" stroke="#000" stroke-width="1" />
<line x1="457.5" y1="404.5" x2="457.5" y2="402" stroke="#000" stroke-width="1" />
<line x1="504.5" y1="290.5" x2="504.5" y2="293" stroke="#000" stroke-width="1" />
<line x1="504.5" y1="404.5" x2="504.5" y2="402" stroke="#000" stroke-width="1" />
<line x1="551.5" y1="290.5" x2="551.5" y2="293" stroke="#000" stroke-width="1" />
<line x1="551.5" y1="404.5" x2="551.5" y2="402" stroke="#000" stroke-width="1" />
<line x1="598.5" y1="290.5" x2="598.5" y2="293" stroke="#000" stroke-width="1" />
<line x1="598.5" y1="404.5" x2="598.5" y2="402" stroke="#000" stroke-width="1" />
<line x1="410.5" y1="319.5" x2="413" y2="319.5" stroke="#000" stroke-width="1" />
<line x1="646.5" y1="319.5" x2="644" y2="319.5" stroke="#000" stroke-width="1" />
<line x1="410.5" y1="347.5" x2="413" y2="347.5" stroke="#000" stroke-width="1" />
<line x1="646.5" y1="347.5" x2="644" y2="347.5" stroke="#000" stroke-width="1" />
<line x1="410.5" y1="375.5" x2="413" y2="375.5" stroke="#000" stroke-width="1" />
<line x1="646.5" y1="375.5" x2="644" y2="375.5" stroke="#000" stroke-width="1" />
<text transform="translate(410.20 417.00) scale(0.95 1)" font-size="10.8" text-anchor="middle">0</text>
<text transform="translate(457.40 417.00) scale(0.95 1)" font-size="10.8" text-anchor="middle">0.2</text>
<text transform="translate(504.60 417.00) scale(0.95 1)" font-size="10.8" text-anchor="middle">0.4</text>
<text transform="translate(551.80 417.00) scale(0.95 1)" font-size="10.8" text-anchor="middle">0.6</text>
<text transform="translate(599.00 417.00) scale(0.95 1)" font-size="10.8" text-anchor="middle">0.8</text>
<text transform="translate(646.20 417.00) scale(0.95 1)" font-size="10.8" text-anchor="middle">1</text>
<text transform="translate(406.40 323.00) scale(0.95 1)" font-size="11" text-anchor="end">0.5</text>
<text transform="translate(406.40 351.00) scale(0.95 1)" font-size="11" text-anchor="end">0</text>
<text transform="translate(406.40 379.00) scale(0.95 1)" font-size="11" text-anchor="end">-0.5</text>
<text transform="translate(528.50 282.00)" font-size="10.8" text-anchor="middle">Analyzed signal</text>
<text transform="translate(374.00 444.70)" font-size="10.9" text-anchor="middle" font-weight="bold">'Continuous Wavelet Transform (CWT)'</text>
<line x1="99.5" y1="570.5" x2="335" y2="570.5" stroke="#000" stroke-width="1" stroke-dasharray="2.8 2.15"/>
<line x1="99.5" y1="570.5" x2="335" y2="570.5" stroke="#000" stroke-width="1" stroke-dasharray="2.8 2.15"/>
<line x1="99.5" y1="570.5" x2="335" y2="570.5" stroke="#000" stroke-width="1" stroke-dasharray="2.8 2.15"/>
<line x1="99.5" y1="570.5" x2="335" y2="570.5" stroke="#000" stroke-width="1" stroke-dasharray="2.8 2.15"/>
<line x1="99.5" y1="569.5" x2="335" y2="569.5" stroke="#000" stroke-width="1" stroke-dasharray="2.8 2.15"/>
<line x1="99.5" y1="568.5" x2="335" y2="568.5" stroke="#000" stroke-width="1" stroke-dasharray="2.8 2.15"/>
<line x1="99.5" y1="566.5" x2="335" y2="566.5" stroke="#000" stroke-width="1" stroke-dasharray="2.8 2.15"/>
<line x1="99.5" y1="564.5" x2="335" y2="564.5" stroke="#000" stroke-width="1" stroke-dasharray="2.8 2.15" stroke-opacity="0.55"/>
<line x1="99.5" y1="562.5" x2="335" y2="562.5" stroke="#000" stroke-width="1" stroke-dasharray="2.8 2.15"/>
<line x1="99.5" y1="559.5" x2="335" y2="559.5" stroke="#000" stroke-width="1" stroke-dasharray="2.8 2.15" stroke-opacity="0.75"/>
<line x1="99.5" y1="554.5" x2="335" y2="554.5" stroke="#000" stroke-width="1" stroke-dasharray="2.8 2.15"/>
<line x1="99.5" y1="546.5" x2="335" y2="546.5" stroke="#000" stroke-width="1" stroke-dasharray="2.8 2.15"/>
<line x1="99.5" y1="536.5" x2="335" y2="536.5" stroke="#000" stroke-width="1" stroke-dasharray="2.8 2.15"/>
<line x1="99.5" y1="522.5" x2="335" y2="522.5" stroke="#000" stroke-width="1" stroke-dasharray="2.8 2.15"/>
<line x1="99.5" y1="502.5" x2="335" y2="502.5" stroke="#000" stroke-width="1" stroke-dasharray="2.8 2.15"/>
<line x1="99.5" y1="474.5" x2="335" y2="474.5" stroke="#000" stroke-width="1" stroke-dasharray="2.8 2.15"/>
<line x1="99.5" y1="458.5" x2="335.5" y2="458.5" stroke="#000" stroke-width="1" stroke-opacity="0.6"/>
<line x1="99.5" y1="458.5" x2="99.5" y2="571.5" stroke="#000" stroke-width="1" stroke-opacity="0.5"/>
<line x1="335.5" y1="458" x2="335.5" y2="572" stroke="#000" stroke-width="1" />
<line x1="99" y1="571.5" x2="336" y2="571.5" stroke="#000" stroke-width="1" />
<line x1="146.5" y1="458.5" x2="146.5" y2="461" stroke="#000" stroke-width="1" />
<line x1="193.5" y1="458.5" x2="193.5" y2="461" stroke="#000" stroke-width="1" />
<line x1="240.5" y1="458.5" x2="240.5" y2="461" stroke="#000" stroke-width="1" />
<line x1="287.5" y1="458.5" x2="287.5" y2="461" stroke="#000" stroke-width="1" />
<text transform="translate(99.20 583.60) scale(0.95 1)" font-size="10.4" text-anchor="middle">0</text>
<text transform="translate(146.40 583.60) scale(0.95 1)" font-size="10.4" text-anchor="middle">0.2</text>
<text transform="translate(193.60 583.60) scale(0.95 1)" font-size="10.4" text-anchor="middle">0.4</text>
<text transform="translate(240.80 583.60) scale(0.95 1)" font-size="10.4" text-anchor="middle">0.6</text>
<text transform="translate(288.00 583.60) scale(0.95 1)" font-size="10.4" text-anchor="middle">0.8</text>
<text transform="translate(335.20 583.60) scale(0.95 1)" font-size="10.4" text-anchor="middle">1</text>
<text transform="translate(95.00 477.69) scale(0.92 1)" font-size="10.3" text-anchor="end">1.416</text>
<text transform="translate(95.00 506.06) scale(0.92 1)" font-size="10.3" text-anchor="end">1.001</text>
<text transform="translate(95.00 526.12) scale(0.92 1)" font-size="10.3" text-anchor="end">0.708</text>
<text transform="translate(95.00 540.31) scale(0.92 1)" font-size="10.3" text-anchor="end">0.500</text>
<text transform="translate(95.00 550.34) scale(0.92 1)" font-size="10.3" text-anchor="end">0.354</text>
<text transform="translate(95.00 557.43) scale(0.92 1)" font-size="10.3" text-anchor="end">0.250</text>
<text transform="translate(63.20 514.80) rotate(-90)" font-size="10.2" text-anchor="middle">Scale Power</text>
<text transform="translate(216.50 597.50)" font-size="10.6" text-anchor="middle">Modulus</text>
<rect x="343" y="473" width="10" height="92" fill="url(#jet)"/>
<rect x="343.5" y="473.5" width="9" height="91" fill="none" stroke="#000" stroke-opacity="0.45"/>
<line x1="343" y1="491.5" x2="344.5" y2="491.5" stroke="#000" stroke-width="1" />
<line x1="353" y1="491.5" x2="351.5" y2="491.5" stroke="#000" stroke-width="1" />
<text transform="translate(355.40 494.60) scale(0.88 1)" font-size="10.6">8</text>
<line x1="343" y1="509.5" x2="344.5" y2="509.5" stroke="#000" stroke-width="1" />
<line x1="353" y1="509.5" x2="351.5" y2="509.5" stroke="#000" stroke-width="1" />
<text transform="translate(355.40 512.60) scale(0.88 1)" font-size="10.6">6</text>
<line x1="343" y1="527.5" x2="344.5" y2="527.5" stroke="#000" stroke-width="1" />
<line x1="353" y1="527.5" x2="351.5" y2="527.5" stroke="#000" stroke-width="1" />
<text transform="translate(355.40 530.60) scale(0.88 1)" font-size="10.6">4</text>
<line x1="343" y1="545.5" x2="344.5" y2="545.5" stroke="#000" stroke-width="1" />
<line x1="353" y1="545.5" x2="351.5" y2="545.5" stroke="#000" stroke-width="1" />
<text transform="translate(355.40 548.60) scale(0.88 1)" font-size="10.6">2</text>
<line x1="99.5" y1="716.5" x2="335" y2="716.5" stroke="#000" stroke-width="1" stroke-dasharray="2.8 2.15"/>
<line x1="99.5" y1="716.5" x2="335" y2="716.5" stroke="#000" stroke-width="1" stroke-dasharray="2.8 2.15"/>
<line x1="99.5" y1="716.5" x2="335" y2="716.5" stroke="#000" stroke-width="1" stroke-dasharray="2.8 2.15"/>
<line x1="99.5" y1="716.5" x2="335" y2="716.5" stroke="#000" stroke-width="1" stroke-dasharray="2.8 2.15"/>
<line x1="99.5" y1="715.5" x2="335" y2="715.5" stroke="#000" stroke-width="1" stroke-dasharray="2.8 2.15"/>
<line x1="99.5" y1="714.5" x2="335" y2="714.5" stroke="#000" stroke-width="1" stroke-dasharray="2.8 2.15"/>
<line x1="99.5" y1="712.5" x2="335" y2="712.5" stroke="#000" stroke-width="1" stroke-dasharray="2.8 2.15"/>
<line x1="99.5" y1="710.5" x2="335" y2="710.5" stroke="#000" stroke-width="1" stroke-dasharray="2.8 2.15"/>
<line x1="99.5" y1="708.5" x2="335" y2="708.5" stroke="#000" stroke-width="1" stroke-dasharray="2.8 2.15" stroke-opacity="0.6"/>
<line x1="99.5" y1="704.5" x2="335" y2="704.5" stroke="#000" stroke-width="1" stroke-dasharray="2.8 2.15" stroke-opacity="0.6"/>
<line x1="99.5" y1="699.5" x2="335" y2="699.5" stroke="#000" stroke-width="1" stroke-dasharray="2.8 2.15" stroke-opacity="0.6"/>
<line x1="99.5" y1="692.5" x2="335" y2="692.5" stroke="#000" stroke-width="1" stroke-dasharray="2.8 2.15"/>
<line x1="99.5" y1="682.5" x2="335" y2="682.5" stroke="#000" stroke-width="1" stroke-dasharray="2.8 2.15"/>
<line x1="99.5" y1="669.5" x2="335" y2="669.5" stroke="#000" stroke-width="1" stroke-dasharray="2.8 2.15"/>
<line x1="99.5" y1="649.5" x2="335" y2="649.5" stroke="#000" stroke-width="1" stroke-dasharray="2.8 2.15"/>
<line x1="99.5" y1="621.5" x2="335" y2="621.5" stroke="#000" stroke-width="1" stroke-dasharray="2.8 2.15"/>
<line x1="99.5" y1="604.5" x2="335.5" y2="604.5" stroke="#000" stroke-width="1" />
<line x1="99.5" y1="604.5" x2="99.5" y2="717.5" stroke="#000" stroke-width="1" stroke-opacity="0.5"/>
<line x1="335.5" y1="604" x2="335.5" y2="718" stroke="#000" stroke-width="1" />
<line x1="99" y1="717.5" x2="336" y2="717.5" stroke="#000" stroke-width="1" />
<line x1="146.5" y1="604.5" x2="146.5" y2="607" stroke="#000" stroke-width="1" />
<line x1="193.5" y1="604.5" x2="193.5" y2="607" stroke="#000" stroke-width="1" />
<line x1="240.5" y1="604.5" x2="240.5" y2="607" stroke="#000" stroke-width="1" />
<line x1="287.5" y1="604.5" x2="287.5" y2="607" stroke="#000" stroke-width="1" />
<text transform="translate(99.20 729.00) scale(0.95 1)" font-size="10.0" text-anchor="middle">0</text>
<text transform="translate(146.40 729.00) scale(0.95 1)" font-size="10.0" text-anchor="middle">0.2</text>
<text transform="translate(193.60 729.00) scale(0.95 1)" font-size="10.0" text-anchor="middle">0.4</text>
<text transform="translate(240.80 729.00) scale(0.95 1)" font-size="10.0" text-anchor="middle">0.6</text>
<text transform="translate(288.00 729.00) scale(0.95 1)" font-size="10.0" text-anchor="middle">0.8</text>
<text transform="translate(335.20 729.00) scale(0.95 1)" font-size="10.0" text-anchor="middle">1</text>
<text transform="translate(95.00 625.10) scale(0.92 1)" font-size="10.3" text-anchor="end">1.416</text>
<text transform="translate(95.00 652.91) scale(0.92 1)" font-size="10.3" text-anchor="end">1.001</text>
<text transform="translate(95.00 672.58) scale(0.92 1)" font-size="10.3" text-anchor="end">0.708</text>
<text transform="translate(95.00 686.49) scale(0.92 1)" font-size="10.3" text-anchor="end">0.500</text>
<text transform="translate(95.00 696.32) scale(0.92 1)" font-size="10.3" text-anchor="end">0.354</text>
<text transform="translate(95.00 703.27) scale(0.92 1)" font-size="10.3" text-anchor="end">0.250</text>
<text transform="translate(63.20 660.80) rotate(-90)" font-size="10.2" text-anchor="middle">Scale Power</text>
<text transform="translate(216.50 742.80)" font-size="10.6" text-anchor="middle">Angle</text>
<rect x="343" y="620" width="10" height="91" fill="url(#jet)"/>
<rect x="343.5" y="620.5" width="9" height="90" fill="none" stroke="#000" stroke-opacity="0.45"/>
<line x1="343" y1="635.5" x2="344.5" y2="635.5" stroke="#000" stroke-width="1" />
<line x1="353" y1="635.5" x2="351.5" y2="635.5" stroke="#000" stroke-width="1" />
<text transform="translate(355.40 638.60) scale(0.88 1)" font-size="10.6">2</text>
<line x1="343" y1="663.5" x2="344.5" y2="663.5" stroke="#000" stroke-width="1" />
<line x1="353" y1="663.5" x2="351.5" y2="663.5" stroke="#000" stroke-width="1" />
<text transform="translate(355.40 666.60) scale(0.88 1)" font-size="10.6">0</text>
<line x1="343" y1="694.5" x2="344.5" y2="694.5" stroke="#000" stroke-width="1" />
<line x1="353" y1="694.5" x2="351.5" y2="694.5" stroke="#000" stroke-width="1" />
<text transform="translate(354.00 697.60) scale(0.88 1)" font-size="10.6">-2</text>
<line x1="410.5" y1="570.5" x2="646" y2="570.5" stroke="#000" stroke-width="1" stroke-dasharray="2.8 2.15"/>
<line x1="410.5" y1="570.5" x2="646" y2="570.5" stroke="#000" stroke-width="1" stroke-dasharray="2.8 2.15"/>
<line x1="410.5" y1="570.5" x2="646" y2="570.5" stroke="#000" stroke-width="1" stroke-dasharray="2.8 2.15"/>
<line x1="410.5" y1="570.5" x2="646" y2="570.5" stroke="#000" stroke-width="1" stroke-dasharray="2.8 2.15"/>
<line x1="410.5" y1="569.5" x2="646" y2="569.5" stroke="#000" stroke-width="1" stroke-dasharray="2.8 2.15"/>
<line x1="410.5" y1="568.5" x2="646" y2="568.5" stroke="#000" stroke-width="1" stroke-dasharray="2.8 2.15"/>
<line x1="410.5" y1="566.5" x2="646" y2="566.5" stroke="#000" stroke-width="1" stroke-dasharray="2.8 2.15"/>
<line x1="410.5" y1="564.5" x2="646" y2="564.5" stroke="#000" stroke-width="1" stroke-dasharray="2.8 2.15" stroke-opacity="0.55"/>
<line x1="410.5" y1="562.5" x2="646" y2="562.5" stroke="#000" stroke-width="1" stroke-dasharray="2.8 2.15"/>
<line x1="410.5" y1="559.5" x2="646" y2="559.5" stroke="#000" stroke-width="1" stroke-dasharray="2.8 2.15" stroke-opacity="0.75"/>
<line x1="410.5" y1="554.5" x2="646" y2="554.5" stroke="#000" stroke-width="1" stroke-dasharray="2.8 2.15"/>
<line x1="410.5" y1="546.5" x2="646" y2="546.5" stroke="#000" stroke-width="1" stroke-dasharray="2.8 2.15"/>
<line x1="410.5" y1="536.5" x2="646" y2="536.5" stroke="#000" stroke-width="1" stroke-dasharray="2.8 2.15"/>
<line x1="410.5" y1="522.5" x2="646" y2="522.5" stroke="#000" stroke-width="1" stroke-dasharray="2.8 2.15"/>
<line x1="410.5" y1="502.5" x2="646" y2="502.5" stroke="#000" stroke-width="1" stroke-dasharray="2.8 2.15"/>
<line x1="410.5" y1="474.5" x2="646" y2="474.5" stroke="#000" stroke-width="1" stroke-dasharray="2.8 2.15"/>
<line x1="410.5" y1="458.5" x2="646.5" y2="458.5" stroke="#000" stroke-width="1" stroke-opacity="0.6"/>
<line x1="410.5" y1="458.5" x2="410.5" y2="571.5" stroke="#000" stroke-width="1" stroke-opacity="0.5"/>
<line x1="646.5" y1="458" x2="646.5" y2="572" stroke="#000" stroke-width="1" />
<line x1="410" y1="571.5" x2="647" y2="571.5" stroke="#000" stroke-width="1" />
<line x1="457.5" y1="458.5" x2="457.5" y2="461" stroke="#000" stroke-width="1" />
<line x1="504.5" y1="458.5" x2="504.5" y2="461" stroke="#000" stroke-width="1" />
<line x1="551.5" y1="458.5" x2="551.5" y2="461" stroke="#000" stroke-width="1" />
<line x1="598.5" y1="458.5" x2="598.5" y2="461" stroke="#000" stroke-width="1" />
<text transform="translate(410.20 583.60) scale(0.95 1)" font-size="10.4" text-anchor="middle">0</text>
<text transform="translate(457.40 583.60) scale(0.95 1)" font-size="10.4" text-anchor="middle">0.2</text>
<text transform="translate(504.60 583.60) scale(0.95 1)" font-size="10.4" text-anchor="middle">0.4</text>
<text transform="translate(551.80 583.60) scale(0.95 1)" font-size="10.4" text-anchor="middle">0.6</text>
<text transform="translate(599.00 583.60) scale(0.95 1)" font-size="10.4" text-anchor="middle">0.8</text>
<text transform="translate(646.20 583.60) scale(0.95 1)" font-size="10.4" text-anchor="middle">1</text>
<text transform="translate(406.00 477.69) scale(0.92 1)" font-size="10.3" text-anchor="end">1.416</text>
<text transform="translate(406.00 506.06) scale(0.92 1)" font-size="10.3" text-anchor="end">1.001</text>
<text transform="translate(406.00 526.12) scale(0.92 1)" font-size="10.3" text-anchor="end">0.708</text>
<text transform="translate(406.00 540.31) scale(0.92 1)" font-size="10.3" text-anchor="end">0.500</text>
<text transform="translate(406.00 550.34) scale(0.92 1)" font-size="10.3" text-anchor="end">0.354</text>
<text transform="translate(406.00 557.43) scale(0.92 1)" font-size="10.3" text-anchor="end">0.250</text>
<text transform="translate(527.50 597.50)" font-size="10.6" text-anchor="middle">Real part</text>
<rect x="653" y="473" width="10" height="92" fill="url(#jet)"/>
<rect x="653.5" y="473.5" width="9" height="91" fill="none" stroke="#000" stroke-opacity="0.45"/>
<line x1="653" y1="495.5" x2="654.5" y2="495.5" stroke="#000" stroke-width="1" />
<line x1="663" y1="495.5" x2="661.5" y2="495.5" stroke="#000" stroke-width="1" />
<text transform="translate(666.40 498.60) scale(0.88 1)" font-size="10.6">5</text>
<line x1="653" y1="518.5" x2="654.5" y2="518.5" stroke="#000" stroke-width="1" />
<line x1="663" y1="518.5" x2="661.5" y2="518.5" stroke="#000" stroke-width="1" />
<text transform="translate(666.40 521.60) scale(0.88 1)" font-size="10.6">0</text>
<line x1="653" y1="541.5" x2="654.5" y2="541.5" stroke="#000" stroke-width="1" />
<line x1="663" y1="541.5" x2="661.5" y2="541.5" stroke="#000" stroke-width="1" />
<text transform="translate(665.00 544.60) scale(0.88 1)" font-size="10.6">-5</text>
<line x1="410.5" y1="716.5" x2="646" y2="716.5" stroke="#000" stroke-width="1" stroke-dasharray="2.8 2.15"/>
<line x1="410.5" y1="716.5" x2="646" y2="716.5" stroke="#000" stroke-width="1" stroke-dasharray="2.8 2.15"/>
<line x1="410.5" y1="716.5" x2="646" y2="716.5" stroke="#000" stroke-width="1" stroke-dasharray="2.8 2.15"/>
<line x1="410.5" y1="716.5" x2="646" y2="716.5" stroke="#000" stroke-width="1" stroke-dasharray="2.8 2.15"/>
<line x1="410.5" y1="715.5" x2="646" y2="715.5" stroke="#000" stroke-width="1" stroke-dasharray="2.8 2.15"/>
<line x1="410.5" y1="714.5" x2="646" y2="714.5" stroke="#000" stroke-width="1" stroke-dasharray="2.8 2.15"/>
<line x1="410.5" y1="712.5" x2="646" y2="712.5" stroke="#000" stroke-width="1" stroke-dasharray="2.8 2.15"/>
<line x1="410.5" y1="710.5" x2="646" y2="710.5" stroke="#000" stroke-width="1" stroke-dasharray="2.8 2.15"/>
<line x1="410.5" y1="708.5" x2="646" y2="708.5" stroke="#000" stroke-width="1" stroke-dasharray="2.8 2.15" stroke-opacity="0.6"/>
<line x1="410.5" y1="704.5" x2="646" y2="704.5" stroke="#000" stroke-width="1" stroke-dasharray="2.8 2.15" stroke-opacity="0.6"/>
<line x1="410.5" y1="699.5" x2="646" y2="699.5" stroke="#000" stroke-width="1" stroke-dasharray="2.8 2.15" stroke-opacity="0.6"/>
<line x1="410.5" y1="692.5" x2="646" y2="692.5" stroke="#000" stroke-width="1" stroke-dasharray="2.8 2.15"/>
<line x1="410.5" y1="682.5" x2="646" y2="682.5" stroke="#000" stroke-width="1" stroke-dasharray="2.8 2.15"/>
<line x1="410.5" y1="669.5" x2="646" y2="669.5" stroke="#000" stroke-width="1" stroke-dasharray="2.8 2.15"/>
<line x1="410.5" y1="649.5" x2="646" y2="649.5" stroke="#000" stroke-width="1" stroke-dasharray="2.8 2.15"/>
<line x1="410.5" y1="621.5" x2="646" y2="621.5" stroke="#000" stroke-width="1" stroke-dasharray="2.8 2.15"/>
<line x1="410.5" y1="604.5" x2="646.5" y2="604.5" stroke="#000" stroke-width="1" />
<line x1="410.5" y1="604.5" x2="410.5" y2="717.5" stroke="#000" stroke-width="1" stroke-opacity="0.5"/>
<line x1="646.5" y1="604" x2="646.5" y2="718" stroke="#000" stroke-width="1" />
<line x1="410" y1="717.5" x2="647" y2="717.5" stroke="#000" stroke-width="1" />
<line x1="457.5" y1="604.5" x2="457.5" y2="607" stroke="#000" stroke-width="1" />
<line x1="504.5" y1="604.5" x2="504.5" y2="607" stroke="#000" stroke-width="1" />
<line x1="551.5" y1="604.5" x2="551.5" y2="607" stroke="#000" stroke-width="1" />
<line x1="598.5" y1="604.5" x2="598.5" y2="607" stroke="#000" stroke-width="1" />
<text transform="translate(410.20 729.00) scale(0.95 1)" font-size="10.0" text-anchor="middle">0</text>
<text transform="translate(457.40 729.00) scale(0.95 1)" font-size="10.0" text-anchor="middle">0.2</text>
<text transform="translate(504.60 729.00) scale(0.95 1)" font-size="10.0" text-anchor="middle">0.4</text>
<text transform="translate(551.80 729.00) scale(0.95 1)" font-size="10.0" text-anchor="middle">0.6</text>
<text transform="translate(599.00 729.00) scale(0.95 1)" font-size="10.0" text-anchor="middle">0.8</text>
<text transform="translate(646.20 729.00) scale(0.95 1)" font-size="10.0" text-anchor="middle">1</text>
<text transform="translate(406.00 625.10) scale(0.92 1)" font-size="10.3" text-anchor="end">1.416</text>
<text transform="translate(406.00 652.91) scale(0.92 1)" font-size="10.3" text-anchor="end">1.001</text>
<text transform="translate(406.00 672.58) scale(0.92 1)" font-size="10.3" text-anchor="end">0.708</text>
<text transform="translate(406.00 686.49) scale(0.92 1)" font-size="10.3" text-anchor="end">0.500</text>
<text transform="translate(406.00 696.32) scale(0.92 1)" font-size="10.3" text-anchor="end">0.354</text>
<text transform="translate(406.00 703.27) scale(0.92 1)" font-size="10.3" text-anchor="end">0.250</text>
<text transform="translate(527.50 742.80)" font-size="10.6" text-anchor="middle">Imaginary part</text>
<rect x="653" y="620" width="10" height="91" fill="url(#jet)"/>
<rect x="653.5" y="620.5" width="9" height="90" fill="none" stroke="#000" stroke-opacity="0.45"/>
<line x1="653" y1="638.5" x2="654.5" y2="638.5" stroke="#000" stroke-width="1" />
<line x1="663" y1="638.5" x2="661.5" y2="638.5" stroke="#000" stroke-width="1" />
<text transform="translate(666.40 641.60) scale(0.88 1)" font-size="10.6">5</text>
<line x1="653" y1="662.5" x2="654.5" y2="662.5" stroke="#000" stroke-width="1" />
<line x1="663" y1="662.5" x2="661.5" y2="662.5" stroke="#000" stroke-width="1" />
<text transform="translate(666.40 665.60) scale(0.88 1)" font-size="10.6">0</text>
<line x1="653" y1="686.5" x2="654.5" y2="686.5" stroke="#000" stroke-width="1" />
<line x1="663" y1="686.5" x2="661.5" y2="686.5" stroke="#000" stroke-width="1" />
<text transform="translate(665.00 689.60) scale(0.88 1)" font-size="10.6">-5</text>
<circle cx="27.9" cy="759.9" r="4.6" fill="url(#rg)" stroke="#8a8a8a" stroke-width="1.1"/>
<text transform="translate(37.50 764.00)" font-size="12.1">Reconstructed Signal On/Off</text>
</svg>
</body></html>
